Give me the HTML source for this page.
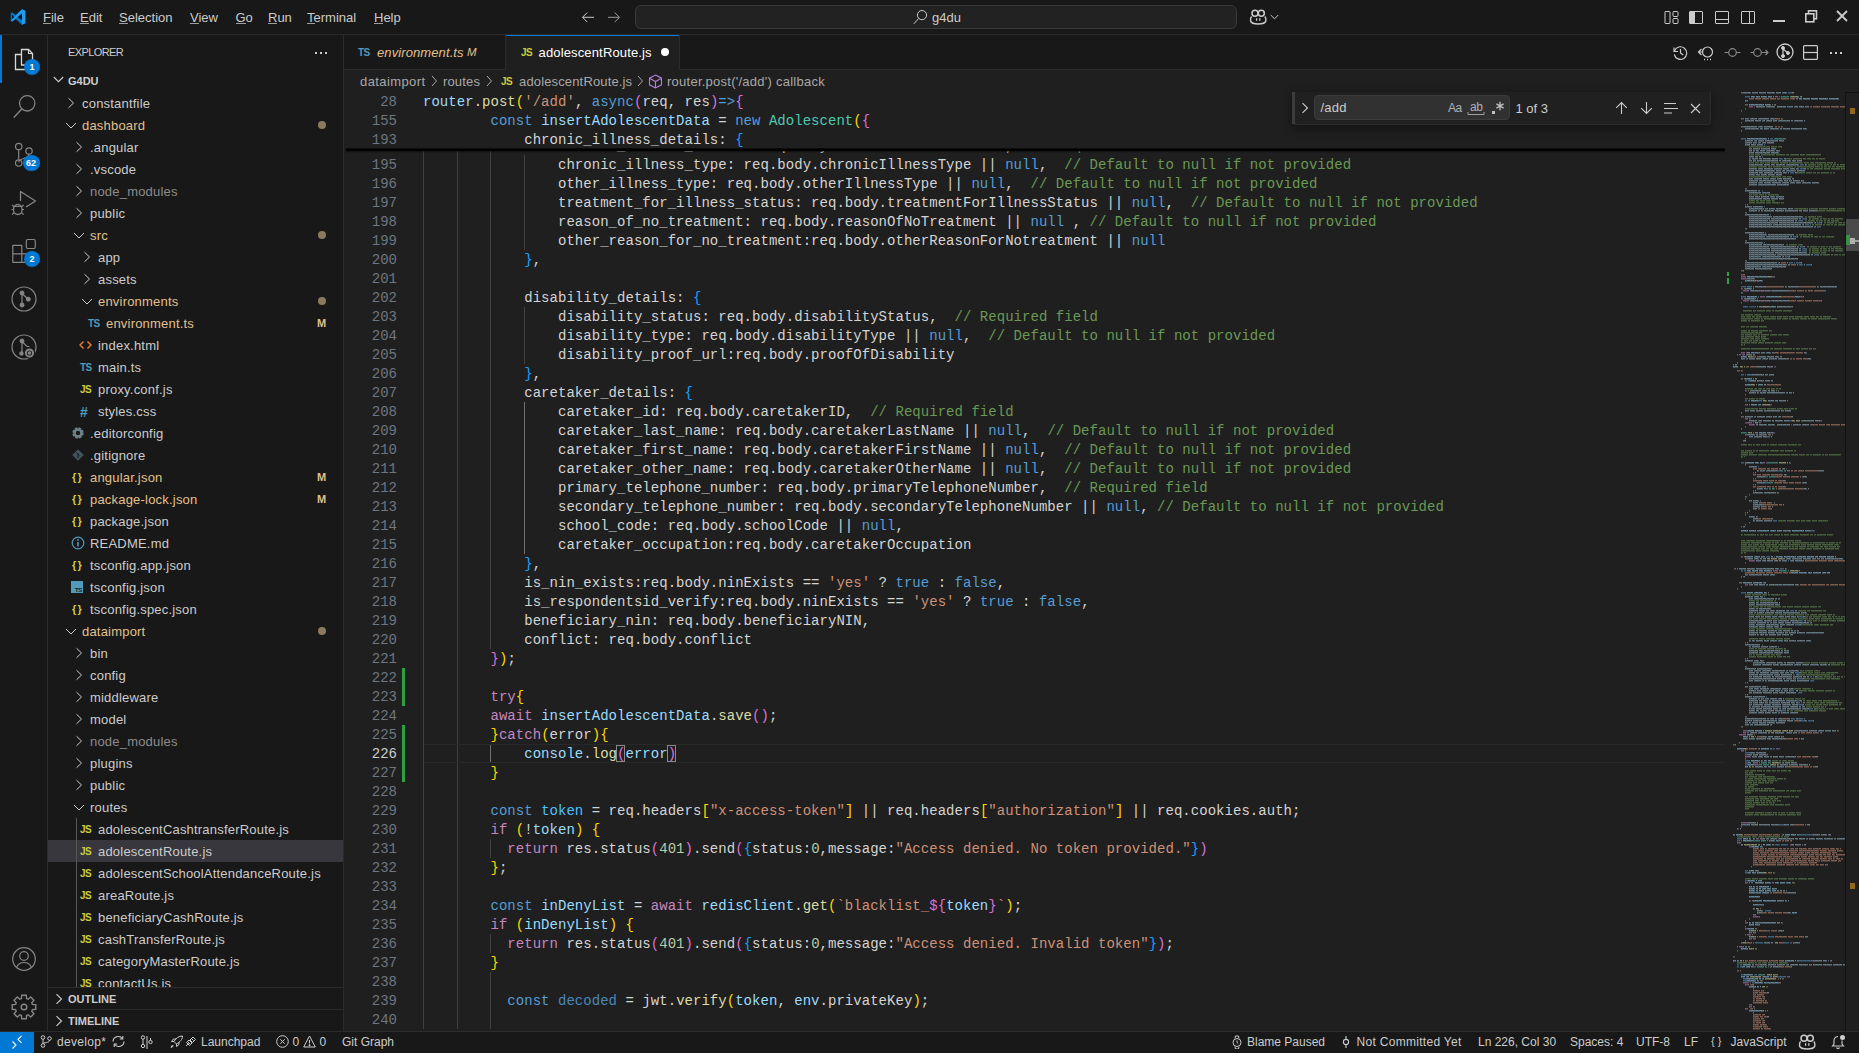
<!DOCTYPE html><html><head><meta charset="utf-8"><style>
*{margin:0;padding:0;box-sizing:border-box}
html,body{width:1859px;height:1053px;overflow:hidden;background:#181818}
body{position:relative;font-family:'Liberation Sans', sans-serif;color:#cccccc;font-size:13px}
.a{position:absolute}
.t{position:absolute;white-space:pre;line-height:1}
.code{position:absolute;margin-top:1px;left:423px;white-space:pre;font-family:'Liberation Mono', monospace;font-size:14px;line-height:19px;height:19px;color:#d4d4d4;letter-spacing:0.036px}
.ln{position:absolute;margin-top:1px;left:344px;width:53px;text-align:right;font-family:'Liberation Mono', monospace;font-size:14px;line-height:19px;height:19px;color:#6e7681}
.ig{position:absolute;width:1px;background:#404040}
.mm{position:absolute;height:1px}
</style></head><body>
<div class="a" style="left:0px;top:0px;width:1859px;height:34px;background:#181818;"></div>
<div class="a" style="left:0px;top:34px;width:1859px;height:1px;background:#2b2b2b;"></div>
<div class="a" style="left:47px;top:35px;width:1px;height:996px;background:#2b2b2b;"></div>
<div class="a" style="left:343px;top:35px;width:1px;height:996px;background:#2b2b2b;"></div>
<div class="a" style="left:344px;top:70px;width:1515px;height:961px;background:#1f1f1f;"></div>
<div class="a" style="left:0px;top:1031px;width:1859px;height:1px;background:#2b2b2b;"></div>
<svg class="a" style="left:10px;top:9px" width="16" height="16" viewBox="0 0 100 100">
<path d="M96 11 L75 1 L35 38 L14 22 L4 27 L4 73 L14 78 L35 62 L75 99 L96 89 Z" fill="#0065a9"/>
<path d="M75 1 L96 11 L96 89 L75 99 Z" fill="#1f9cf0"/>
<path d="M75 27 L75 73 L45 50 Z" fill="#181818"/>
<path d="M14 34 L28 50 L14 66 Z" fill="#181818"/>
<path d="M4 27 L14 22 L75 73 L75 99 L4 27Z" fill="#007acc" opacity="0.9"/>
<path d="M4 73 L14 78 L75 27 L75 1 Z" fill="#1f9cf0"/>
</svg>
<div class="t" style="left:43px;top:11.00px;font-size:13px;height:13px;color:#cccccc;font-weight:normal;font-style:normal;font-family:'Liberation Sans', sans-serif;">File</div>
<div class="a" style="left:43px;top:23px;width:8px;height:1px;background:#9d9d9d;"></div>
<div class="t" style="left:80px;top:11.00px;font-size:13px;height:13px;color:#cccccc;font-weight:normal;font-style:normal;font-family:'Liberation Sans', sans-serif;">Edit</div>
<div class="a" style="left:80px;top:23px;width:9px;height:1px;background:#9d9d9d;"></div>
<div class="t" style="left:119px;top:11.00px;font-size:13px;height:13px;color:#cccccc;font-weight:normal;font-style:normal;font-family:'Liberation Sans', sans-serif;">Selection</div>
<div class="a" style="left:119px;top:23px;width:9px;height:1px;background:#9d9d9d;"></div>
<div class="t" style="left:190px;top:11.00px;font-size:13px;height:13px;color:#cccccc;font-weight:normal;font-style:normal;font-family:'Liberation Sans', sans-serif;">View</div>
<div class="a" style="left:190px;top:23px;width:9px;height:1px;background:#9d9d9d;"></div>
<div class="t" style="left:235.5px;top:11.00px;font-size:13px;height:13px;color:#cccccc;font-weight:normal;font-style:normal;font-family:'Liberation Sans', sans-serif;">Go</div>
<div class="a" style="left:235.5px;top:23px;width:10px;height:1px;background:#9d9d9d;"></div>
<div class="t" style="left:268px;top:11.00px;font-size:13px;height:13px;color:#cccccc;font-weight:normal;font-style:normal;font-family:'Liberation Sans', sans-serif;">Run</div>
<div class="a" style="left:268px;top:23px;width:9px;height:1px;background:#9d9d9d;"></div>
<div class="t" style="left:307px;top:11.00px;font-size:13px;height:13px;color:#cccccc;font-weight:normal;font-style:normal;font-family:'Liberation Sans', sans-serif;">Terminal</div>
<div class="a" style="left:307px;top:23px;width:8px;height:1px;background:#9d9d9d;"></div>
<div class="t" style="left:374px;top:11.00px;font-size:13px;height:13px;color:#cccccc;font-weight:normal;font-style:normal;font-family:'Liberation Sans', sans-serif;">Help</div>
<div class="a" style="left:374px;top:23px;width:9px;height:1px;background:#9d9d9d;"></div>
<svg class="a" style="left:581px;top:10px;color:#cccccc;" width="14" height="14" viewBox="0 0 14 14" fill="none" stroke="currentColor"><path d="M13 7.3H1.8M6.3 2.5L1.5 7.3l4.8 4.8" stroke-width="1"/></svg>
<svg class="a" style="left:607px;top:10px;color:#9d9d9d;" width="14" height="14" viewBox="0 0 14 14" fill="none" stroke="currentColor"><path d="M1 7.3h11.2M7.7 2.5l4.8 4.8-4.8 4.8" stroke-width="1"/></svg>
<div class="a" style="left:635px;top:5px;width:602px;height:24px;border:1px solid #3a3a3a;border-radius:6px;background:#222222"></div>
<svg class="a" style="left:910px;top:8px;color:#cccccc;" width="20" height="20" viewBox="0 0 20 20" fill="none" stroke="currentColor"><circle cx="12" cy="7.1" r="4.6" stroke-width="1"/><path d="M8.7 10.5L3.8 15.8" stroke-width="1"/></svg>
<div class="t" style="left:932px;top:11.00px;font-size:13px;height:13px;color:#cccccc;font-weight:normal;font-style:normal;font-family:'Liberation Sans', sans-serif;">g4du</div>
<svg class="a" style="left:1240px;top:0px;color:#cccccc;" width="50" height="35" viewBox="0 0 50 35" fill="none" stroke="currentColor"><circle cx="15" cy="13.3" r="3" stroke-width="1.5"/><circle cx="21.3" cy="13.3" r="3" stroke-width="1.5"/><path d="M11.6 16.5C10.6 17.5 10.3 19.5 10.6 21C11.2 23.3 14.5 24 18.2 24S25.2 23.3 25.8 21C26.1 19.5 25.8 17.5 24.8 16.5" stroke-width="1.5"/><path d="M16.6 18.2v2.6M19.8 18.2v2.6" stroke-width="1.3"/></svg>
<svg class="a" style="left:1270px;top:14px;color:#cccccc;" width="9" height="6" viewBox="0 0 9 6" fill="none" stroke="currentColor"><path d="M0.7 1l3.8 3.8L8.3 1" stroke-width="1"/></svg>
<svg class="a" style="left:1664px;top:10px;color:#cccccc;" width="15" height="15" viewBox="0 0 15 15" fill="none" stroke="currentColor"><rect x="1" y="1.5" width="5" height="12" rx="0.5" stroke-width="1"/><rect x="9" y="1.5" width="5" height="5" rx="1" stroke-width="1"/><rect x="9" y="8.5" width="5" height="5" rx="1" stroke-width="1"/></svg>
<svg class="a" style="left:1689px;top:10px;color:#cccccc;" width="14" height="15" viewBox="0 0 14 15" fill="none" stroke="currentColor"><rect x="0.5" y="1.5" width="13" height="12" rx="0.5" stroke-width="1"/><rect x="1" y="2" width="5" height="11" fill="currentColor" stroke="none"/></svg>
<svg class="a" style="left:1715px;top:10px;color:#cccccc;" width="14" height="15" viewBox="0 0 14 15" fill="none" stroke="currentColor"><rect x="0.5" y="1.5" width="13" height="12" rx="0.5" stroke-width="1"/><path d="M1 9.5h12" stroke-width="1"/></svg>
<svg class="a" style="left:1741px;top:10px;color:#cccccc;" width="14" height="15" viewBox="0 0 14 15" fill="none" stroke="currentColor"><rect x="0.5" y="1.5" width="13" height="12" rx="0.5" stroke-width="1"/><path d="M8.5 2v11" stroke-width="1"/></svg>
<div class="a" style="left:1773px;top:20px;width:12px;height:2px;background:#cccccc;"></div>
<svg class="a" style="left:1804px;top:9px;color:#cccccc;" width="14" height="14" viewBox="0 0 14 14" fill="none" stroke="currentColor"><rect x="4.5" y="1.8" width="8" height="8" stroke-width="1.6"/><rect x="6.5" y="3.8" width="4" height="4" fill="#181818" stroke="none"/><rect x="1.8" y="4.8" width="8" height="8" fill="#181818" stroke-width="1.6"/></svg>
<svg class="a" style="left:1836px;top:10px;color:#cccccc;" width="12" height="12" viewBox="0 0 12 12" fill="none" stroke="currentColor"><path d="M1 1l10 10M11 1L1 11" stroke-width="1.8"/></svg>
<div class="a" style="left:0px;top:35px;width:2px;height:48px;background:#0078d4;"></div>
<svg class="a" style="left:12px;top:46px;color:#d7d7d7;" width="24" height="26" viewBox="0 0 24 26" fill="none" stroke="currentColor"><path d="M9.5 3.5h7l4 4v11.5h-11z" stroke-width="1.3"/><path d="M16.5 3.5v4h4" stroke-width="1.1"/><path d="M9.5 8.5h-6v15h11.5v-4.5" stroke-width="1.3"/></svg>
<div class="a" style="left:24px;top:59px;width:16px;height:16px;border-radius:8px;background:#0078d4;color:#fff;font-size:9px;font-weight:bold;line-height:16px;text-align:center">1</div>
<svg class="a" style="left:0px;top:83px;color:#868686;" width="48" height="48" viewBox="0 0 48 48" fill="none" stroke="currentColor"><circle cx="27.2" cy="20.3" r="7.7" stroke-width="1.3"/><path d="M21.8 26L13.8 34.5" stroke-width="1.4"/></svg>
<svg class="a" style="left:0px;top:131px;color:#868686;" width="48" height="48" viewBox="0 0 48 48" fill="none" stroke="currentColor"><circle cx="18.7" cy="15.5" r="3.2" stroke-width="1.2"/><circle cx="18.7" cy="32" r="3.2" stroke-width="1.2"/><circle cx="29" cy="20" r="3.2" stroke-width="1.2"/><path d="M18.7 18.7v10.1M29 23.2c0 5-10.3 3.5-10.3 8" stroke-width="1.2"/></svg>
<div class="a" style="left:22.5px;top:154.5px;width:17px;height:16px;border-radius:8px;background:#0078d4;color:#fff;font-size:9px;font-weight:bold;line-height:16px;text-align:center">62</div>
<svg class="a" style="left:0px;top:180px;color:#868686;" width="48" height="48" viewBox="0 0 48 48" fill="none" stroke="currentColor"><path d="M20.5 21V11.5L35.5 21L26 27" stroke-width="1.3" stroke-linejoin="round"/><ellipse cx="17.8" cy="29.5" rx="4.3" ry="5" stroke-width="1.3"/><path d="M14 26.5h7.6M12 25l2.2 1.8M23.6 25l-2.2 1.8M11.5 29.5h2.3M21.8 29.5h2.3M12 34.5l2.2-1.8M23.6 34.5l-2.2-1.8" stroke-width="1.1"/></svg>
<svg class="a" style="left:0px;top:228px;color:#868686;" width="48" height="48" viewBox="0 0 48 48" fill="none" stroke="currentColor"><path d="M12.8 17.3h9v17h-9zM12.8 25.8h17.5v8.5h-8.5" stroke-width="1.2" stroke-linejoin="round"/><rect x="26.3" y="11.5" width="9" height="9" rx="1.5" stroke-width="1.2"/></svg>
<div class="a" style="left:24px;top:251px;width:16px;height:16px;border-radius:8px;background:#0078d4;color:#fff;font-size:9px;font-weight:bold;line-height:16px;text-align:center">2</div>
<svg class="a" style="left:0px;top:275px;color:#868686;" width="48" height="48" viewBox="0 0 48 48" fill="none" stroke="currentColor"><circle cx="24" cy="24" r="12" stroke-width="1.2"/><circle cx="22" cy="18" r="2" fill="currentColor"/><circle cx="22" cy="30" r="2" fill="currentColor"/><circle cx="28.3" cy="24.2" r="2" fill="currentColor"/><path d="M22 18v12M22 18.5l6 5.5" stroke-width="1.2"/></svg>
<svg class="a" style="left:0px;top:323px;color:#868686;" width="48" height="48" viewBox="0 0 48 48" fill="none" stroke="currentColor"><circle cx="24" cy="24" r="12" stroke-width="1.2"/><circle cx="22" cy="18" r="2" fill="currentColor"/><circle cx="21.5" cy="30.5" r="1.8" fill="currentColor"/><path d="M22 18v12M22 18.5l5 5h2.5" stroke-width="1.2"/><circle cx="29.5" cy="30" r="5.8" fill="#181818" stroke="none"/><circle cx="29.5" cy="30" r="3.6" stroke-width="2"/><circle cx="29.5" cy="30" r="1.8" fill="currentColor" stroke="none"/></svg>
<svg class="a" style="left:11px;top:946px;color:#868686;" width="26" height="26" viewBox="0 0 26 26" fill="none" stroke="currentColor"><circle cx="13" cy="13" r="11.3" stroke-width="1.2"/><circle cx="13" cy="10" r="4.3" stroke-width="1.2"/><path d="M5.5 21.5c1.5-3.5 4.5-5 7.5-5s6 1.5 7.5 5" stroke-width="1.2"/></svg>
<svg class="a" style="left:11px;top:994px;color:#868686;" width="26" height="26" viewBox="0 0 26 26" fill="none" stroke="currentColor"><path d="M24.78 10.73 L24.78 15.27 L21.41 15.60 L20.78 17.11 L22.94 19.73 L19.73 22.94 L17.11 20.78 L15.60 21.41 L15.27 24.78 L10.73 24.78 L10.40 21.41 L8.89 20.78 L6.27 22.94 L3.06 19.73 L5.22 17.11 L4.59 15.60 L1.22 15.27 L1.22 10.73 L4.59 10.40 L5.22 8.89 L3.06 6.27 L6.27 3.06 L8.89 5.22 L10.40 4.59 L10.73 1.22 L15.27 1.22 L15.60 4.59 L17.11 5.22 L19.73 3.06 L22.94 6.27 L20.78 8.89 L21.41 10.40Z" stroke-width="1.4" stroke-linejoin="miter"/><circle cx="13" cy="13" r="2.8" stroke-width="1.4"/></svg>
<div class="t" style="left:68px;top:47.00px;font-size:11px;height:11px;color:#cccccc;font-weight:normal;font-style:normal;font-family:'Liberation Sans', sans-serif;letter-spacing:-0.6px">EXPLORER</div>
<div class="a" style="left:315px;top:52px;width:2px;height:2px;background:#cccccc;"></div>
<div class="a" style="left:320px;top:52px;width:2px;height:2px;background:#cccccc;"></div>
<div class="a" style="left:325px;top:52px;width:2px;height:2px;background:#cccccc;"></div>
<svg class="a" style="left:53px;top:76px;color:#cccccc;" width="11" height="7" viewBox="0 0 11 7" fill="none" stroke="currentColor"><path d="M0.8 1l4.7 4.7L10.2 1" stroke-width="1.1"/></svg>
<div class="t" style="left:68px;top:75.50px;font-size:11px;height:11px;color:#cccccc;font-weight:bold;font-style:normal;font-family:'Liberation Sans', sans-serif;">G4DU</div>
<div class="a" style="left:48px;top:92px;width:295px;height:895px;overflow:hidden">
<svg class="a" style="left:19.4px;top:5px;color:#cccccc;" width="8" height="12" viewBox="0 0 8 12" fill="none" stroke="currentColor"><path d="M1.5 1.2l5 4.8-5 4.8" stroke-width="1"/></svg>
<div class="t" style="left:34px;top:4.50px;font-size:13px;height:13px;color:#cccccc;letter-spacing:0.2px">constantfile</div>
<svg class="a" style="left:17px;top:29px;color:#cccccc;" width="12" height="8" viewBox="0 0 12 8" fill="none" stroke="currentColor"><path d="M1 2l5 5 5-5" stroke-width="1"/></svg>
<div class="t" style="left:34px;top:26.50px;font-size:13px;height:13px;color:#e2c08d;letter-spacing:0.2px">dashboard</div>
<div class="a" style="left:270px;top:29px;width:8px;height:8px;background:#8c7a5e;border-radius:4px"></div>
<svg class="a" style="left:27.4px;top:49px;color:#cccccc;" width="8" height="12" viewBox="0 0 8 12" fill="none" stroke="currentColor"><path d="M1.5 1.2l5 4.8-5 4.8" stroke-width="1"/></svg>
<div class="t" style="left:42px;top:48.50px;font-size:13px;height:13px;color:#cccccc;letter-spacing:0.2px">.angular</div>
<svg class="a" style="left:27.4px;top:71px;color:#cccccc;" width="8" height="12" viewBox="0 0 8 12" fill="none" stroke="currentColor"><path d="M1.5 1.2l5 4.8-5 4.8" stroke-width="1"/></svg>
<div class="t" style="left:42px;top:70.50px;font-size:13px;height:13px;color:#cccccc;letter-spacing:0.2px">.vscode</div>
<svg class="a" style="left:27.4px;top:93px;color:#cccccc;" width="8" height="12" viewBox="0 0 8 12" fill="none" stroke="currentColor"><path d="M1.5 1.2l5 4.8-5 4.8" stroke-width="1"/></svg>
<div class="t" style="left:42px;top:92.50px;font-size:13px;height:13px;color:#8c8c8c;letter-spacing:0.2px">node_modules</div>
<svg class="a" style="left:27.4px;top:115px;color:#cccccc;" width="8" height="12" viewBox="0 0 8 12" fill="none" stroke="currentColor"><path d="M1.5 1.2l5 4.8-5 4.8" stroke-width="1"/></svg>
<div class="t" style="left:42px;top:114.50px;font-size:13px;height:13px;color:#cccccc;letter-spacing:0.2px">public</div>
<svg class="a" style="left:25px;top:139px;color:#cccccc;" width="12" height="8" viewBox="0 0 12 8" fill="none" stroke="currentColor"><path d="M1 2l5 5 5-5" stroke-width="1"/></svg>
<div class="t" style="left:42px;top:136.50px;font-size:13px;height:13px;color:#e2c08d;letter-spacing:0.2px">src</div>
<div class="a" style="left:270px;top:139px;width:8px;height:8px;background:#8c7a5e;border-radius:4px"></div>
<svg class="a" style="left:35.4px;top:159px;color:#cccccc;" width="8" height="12" viewBox="0 0 8 12" fill="none" stroke="currentColor"><path d="M1.5 1.2l5 4.8-5 4.8" stroke-width="1"/></svg>
<div class="t" style="left:50px;top:158.50px;font-size:13px;height:13px;color:#cccccc;letter-spacing:0.2px">app</div>
<svg class="a" style="left:35.4px;top:181px;color:#cccccc;" width="8" height="12" viewBox="0 0 8 12" fill="none" stroke="currentColor"><path d="M1.5 1.2l5 4.8-5 4.8" stroke-width="1"/></svg>
<div class="t" style="left:50px;top:180.50px;font-size:13px;height:13px;color:#cccccc;letter-spacing:0.2px">assets</div>
<svg class="a" style="left:33px;top:205px;color:#cccccc;" width="12" height="8" viewBox="0 0 12 8" fill="none" stroke="currentColor"><path d="M1 2l5 5 5-5" stroke-width="1"/></svg>
<div class="t" style="left:50px;top:202.50px;font-size:13px;height:13px;color:#e2c08d;letter-spacing:0.2px">environments</div>
<div class="a" style="left:270px;top:205px;width:8px;height:8px;background:#8c7a5e;border-radius:4px"></div>
<div class="t" style="left:40px;top:226.50px;font-size:10px;height:10px;color:#519aba;font-weight:bold;letter-spacing:-0.6px">TS</div>
<div class="t" style="left:58px;top:224.50px;font-size:13px;height:13px;color:#e2c08d;letter-spacing:0.2px">environment.ts</div>
<div class="t" style="left:269px;top:225.50px;font-size:11px;height:11px;color:#e2c08d;font-weight:bold">M</div>
<svg class="a" style="left:31px;top:248px;color:#e37933;" width="13" height="10" viewBox="0 0 13 10" fill="none" stroke="currentColor"><path d="M4.5 1.5L1 5l3.5 3.5M8.5 1.5L12 5 8.5 8.5" stroke-width="1.5"/></svg>
<div class="t" style="left:50px;top:246.50px;font-size:13px;height:13px;color:#cccccc;letter-spacing:0.2px">index.html</div>
<div class="t" style="left:32px;top:270.50px;font-size:10px;height:10px;color:#519aba;font-weight:bold;letter-spacing:-0.6px">TS</div>
<div class="t" style="left:50px;top:268.50px;font-size:13px;height:13px;color:#cccccc;letter-spacing:0.2px">main.ts</div>
<div class="t" style="left:32px;top:292.50px;font-size:10px;height:10px;color:#cbcb41;font-weight:bold;letter-spacing:-0.6px">JS</div>
<div class="t" style="left:50px;top:290.50px;font-size:13px;height:13px;color:#cccccc;letter-spacing:0.2px">proxy.conf.js</div>
<div class="t" style="left:32px;top:312.50px;font-size:14px;height:14px;color:#519aba;font-weight:bold">#</div>
<div class="t" style="left:50px;top:312.50px;font-size:13px;height:13px;color:#cccccc;letter-spacing:0.2px">styles.css</div>
<svg class="a" style="left:23px;top:334px;color:#6d8086;" width="14" height="14" viewBox="0 0 14 14" fill="none" stroke="currentColor"><circle cx="7" cy="7" r="4.2" stroke-width="3" stroke-dasharray="2.2 1.1"/><circle cx="7" cy="7" r="3.5" stroke-width="2.6"/></svg>
<div class="t" style="left:42px;top:334.50px;font-size:13px;height:13px;color:#cccccc;letter-spacing:0.2px">.editorconfig</div>
<svg class="a" style="left:23px;top:356px;color:#41535b;" width="14" height="14" viewBox="0 0 14 14" fill="none" stroke="currentColor"><path d="M7 1.2L12.8 7 7 12.8 1.2 7z" fill="currentColor" stroke="none"/><path d="M5.5 4.5l3 3M7 6v4" stroke="#181818" stroke-width="1"/></svg>
<div class="t" style="left:42px;top:356.50px;font-size:13px;height:13px;color:#cccccc;letter-spacing:0.2px">.gitignore</div>
<div class="t" style="left:24px;top:380.00px;font-size:11px;height:11px;color:#cbcb41;font-weight:bold;letter-spacing:-0.9px">{ }</div>
<div class="t" style="left:42px;top:378.50px;font-size:13px;height:13px;color:#e2c08d;letter-spacing:0.2px">angular.json</div>
<div class="t" style="left:269px;top:379.50px;font-size:11px;height:11px;color:#e2c08d;font-weight:bold">M</div>
<div class="t" style="left:24px;top:402.00px;font-size:11px;height:11px;color:#cbcb41;font-weight:bold;letter-spacing:-0.9px">{ }</div>
<div class="t" style="left:42px;top:400.50px;font-size:13px;height:13px;color:#e2c08d;letter-spacing:0.2px">package-lock.json</div>
<div class="t" style="left:269px;top:401.50px;font-size:11px;height:11px;color:#e2c08d;font-weight:bold">M</div>
<div class="t" style="left:24px;top:424.00px;font-size:11px;height:11px;color:#cbcb41;font-weight:bold;letter-spacing:-0.9px">{ }</div>
<div class="t" style="left:42px;top:422.50px;font-size:13px;height:13px;color:#cccccc;letter-spacing:0.2px">package.json</div>
<svg class="a" style="left:23px;top:444px;color:#519aba;" width="14" height="14" viewBox="0 0 14 14" fill="none" stroke="currentColor"><circle cx="7" cy="7" r="5.8" stroke-width="1.2"/><path d="M7 6v4.5" stroke-width="1.6"/><circle cx="7" cy="4" r="0.9" fill="currentColor" stroke="none"/></svg>
<div class="t" style="left:42px;top:444.50px;font-size:13px;height:13px;color:#cccccc;letter-spacing:0.2px">README.md</div>
<div class="t" style="left:24px;top:468.00px;font-size:11px;height:11px;color:#cbcb41;font-weight:bold;letter-spacing:-0.9px">{ }</div>
<div class="t" style="left:42px;top:466.50px;font-size:13px;height:13px;color:#cccccc;letter-spacing:0.2px">tsconfig.app.json</div>
<div class="a" style="left:23px;top:489px;width:12px;height:12px;background:#519aba;"></div>
<div class="t" style="left:27px;top:495.00px;font-size:6px;height:6px;color:#1a1a1a;font-weight:bold;letter-spacing:-0.3px">TS</div>
<div class="t" style="left:42px;top:488.50px;font-size:13px;height:13px;color:#cccccc;letter-spacing:0.2px">tsconfig.json</div>
<div class="t" style="left:24px;top:512.00px;font-size:11px;height:11px;color:#cbcb41;font-weight:bold;letter-spacing:-0.9px">{ }</div>
<div class="t" style="left:42px;top:510.50px;font-size:13px;height:13px;color:#cccccc;letter-spacing:0.2px">tsconfig.spec.json</div>
<svg class="a" style="left:17px;top:535px;color:#cccccc;" width="12" height="8" viewBox="0 0 12 8" fill="none" stroke="currentColor"><path d="M1 2l5 5 5-5" stroke-width="1"/></svg>
<div class="t" style="left:34px;top:532.50px;font-size:13px;height:13px;color:#e2c08d;letter-spacing:0.2px">dataimport</div>
<div class="a" style="left:270px;top:535px;width:8px;height:8px;background:#8c7a5e;border-radius:4px"></div>
<svg class="a" style="left:27.4px;top:555px;color:#cccccc;" width="8" height="12" viewBox="0 0 8 12" fill="none" stroke="currentColor"><path d="M1.5 1.2l5 4.8-5 4.8" stroke-width="1"/></svg>
<div class="t" style="left:42px;top:554.50px;font-size:13px;height:13px;color:#cccccc;letter-spacing:0.2px">bin</div>
<svg class="a" style="left:27.4px;top:577px;color:#cccccc;" width="8" height="12" viewBox="0 0 8 12" fill="none" stroke="currentColor"><path d="M1.5 1.2l5 4.8-5 4.8" stroke-width="1"/></svg>
<div class="t" style="left:42px;top:576.50px;font-size:13px;height:13px;color:#cccccc;letter-spacing:0.2px">config</div>
<svg class="a" style="left:27.4px;top:599px;color:#cccccc;" width="8" height="12" viewBox="0 0 8 12" fill="none" stroke="currentColor"><path d="M1.5 1.2l5 4.8-5 4.8" stroke-width="1"/></svg>
<div class="t" style="left:42px;top:598.50px;font-size:13px;height:13px;color:#cccccc;letter-spacing:0.2px">middleware</div>
<svg class="a" style="left:27.4px;top:621px;color:#cccccc;" width="8" height="12" viewBox="0 0 8 12" fill="none" stroke="currentColor"><path d="M1.5 1.2l5 4.8-5 4.8" stroke-width="1"/></svg>
<div class="t" style="left:42px;top:620.50px;font-size:13px;height:13px;color:#cccccc;letter-spacing:0.2px">model</div>
<svg class="a" style="left:27.4px;top:643px;color:#cccccc;" width="8" height="12" viewBox="0 0 8 12" fill="none" stroke="currentColor"><path d="M1.5 1.2l5 4.8-5 4.8" stroke-width="1"/></svg>
<div class="t" style="left:42px;top:642.50px;font-size:13px;height:13px;color:#8c8c8c;letter-spacing:0.2px">node_modules</div>
<svg class="a" style="left:27.4px;top:665px;color:#cccccc;" width="8" height="12" viewBox="0 0 8 12" fill="none" stroke="currentColor"><path d="M1.5 1.2l5 4.8-5 4.8" stroke-width="1"/></svg>
<div class="t" style="left:42px;top:664.50px;font-size:13px;height:13px;color:#cccccc;letter-spacing:0.2px">plugins</div>
<svg class="a" style="left:27.4px;top:687px;color:#cccccc;" width="8" height="12" viewBox="0 0 8 12" fill="none" stroke="currentColor"><path d="M1.5 1.2l5 4.8-5 4.8" stroke-width="1"/></svg>
<div class="t" style="left:42px;top:686.50px;font-size:13px;height:13px;color:#cccccc;letter-spacing:0.2px">public</div>
<svg class="a" style="left:25px;top:711px;color:#cccccc;" width="12" height="8" viewBox="0 0 12 8" fill="none" stroke="currentColor"><path d="M1 2l5 5 5-5" stroke-width="1"/></svg>
<div class="t" style="left:42px;top:708.50px;font-size:13px;height:13px;color:#cccccc;letter-spacing:0.2px">routes</div>
<div class="t" style="left:32px;top:732.50px;font-size:10px;height:10px;color:#cbcb41;font-weight:bold;letter-spacing:-0.6px">JS</div>
<div class="t" style="left:50px;top:730.50px;font-size:13px;height:13px;color:#cccccc;letter-spacing:0.2px">adolescentCashtransferRoute.js</div>
<div class="a" style="left:0px;top:748px;width:295px;height:22px;background:#37373d;"></div>
<div class="t" style="left:32px;top:754.50px;font-size:10px;height:10px;color:#cbcb41;font-weight:bold;letter-spacing:-0.6px">JS</div>
<div class="t" style="left:50px;top:752.50px;font-size:13px;height:13px;color:#cccccc;letter-spacing:0.2px">adolescentRoute.js</div>
<div class="t" style="left:32px;top:776.50px;font-size:10px;height:10px;color:#cbcb41;font-weight:bold;letter-spacing:-0.6px">JS</div>
<div class="t" style="left:50px;top:774.50px;font-size:13px;height:13px;color:#cccccc;letter-spacing:0.2px">adolescentSchoolAttendanceRoute.js</div>
<div class="t" style="left:32px;top:798.50px;font-size:10px;height:10px;color:#cbcb41;font-weight:bold;letter-spacing:-0.6px">JS</div>
<div class="t" style="left:50px;top:796.50px;font-size:13px;height:13px;color:#cccccc;letter-spacing:0.2px">areaRoute.js</div>
<div class="t" style="left:32px;top:820.50px;font-size:10px;height:10px;color:#cbcb41;font-weight:bold;letter-spacing:-0.6px">JS</div>
<div class="t" style="left:50px;top:818.50px;font-size:13px;height:13px;color:#cccccc;letter-spacing:0.2px">beneficiaryCashRoute.js</div>
<div class="t" style="left:32px;top:842.50px;font-size:10px;height:10px;color:#cbcb41;font-weight:bold;letter-spacing:-0.6px">JS</div>
<div class="t" style="left:50px;top:840.50px;font-size:13px;height:13px;color:#cccccc;letter-spacing:0.2px">cashTransferRoute.js</div>
<div class="t" style="left:32px;top:864.50px;font-size:10px;height:10px;color:#cbcb41;font-weight:bold;letter-spacing:-0.6px">JS</div>
<div class="t" style="left:50px;top:862.50px;font-size:13px;height:13px;color:#cccccc;letter-spacing:0.2px">categoryMasterRoute.js</div>
<div class="t" style="left:32px;top:886.50px;font-size:10px;height:10px;color:#cbcb41;font-weight:bold;letter-spacing:-0.6px">JS</div>
<div class="t" style="left:50px;top:884.50px;font-size:13px;height:13px;color:#cccccc;letter-spacing:0.2px">contactUs.js</div>
<div class="a" style="left:28px;top:726px;width:1px;height:169px;background:#585858;"></div>
</div>
<div class="a" style="left:48px;top:987px;width:295px;height:1px;background:#2b2b2b;"></div>
<svg class="a" style="left:55px;top:993px;color:#cccccc;" width="8" height="12" viewBox="0 0 8 12" fill="none" stroke="currentColor"><path d="M1.5 1.2l5 4.8-5 4.8" stroke-width="1.1"/></svg>
<div class="t" style="left:68px;top:993.50px;font-size:11px;height:11px;color:#cccccc;font-weight:bold;font-style:normal;font-family:'Liberation Sans', sans-serif;">OUTLINE</div>
<div class="a" style="left:48px;top:1009px;width:295px;height:1px;background:#2b2b2b;"></div>
<svg class="a" style="left:55px;top:1015px;color:#cccccc;" width="8" height="12" viewBox="0 0 8 12" fill="none" stroke="currentColor"><path d="M1.5 1.2l5 4.8-5 4.8" stroke-width="1.1"/></svg>
<div class="t" style="left:68px;top:1015.50px;font-size:11px;height:11px;color:#cccccc;font-weight:bold;font-style:normal;font-family:'Liberation Sans', sans-serif;">TIMELINE</div>
<div class="a" style="left:344px;top:35px;width:1515px;height:34px;background:#181818;"></div>
<div class="a" style="left:344px;top:69px;width:1515px;height:1px;background:#2b2b2b;"></div>
<div class="a" style="left:505px;top:35px;width:1px;height:35px;background:#2b2b2b;"></div>
<div class="t" style="left:358px;top:47.50px;font-size:10px;height:10px;color:#519aba;font-weight:bold;font-style:normal;font-family:'Liberation Sans', sans-serif;letter-spacing:-0.6px">TS</div>
<div class="t" style="left:377px;top:45.50px;font-size:13px;height:13px;color:#e2c08d;font-weight:normal;font-style:italic;font-family:'Liberation Sans', sans-serif;letter-spacing:0.1px">environment.ts</div>
<div class="t" style="left:467px;top:46.75px;font-size:11.5px;height:11.5px;color:#e2c08d;font-weight:normal;font-style:italic;font-family:'Liberation Sans', sans-serif;">M</div>
<div class="a" style="left:506px;top:35px;width:173px;height:35px;background:#1f1f1f;"></div>
<div class="a" style="left:506px;top:35px;width:173px;height:1px;background:#0078d4;"></div>
<div class="a" style="left:679px;top:35px;width:1px;height:35px;background:#2b2b2b;"></div>
<div class="t" style="left:521px;top:47.50px;font-size:10px;height:10px;color:#cbcb41;font-weight:bold;font-style:normal;font-family:'Liberation Sans', sans-serif;letter-spacing:-0.6px">JS</div>
<div class="t" style="left:538.5px;top:45.50px;font-size:13px;height:13px;color:#ffffff;font-weight:normal;font-style:normal;font-family:'Liberation Sans', sans-serif;letter-spacing:0.15px">adolescentRoute.js</div>
<div class="a" style="left:660.5px;top:48px;width:8px;height:8px;background:#ffffff;border-radius:4px"></div>
<svg class="a" style="left:1671px;top:44px;color:#cccccc;" width="18" height="17" viewBox="0 0 18 17" fill="none" stroke="currentColor"><path d="M3 3.5v4h4" stroke-width="1.2"/><path d="M3.5 7A6.3 6.3 0 1 1 3.3 10.5" stroke-width="1.2"/><path d="M9.5 5v4l2.8 2" stroke-width="1.2"/></svg>
<svg class="a" style="left:1697px;top:44px;color:#cccccc;" width="19" height="18" viewBox="0 0 19 18" fill="none" stroke="currentColor"><circle cx="10.5" cy="8" r="5" stroke-width="1.2"/><path d="M1.5 8h4M4.5 5l-3 3 3 3" stroke-width="1.2"/><path d="M7 15.5h1M10 15.5h1M13 15.5h1" stroke-width="1.5"/></svg>
<svg class="a" style="left:1724px;top:46px;color:#8a8a8a;" width="17" height="13" viewBox="0 0 17 13" fill="none" stroke="currentColor"><circle cx="8.5" cy="6.5" r="3.8" stroke-width="1.2"/><path d="M0.5 6.5h4M12.5 6.5h4" stroke-width="1.2"/></svg>
<svg class="a" style="left:1750px;top:46px;color:#8a8a8a;" width="19" height="13" viewBox="0 0 19 13" fill="none" stroke="currentColor"><circle cx="7.5" cy="6.5" r="3.8" stroke-width="1.2"/><path d="M0.5 6.5h3M11.5 6.5h6M15.5 4l2.5 2.5L15.5 9" stroke-width="1.2"/></svg>
<svg class="a" style="left:1776px;top:43px;color:#cccccc;" width="18" height="18" viewBox="0 0 18 18" fill="none" stroke="currentColor"><circle cx="9" cy="9" r="8" stroke-width="1.3"/><circle cx="7" cy="5" r="1.5" fill="currentColor"/><circle cx="7" cy="13" r="1.5" fill="currentColor"/><circle cx="12" cy="10" r="1.5" fill="currentColor"/><path d="M7 5v8M7 6l5 4" stroke-width="1.2"/></svg>
<svg class="a" style="left:1803px;top:45px;color:#cccccc;" width="15" height="15" viewBox="0 0 15 15" fill="none" stroke="currentColor"><rect x="0.6" y="0.6" width="13.8" height="13.8" rx="1" stroke-width="1.2"/><path d="M1 7.5h13" stroke-width="1.2"/></svg>
<div class="a" style="left:1830px;top:52px;width:2px;height:2px;background:#cccccc;"></div>
<div class="a" style="left:1835px;top:52px;width:2px;height:2px;background:#cccccc;"></div>
<div class="a" style="left:1840px;top:52px;width:2px;height:2px;background:#cccccc;"></div>
<div class="t" style="left:360px;top:75.00px;font-size:13px;height:13px;color:#a9a9a9;font-weight:normal;font-style:normal;font-family:'Liberation Sans', sans-serif;letter-spacing:0.4px">dataimport</div>
<svg class="a" style="left:431px;top:75px;color:#a9a9a9;" width="7" height="12" viewBox="0 0 7 12" fill="none" stroke="currentColor"><path d="M1 1l4.5 5L1 11" stroke-width="1"/></svg>
<div class="t" style="left:443px;top:75.00px;font-size:13px;height:13px;color:#a9a9a9;font-weight:normal;font-style:normal;font-family:'Liberation Sans', sans-serif;letter-spacing:0.15px">routes</div>
<svg class="a" style="left:486px;top:75px;color:#a9a9a9;" width="7" height="12" viewBox="0 0 7 12" fill="none" stroke="currentColor"><path d="M1 1l4.5 5L1 11" stroke-width="1"/></svg>
<div class="t" style="left:501px;top:77.00px;font-size:10px;height:10px;color:#cbcb41;font-weight:bold;font-style:normal;font-family:'Liberation Sans', sans-serif;letter-spacing:-0.6px">JS</div>
<div class="t" style="left:519px;top:75.00px;font-size:13px;height:13px;color:#a9a9a9;font-weight:normal;font-style:normal;font-family:'Liberation Sans', sans-serif;letter-spacing:0.15px">adolescentRoute.js</div>
<svg class="a" style="left:637px;top:75px;color:#a9a9a9;" width="7" height="12" viewBox="0 0 7 12" fill="none" stroke="currentColor"><path d="M1 1l4.5 5L1 11" stroke-width="1"/></svg>
<svg class="a" style="left:648px;top:74px;color:#b180d7;" width="15" height="15" viewBox="0 0 15 15" fill="none" stroke="currentColor"><path d="M7.5 1L13.5 4.2v6.6L7.5 14 1.5 10.8V4.2z" stroke-width="1.1"/><path d="M1.5 4.2L7.5 7.5 13.5 4.2M7.5 7.5V14" stroke-width="1.1"/></svg>
<div class="t" style="left:667px;top:75.00px;font-size:13px;height:13px;color:#a9a9a9;font-weight:normal;font-style:normal;font-family:'Liberation Sans', sans-serif;letter-spacing:0.25px">router.post('/add') callback</div>
<div class="a" style="left:344px;top:92px;width:1397px;height:939px;overflow:hidden">
<div class="a" style="left:79px;top:44px;width:1px;height:19px;background:#404040"></div>
<div class="a" style="left:113px;top:44px;width:1px;height:19px;background:#404040"></div>
<div class="a" style="left:146px;top:44px;width:1px;height:19px;background:#404040"></div>
<div class="a" style="left:79px;top:63px;width:1px;height:19px;background:#404040"></div>
<div class="a" style="left:113px;top:63px;width:1px;height:19px;background:#404040"></div>
<div class="a" style="left:146px;top:63px;width:1px;height:19px;background:#404040"></div>
<div class="a" style="left:180px;top:63px;width:1px;height:19px;background:#404040"></div>
<div class="a" style="left:79px;top:82px;width:1px;height:19px;background:#404040"></div>
<div class="a" style="left:113px;top:82px;width:1px;height:19px;background:#404040"></div>
<div class="a" style="left:146px;top:82px;width:1px;height:19px;background:#404040"></div>
<div class="a" style="left:180px;top:82px;width:1px;height:19px;background:#404040"></div>
<div class="a" style="left:79px;top:101px;width:1px;height:19px;background:#404040"></div>
<div class="a" style="left:113px;top:101px;width:1px;height:19px;background:#404040"></div>
<div class="a" style="left:146px;top:101px;width:1px;height:19px;background:#404040"></div>
<div class="a" style="left:180px;top:101px;width:1px;height:19px;background:#404040"></div>
<div class="a" style="left:79px;top:120px;width:1px;height:19px;background:#404040"></div>
<div class="a" style="left:113px;top:120px;width:1px;height:19px;background:#404040"></div>
<div class="a" style="left:146px;top:120px;width:1px;height:19px;background:#404040"></div>
<div class="a" style="left:180px;top:120px;width:1px;height:19px;background:#404040"></div>
<div class="a" style="left:79px;top:139px;width:1px;height:19px;background:#404040"></div>
<div class="a" style="left:113px;top:139px;width:1px;height:19px;background:#404040"></div>
<div class="a" style="left:146px;top:139px;width:1px;height:19px;background:#404040"></div>
<div class="a" style="left:180px;top:139px;width:1px;height:19px;background:#404040"></div>
<div class="a" style="left:79px;top:158px;width:1px;height:19px;background:#404040"></div>
<div class="a" style="left:113px;top:158px;width:1px;height:19px;background:#404040"></div>
<div class="a" style="left:146px;top:158px;width:1px;height:19px;background:#404040"></div>
<div class="a" style="left:79px;top:177px;width:1px;height:19px;background:#404040"></div>
<div class="a" style="left:113px;top:177px;width:1px;height:19px;background:#404040"></div>
<div class="a" style="left:146px;top:177px;width:1px;height:19px;background:#404040"></div>
<div class="a" style="left:79px;top:196px;width:1px;height:19px;background:#404040"></div>
<div class="a" style="left:113px;top:196px;width:1px;height:19px;background:#404040"></div>
<div class="a" style="left:146px;top:196px;width:1px;height:19px;background:#404040"></div>
<div class="a" style="left:79px;top:215px;width:1px;height:19px;background:#404040"></div>
<div class="a" style="left:113px;top:215px;width:1px;height:19px;background:#404040"></div>
<div class="a" style="left:146px;top:215px;width:1px;height:19px;background:#404040"></div>
<div class="a" style="left:180px;top:215px;width:1px;height:19px;background:#404040"></div>
<div class="a" style="left:79px;top:234px;width:1px;height:19px;background:#404040"></div>
<div class="a" style="left:113px;top:234px;width:1px;height:19px;background:#404040"></div>
<div class="a" style="left:146px;top:234px;width:1px;height:19px;background:#404040"></div>
<div class="a" style="left:180px;top:234px;width:1px;height:19px;background:#404040"></div>
<div class="a" style="left:79px;top:253px;width:1px;height:19px;background:#404040"></div>
<div class="a" style="left:113px;top:253px;width:1px;height:19px;background:#404040"></div>
<div class="a" style="left:146px;top:253px;width:1px;height:19px;background:#404040"></div>
<div class="a" style="left:180px;top:253px;width:1px;height:19px;background:#404040"></div>
<div class="a" style="left:79px;top:272px;width:1px;height:19px;background:#404040"></div>
<div class="a" style="left:113px;top:272px;width:1px;height:19px;background:#404040"></div>
<div class="a" style="left:146px;top:272px;width:1px;height:19px;background:#404040"></div>
<div class="a" style="left:79px;top:291px;width:1px;height:19px;background:#404040"></div>
<div class="a" style="left:113px;top:291px;width:1px;height:19px;background:#404040"></div>
<div class="a" style="left:146px;top:291px;width:1px;height:19px;background:#404040"></div>
<div class="a" style="left:79px;top:310px;width:1px;height:19px;background:#404040"></div>
<div class="a" style="left:113px;top:310px;width:1px;height:19px;background:#404040"></div>
<div class="a" style="left:146px;top:310px;width:1px;height:19px;background:#404040"></div>
<div class="a" style="left:180px;top:310px;width:1px;height:19px;background:#707070"></div>
<div class="a" style="left:79px;top:329px;width:1px;height:19px;background:#404040"></div>
<div class="a" style="left:113px;top:329px;width:1px;height:19px;background:#404040"></div>
<div class="a" style="left:146px;top:329px;width:1px;height:19px;background:#404040"></div>
<div class="a" style="left:180px;top:329px;width:1px;height:19px;background:#707070"></div>
<div class="a" style="left:79px;top:348px;width:1px;height:19px;background:#404040"></div>
<div class="a" style="left:113px;top:348px;width:1px;height:19px;background:#404040"></div>
<div class="a" style="left:146px;top:348px;width:1px;height:19px;background:#404040"></div>
<div class="a" style="left:180px;top:348px;width:1px;height:19px;background:#707070"></div>
<div class="a" style="left:79px;top:367px;width:1px;height:19px;background:#404040"></div>
<div class="a" style="left:113px;top:367px;width:1px;height:19px;background:#404040"></div>
<div class="a" style="left:146px;top:367px;width:1px;height:19px;background:#404040"></div>
<div class="a" style="left:180px;top:367px;width:1px;height:19px;background:#707070"></div>
<div class="a" style="left:79px;top:386px;width:1px;height:19px;background:#404040"></div>
<div class="a" style="left:113px;top:386px;width:1px;height:19px;background:#404040"></div>
<div class="a" style="left:146px;top:386px;width:1px;height:19px;background:#404040"></div>
<div class="a" style="left:180px;top:386px;width:1px;height:19px;background:#707070"></div>
<div class="a" style="left:79px;top:405px;width:1px;height:19px;background:#404040"></div>
<div class="a" style="left:113px;top:405px;width:1px;height:19px;background:#404040"></div>
<div class="a" style="left:146px;top:405px;width:1px;height:19px;background:#404040"></div>
<div class="a" style="left:180px;top:405px;width:1px;height:19px;background:#707070"></div>
<div class="a" style="left:79px;top:424px;width:1px;height:19px;background:#404040"></div>
<div class="a" style="left:113px;top:424px;width:1px;height:19px;background:#404040"></div>
<div class="a" style="left:146px;top:424px;width:1px;height:19px;background:#404040"></div>
<div class="a" style="left:180px;top:424px;width:1px;height:19px;background:#707070"></div>
<div class="a" style="left:79px;top:443px;width:1px;height:19px;background:#404040"></div>
<div class="a" style="left:113px;top:443px;width:1px;height:19px;background:#404040"></div>
<div class="a" style="left:146px;top:443px;width:1px;height:19px;background:#404040"></div>
<div class="a" style="left:180px;top:443px;width:1px;height:19px;background:#707070"></div>
<div class="a" style="left:79px;top:462px;width:1px;height:19px;background:#404040"></div>
<div class="a" style="left:113px;top:462px;width:1px;height:19px;background:#404040"></div>
<div class="a" style="left:146px;top:462px;width:1px;height:19px;background:#404040"></div>
<div class="a" style="left:79px;top:481px;width:1px;height:19px;background:#404040"></div>
<div class="a" style="left:113px;top:481px;width:1px;height:19px;background:#404040"></div>
<div class="a" style="left:146px;top:481px;width:1px;height:19px;background:#404040"></div>
<div class="a" style="left:79px;top:500px;width:1px;height:19px;background:#404040"></div>
<div class="a" style="left:113px;top:500px;width:1px;height:19px;background:#404040"></div>
<div class="a" style="left:146px;top:500px;width:1px;height:19px;background:#404040"></div>
<div class="a" style="left:79px;top:519px;width:1px;height:19px;background:#404040"></div>
<div class="a" style="left:113px;top:519px;width:1px;height:19px;background:#404040"></div>
<div class="a" style="left:146px;top:519px;width:1px;height:19px;background:#404040"></div>
<div class="a" style="left:79px;top:538px;width:1px;height:19px;background:#404040"></div>
<div class="a" style="left:113px;top:538px;width:1px;height:19px;background:#404040"></div>
<div class="a" style="left:146px;top:538px;width:1px;height:19px;background:#404040"></div>
<div class="a" style="left:79px;top:557px;width:1px;height:19px;background:#404040"></div>
<div class="a" style="left:113px;top:557px;width:1px;height:19px;background:#404040"></div>
<div class="a" style="left:79px;top:576px;width:1px;height:19px;background:#404040"></div>
<div class="a" style="left:113px;top:576px;width:1px;height:19px;background:#404040"></div>
<div class="a" style="left:79px;top:595px;width:1px;height:19px;background:#404040"></div>
<div class="a" style="left:113px;top:595px;width:1px;height:19px;background:#404040"></div>
<div class="a" style="left:79px;top:614px;width:1px;height:19px;background:#404040"></div>
<div class="a" style="left:113px;top:614px;width:1px;height:19px;background:#404040"></div>
<div class="a" style="left:79px;top:633px;width:1px;height:19px;background:#404040"></div>
<div class="a" style="left:113px;top:633px;width:1px;height:19px;background:#404040"></div>
<div class="a" style="left:79px;top:652px;width:1px;height:19px;background:#404040"></div>
<div class="a" style="left:113px;top:652px;width:1px;height:19px;background:#404040"></div>
<div class="a" style="left:146px;top:652px;width:1px;height:19px;background:#707070"></div>
<div class="a" style="left:79px;top:671px;width:1px;height:19px;background:#404040"></div>
<div class="a" style="left:113px;top:671px;width:1px;height:19px;background:#404040"></div>
<div class="a" style="left:79px;top:690px;width:1px;height:19px;background:#404040"></div>
<div class="a" style="left:113px;top:690px;width:1px;height:19px;background:#404040"></div>
<div class="a" style="left:79px;top:709px;width:1px;height:19px;background:#404040"></div>
<div class="a" style="left:113px;top:709px;width:1px;height:19px;background:#404040"></div>
<div class="a" style="left:79px;top:728px;width:1px;height:19px;background:#404040"></div>
<div class="a" style="left:113px;top:728px;width:1px;height:19px;background:#404040"></div>
<div class="a" style="left:79px;top:747px;width:1px;height:19px;background:#404040"></div>
<div class="a" style="left:113px;top:747px;width:1px;height:19px;background:#404040"></div>
<div class="a" style="left:146px;top:747px;width:1px;height:19px;background:#404040"></div>
<div class="a" style="left:79px;top:766px;width:1px;height:19px;background:#404040"></div>
<div class="a" style="left:113px;top:766px;width:1px;height:19px;background:#404040"></div>
<div class="a" style="left:79px;top:785px;width:1px;height:19px;background:#404040"></div>
<div class="a" style="left:113px;top:785px;width:1px;height:19px;background:#404040"></div>
<div class="a" style="left:79px;top:804px;width:1px;height:19px;background:#404040"></div>
<div class="a" style="left:113px;top:804px;width:1px;height:19px;background:#404040"></div>
<div class="a" style="left:79px;top:823px;width:1px;height:19px;background:#404040"></div>
<div class="a" style="left:113px;top:823px;width:1px;height:19px;background:#404040"></div>
<div class="a" style="left:79px;top:842px;width:1px;height:19px;background:#404040"></div>
<div class="a" style="left:113px;top:842px;width:1px;height:19px;background:#404040"></div>
<div class="a" style="left:146px;top:842px;width:1px;height:19px;background:#404040"></div>
<div class="a" style="left:79px;top:861px;width:1px;height:19px;background:#404040"></div>
<div class="a" style="left:113px;top:861px;width:1px;height:19px;background:#404040"></div>
<div class="a" style="left:79px;top:880px;width:1px;height:19px;background:#404040"></div>
<div class="a" style="left:113px;top:880px;width:1px;height:19px;background:#404040"></div>
<div class="a" style="left:146px;top:880px;width:1px;height:19px;background:#404040"></div>
<div class="a" style="left:79px;top:899px;width:1px;height:19px;background:#404040"></div>
<div class="a" style="left:113px;top:899px;width:1px;height:19px;background:#404040"></div>
<div class="a" style="left:146px;top:899px;width:1px;height:19px;background:#404040"></div>
<div class="a" style="left:79px;top:918px;width:1px;height:19px;background:#404040"></div>
<div class="a" style="left:113px;top:918px;width:1px;height:19px;background:#404040"></div>
<div class="a" style="left:146px;top:918px;width:1px;height:19px;background:#404040"></div>
<div class="a" style="left:80px;top:652px;width:1301px;height:19px;border-top:1px solid #282828;border-bottom:1px solid #282828"></div>
<div class="a" style="left:272px;top:653px;width:9px;height:17px;border:1px solid #888888"></div>
<div class="a" style="left:323px;top:653px;width:9px;height:17px;border:1px solid #888888"></div>
<div class="code" style="left:79px;top:44px"><span style="color:#d4d4d4">                chronic_illness_status: req.body.chronicIllnessStatus,  </span><span style="color:#6a9955">// Required field</span></div>
<div class="ln" style="left:0;top:44px;color:#6e7681">194</div>
<div class="code" style="left:79px;top:63px"><span style="color:#d4d4d4">                chronic_illness_type: req.body.chronicIllnessType || </span><span style="color:#569cd6">null</span><span style="color:#d4d4d4">,  </span><span style="color:#6a9955">// Default to null if not provided</span></div>
<div class="ln" style="left:0;top:63px;color:#6e7681">195</div>
<div class="code" style="left:79px;top:82px"><span style="color:#d4d4d4">                other_illness_type: req.body.otherIllnessType || </span><span style="color:#569cd6">null</span><span style="color:#d4d4d4">,  </span><span style="color:#6a9955">// Default to null if not provided</span></div>
<div class="ln" style="left:0;top:82px;color:#6e7681">196</div>
<div class="code" style="left:79px;top:101px"><span style="color:#d4d4d4">                treatment_for_illness_status: req.body.treatmentForIllnessStatus || </span><span style="color:#569cd6">null</span><span style="color:#d4d4d4">,  </span><span style="color:#6a9955">// Default to null if not provided</span></div>
<div class="ln" style="left:0;top:101px;color:#6e7681">197</div>
<div class="code" style="left:79px;top:120px"><span style="color:#d4d4d4">                reason_of_no_treatment: req.body.reasonOfNoTreatment || </span><span style="color:#569cd6">null</span><span style="color:#d4d4d4"> , </span><span style="color:#6a9955">// Default to null if not provided</span></div>
<div class="ln" style="left:0;top:120px;color:#6e7681">198</div>
<div class="code" style="left:79px;top:139px"><span style="color:#d4d4d4">                other_reason_for_no_treatment:req.body.otherReasonForNotreatment || </span><span style="color:#569cd6">null</span></div>
<div class="ln" style="left:0;top:139px;color:#6e7681">199</div>
<div class="code" style="left:79px;top:158px"><span style="color:#179fff">            }</span><span style="color:#d4d4d4">,</span></div>
<div class="ln" style="left:0;top:158px;color:#6e7681">200</div>
<div class="code" style="left:79px;top:177px"></div>
<div class="ln" style="left:0;top:177px;color:#6e7681">201</div>
<div class="code" style="left:79px;top:196px"><span style="color:#d4d4d4">            disability_details: </span><span style="color:#179fff">{</span></div>
<div class="ln" style="left:0;top:196px;color:#6e7681">202</div>
<div class="code" style="left:79px;top:215px"><span style="color:#d4d4d4">                disability_status: req.body.disabilityStatus,  </span><span style="color:#6a9955">// Required field</span></div>
<div class="ln" style="left:0;top:215px;color:#6e7681">203</div>
<div class="code" style="left:79px;top:234px"><span style="color:#d4d4d4">                disability_type: req.body.disabilityType || </span><span style="color:#569cd6">null</span><span style="color:#d4d4d4">,  </span><span style="color:#6a9955">// Default to null if not provided</span></div>
<div class="ln" style="left:0;top:234px;color:#6e7681">204</div>
<div class="code" style="left:79px;top:253px"><span style="color:#d4d4d4">                disability_proof_url:req.body.proofOfDisability</span></div>
<div class="ln" style="left:0;top:253px;color:#6e7681">205</div>
<div class="code" style="left:79px;top:272px"><span style="color:#179fff">            }</span><span style="color:#d4d4d4">,</span></div>
<div class="ln" style="left:0;top:272px;color:#6e7681">206</div>
<div class="code" style="left:79px;top:291px"><span style="color:#d4d4d4">            caretaker_details: </span><span style="color:#179fff">{</span></div>
<div class="ln" style="left:0;top:291px;color:#6e7681">207</div>
<div class="code" style="left:79px;top:310px"><span style="color:#d4d4d4">                caretaker_id: req.body.caretakerID,  </span><span style="color:#6a9955">// Required field</span></div>
<div class="ln" style="left:0;top:310px;color:#6e7681">208</div>
<div class="code" style="left:79px;top:329px"><span style="color:#d4d4d4">                caretaker_last_name: req.body.caretakerLastName || </span><span style="color:#569cd6">null</span><span style="color:#d4d4d4">,  </span><span style="color:#6a9955">// Default to null if not provided</span></div>
<div class="ln" style="left:0;top:329px;color:#6e7681">209</div>
<div class="code" style="left:79px;top:348px"><span style="color:#d4d4d4">                caretaker_first_name: req.body.caretakerFirstName || </span><span style="color:#569cd6">null</span><span style="color:#d4d4d4">,  </span><span style="color:#6a9955">// Default to null if not provided</span></div>
<div class="ln" style="left:0;top:348px;color:#6e7681">210</div>
<div class="code" style="left:79px;top:367px"><span style="color:#d4d4d4">                caretaker_other_name: req.body.caretakerOtherName || </span><span style="color:#569cd6">null</span><span style="color:#d4d4d4">,  </span><span style="color:#6a9955">// Default to null if not provided</span></div>
<div class="ln" style="left:0;top:367px;color:#6e7681">211</div>
<div class="code" style="left:79px;top:386px"><span style="color:#d4d4d4">                primary_telephone_number: req.body.primaryTelephoneNumber,  </span><span style="color:#6a9955">// Required field</span></div>
<div class="ln" style="left:0;top:386px;color:#6e7681">212</div>
<div class="code" style="left:79px;top:405px"><span style="color:#d4d4d4">                secondary_telephone_number: req.body.secondaryTelephoneNumber || </span><span style="color:#569cd6">null</span><span style="color:#d4d4d4">, </span><span style="color:#6a9955">// Default to null if not provided</span></div>
<div class="ln" style="left:0;top:405px;color:#6e7681">213</div>
<div class="code" style="left:79px;top:424px"><span style="color:#d4d4d4">                school_code: req.body.schoolCode || </span><span style="color:#569cd6">null</span><span style="color:#d4d4d4">,</span></div>
<div class="ln" style="left:0;top:424px;color:#6e7681">214</div>
<div class="code" style="left:79px;top:443px"><span style="color:#d4d4d4">                caretaker_occupation:req.body.caretakerOccupation</span></div>
<div class="ln" style="left:0;top:443px;color:#6e7681">215</div>
<div class="code" style="left:79px;top:462px"><span style="color:#179fff">            }</span><span style="color:#d4d4d4">,</span></div>
<div class="ln" style="left:0;top:462px;color:#6e7681">216</div>
<div class="code" style="left:79px;top:481px"><span style="color:#d4d4d4">            is_nin_exists:req.body.ninExists == </span><span style="color:#ce9178">'yes'</span><span style="color:#d4d4d4"> ? </span><span style="color:#569cd6">true</span><span style="color:#d4d4d4"> : </span><span style="color:#569cd6">false</span><span style="color:#d4d4d4">,</span></div>
<div class="ln" style="left:0;top:481px;color:#6e7681">217</div>
<div class="code" style="left:79px;top:500px"><span style="color:#d4d4d4">            is_respondentsid_verify:req.body.ninExists == </span><span style="color:#ce9178">'yes'</span><span style="color:#d4d4d4"> ? </span><span style="color:#569cd6">true</span><span style="color:#d4d4d4"> : </span><span style="color:#569cd6">false</span><span style="color:#d4d4d4">,</span></div>
<div class="ln" style="left:0;top:500px;color:#6e7681">218</div>
<div class="code" style="left:79px;top:519px"><span style="color:#d4d4d4">            beneficiary_nin: req.body.beneficiaryNIN,</span></div>
<div class="ln" style="left:0;top:519px;color:#6e7681">219</div>
<div class="code" style="left:79px;top:538px"><span style="color:#d4d4d4">            conflict: req.body.conflict</span></div>
<div class="ln" style="left:0;top:538px;color:#6e7681">220</div>
<div class="code" style="left:79px;top:557px"><span style="color:#da70d6">        }</span><span style="color:#ffd700">)</span><span style="color:#d4d4d4">;</span></div>
<div class="ln" style="left:0;top:557px;color:#6e7681">221</div>
<div class="code" style="left:79px;top:576px"></div>
<div class="ln" style="left:0;top:576px;color:#6e7681">222</div>
<div class="code" style="left:79px;top:595px"><span style="color:#c586c0">        try</span><span style="color:#ffd700">{</span></div>
<div class="ln" style="left:0;top:595px;color:#6e7681">223</div>
<div class="code" style="left:79px;top:614px"><span style="color:#c586c0">        await </span><span style="color:#9cdcfe">insertAdolescentData</span><span style="color:#d4d4d4">.</span><span style="color:#dcdcaa">save</span><span style="color:#da70d6">()</span><span style="color:#d4d4d4">;</span></div>
<div class="ln" style="left:0;top:614px;color:#6e7681">224</div>
<div class="code" style="left:79px;top:633px"><span style="color:#ffd700">        }</span><span style="color:#c586c0">catch</span><span style="color:#ffd700">(</span><span style="color:#d4d4d4">error</span><span style="color:#ffd700">){</span></div>
<div class="ln" style="left:0;top:633px;color:#6e7681">225</div>
<div class="code" style="left:79px;top:652px"><span style="color:#d4d4d4">            </span><span style="color:#9cdcfe">console</span><span style="color:#d4d4d4">.</span><span style="color:#dcdcaa">log</span><span style="color:#da70d6">(</span><span style="color:#9cdcfe">error</span><span style="color:#da70d6">)</span></div>
<div class="ln" style="left:0;top:652px;color:#cccccc">226</div>
<div class="code" style="left:79px;top:671px"><span style="color:#ffd700">        }</span></div>
<div class="ln" style="left:0;top:671px;color:#6e7681">227</div>
<div class="code" style="left:79px;top:690px"></div>
<div class="ln" style="left:0;top:690px;color:#6e7681">228</div>
<div class="code" style="left:79px;top:709px"><span style="color:#569cd6">        const </span><span style="color:#4fc1ff">token </span><span style="color:#d4d4d4">= req.headers</span><span style="color:#ffd700">[</span><span style="color:#ce9178">"x-access-token"</span><span style="color:#ffd700">]</span><span style="color:#d4d4d4"> || req.headers</span><span style="color:#ffd700">[</span><span style="color:#ce9178">"authorization"</span><span style="color:#ffd700">]</span><span style="color:#d4d4d4"> || req.cookies.auth;</span></div>
<div class="ln" style="left:0;top:709px;color:#6e7681">229</div>
<div class="code" style="left:79px;top:728px"><span style="color:#c586c0">        if </span><span style="color:#ffd700">(</span><span style="color:#d4d4d4">!</span><span style="color:#9cdcfe">token</span><span style="color:#ffd700">)</span><span style="color:#d4d4d4"> </span><span style="color:#ffd700">{</span></div>
<div class="ln" style="left:0;top:728px;color:#6e7681">230</div>
<div class="code" style="left:79px;top:747px"><span style="color:#c586c0">          return </span><span style="color:#d4d4d4">res.status</span><span style="color:#da70d6">(</span><span style="color:#b5cea8">401</span><span style="color:#da70d6">)</span><span style="color:#d4d4d4">.send</span><span style="color:#da70d6">(</span><span style="color:#179fff">{</span><span style="color:#d4d4d4">status:</span><span style="color:#b5cea8">0</span><span style="color:#d4d4d4">,message:</span><span style="color:#ce9178">"Access denied. No token provided."</span><span style="color:#179fff">}</span><span style="color:#da70d6">)</span></div>
<div class="ln" style="left:0;top:747px;color:#6e7681">231</div>
<div class="code" style="left:79px;top:766px"><span style="color:#ffd700">        }</span><span style="color:#d4d4d4">;</span></div>
<div class="ln" style="left:0;top:766px;color:#6e7681">232</div>
<div class="code" style="left:79px;top:785px"></div>
<div class="ln" style="left:0;top:785px;color:#6e7681">233</div>
<div class="code" style="left:79px;top:804px"><span style="color:#569cd6">        const </span><span style="color:#9cdcfe">inDenyList </span><span style="color:#d4d4d4">= </span><span style="color:#c586c0">await </span><span style="color:#9cdcfe">redisClient</span><span style="color:#d4d4d4">.</span><span style="color:#dcdcaa">get</span><span style="color:#ffd700">(</span><span style="color:#ce9178">`blacklist_</span><span style="color:#da70d6">${</span><span style="color:#9cdcfe">token</span><span style="color:#da70d6">}</span><span style="color:#ce9178">`</span><span style="color:#ffd700">)</span><span style="color:#d4d4d4">;</span></div>
<div class="ln" style="left:0;top:804px;color:#6e7681">234</div>
<div class="code" style="left:79px;top:823px"><span style="color:#c586c0">        if </span><span style="color:#ffd700">(</span><span style="color:#9cdcfe">inDenyList</span><span style="color:#ffd700">)</span><span style="color:#d4d4d4"> </span><span style="color:#ffd700">{</span></div>
<div class="ln" style="left:0;top:823px;color:#6e7681">235</div>
<div class="code" style="left:79px;top:842px"><span style="color:#c586c0">          return </span><span style="color:#d4d4d4">res.status</span><span style="color:#da70d6">(</span><span style="color:#b5cea8">401</span><span style="color:#da70d6">)</span><span style="color:#d4d4d4">.send</span><span style="color:#da70d6">(</span><span style="color:#179fff">{</span><span style="color:#d4d4d4">status:</span><span style="color:#b5cea8">0</span><span style="color:#d4d4d4">,message:</span><span style="color:#ce9178">"Access denied. Invalid token"</span><span style="color:#179fff">}</span><span style="color:#da70d6">)</span><span style="color:#d4d4d4">;</span></div>
<div class="ln" style="left:0;top:842px;color:#6e7681">236</div>
<div class="code" style="left:79px;top:861px"><span style="color:#ffd700">        }</span></div>
<div class="ln" style="left:0;top:861px;color:#6e7681">237</div>
<div class="code" style="left:79px;top:880px"></div>
<div class="ln" style="left:0;top:880px;color:#6e7681">238</div>
<div class="code" style="left:79px;top:899px"><span style="color:#569cd6">          const </span><span style="color:#4b87b8">decoded </span><span style="color:#d4d4d4">= jwt.</span><span style="color:#dcdcaa">verify</span><span style="color:#ffd700">(</span><span style="color:#9cdcfe">token</span><span style="color:#d4d4d4">, </span><span style="color:#9cdcfe">env</span><span style="color:#d4d4d4">.privateKey</span><span style="color:#ffd700">)</span><span style="color:#d4d4d4">;</span></div>
<div class="ln" style="left:0;top:899px;color:#6e7681">239</div>
<div class="code" style="left:79px;top:918px"></div>
<div class="ln" style="left:0;top:918px;color:#6e7681">240</div>
<div class="a" style="left:58px;top:576px;width:3px;height:38px;background:#2ea043"></div>
<div class="a" style="left:58px;top:633px;width:3px;height:57px;background:#2ea043"></div>
</div>
<div class="a" style="left:344px;top:92px;width:1381px;height:57px;background:#1f1f1f;"></div>
<div class="a" style="left:346px;top:148px;width:1379px;height:5px;background:linear-gradient(to bottom, rgba(0,0,0,0.25) 0px, #000 1px, #000 2.5px, rgba(0,0,0,0.35) 3.5px, rgba(0,0,0,0) 5px)"></div>
<div class="code" style="top:92px"><span style="color:#9cdcfe">router</span><span style="color:#d4d4d4">.</span><span style="color:#dcdcaa">post</span><span style="color:#ffd700">(</span><span style="color:#ce9178">'/add'</span><span style="color:#d4d4d4">, </span><span style="color:#569cd6">async</span><span style="color:#da70d6">(</span><span style="color:#d4d4d4">req, res</span><span style="color:#da70d6">)</span><span style="color:#569cd6">=&gt;</span><span style="color:#da70d6">{</span></div>
<div class="ln" style="top:92px">28</div>
<div class="code" style="top:111px"><span style="color:#569cd6">        const </span><span style="color:#9cdcfe">insertAdolescentData </span><span style="color:#d4d4d4">= </span><span style="color:#569cd6">new </span><span style="color:#4ec9b0">Adolescent</span><span style="color:#ffd700">(</span><span style="color:#da70d6">{</span></div>
<div class="ln" style="top:111px">155</div>
<div class="code" style="top:130px"><span style="color:#d4d4d4">            chronic_illness_details: </span><span style="color:#179fff">{</span></div>
<div class="ln" style="top:130px">193</div>
<div class="a" style="left:1292px;top:92px;width:419px;height:33px;background:#202020;border:1px solid #2b2b2b;border-top:none;border-radius:0 0 4px 4px;box-shadow:0 3px 8px 1px rgba(0,0,0,0.36)"></div>
<div class="a" style="left:1292px;top:92px;width:3px;height:32px;background:#3c3c3c;"></div>
<svg class="a" style="left:1301px;top:102px;color:#cccccc;" width="8" height="12" viewBox="0 0 8 12" fill="none" stroke="currentColor"><path d="M1.5 1.2l5 4.8-5 4.8" stroke-width="1.1"/></svg>
<div class="a" style="left:1314px;top:95px;width:196px;height:25px;background:#313131;border:1px solid #3c3c3c;border-radius:4px"></div>
<div class="t" style="left:1320.5px;top:101.00px;font-size:13px;height:13px;color:#cccccc;font-weight:normal;font-style:normal;font-family:'Liberation Sans', sans-serif;letter-spacing:0.2px">/add</div>
<div class="t" style="left:1448px;top:102.00px;font-size:12px;height:12px;color:#b0b0b0;font-weight:normal;font-style:normal;font-family:'Liberation Sans', sans-serif;letter-spacing:-0.5px">Aa</div>
<div class="t" style="left:1470px;top:101.00px;font-size:12px;height:12px;color:#b0b0b0;font-weight:normal;font-style:normal;font-family:'Liberation Sans', sans-serif;letter-spacing:-0.3px">ab</div>
<svg class="a" style="left:1467px;top:104px;color:#a0a0a0;" width="18" height="12" viewBox="0 0 18 12" fill="none" stroke="currentColor"><path d="M1 8v2.5h16V8" stroke-width="1"/></svg>
<div class="a" style="left:1491.5px;top:110.5px;width:3.5px;height:3.5px;background:#c0c0c0;"></div>
<svg class="a" style="left:1495px;top:101px;color:#c0c0c0;" width="10" height="10" viewBox="0 0 10 10" fill="none" stroke="currentColor"><path d="M5 0.8v8.4M1.4 2.9l7.2 4.2M8.6 2.9L1.4 7.1" stroke-width="1.3"/></svg>
<div class="t" style="left:1515.5px;top:101.70px;font-size:13px;height:13px;color:#cccccc;font-weight:normal;font-style:normal;font-family:'Liberation Sans', sans-serif;">1 of 3</div>
<svg class="a" style="left:1615px;top:101px;color:#cccccc;" width="13" height="14" viewBox="0 0 13 14" fill="none" stroke="currentColor"><path d="M6.5 13V1.5M1.2 6.8L6.5 1.5l5.3 5.3" stroke-width="1.1"/></svg>
<svg class="a" style="left:1640px;top:101px;color:#cccccc;" width="13" height="14" viewBox="0 0 13 14" fill="none" stroke="currentColor"><path d="M6.5 1v11.5M1.2 7.2L6.5 12.5l5.3-5.3" stroke-width="1.1"/></svg>
<svg class="a" style="left:1663px;top:102px;color:#cccccc;" width="16" height="12" viewBox="0 0 16 12" fill="none" stroke="currentColor"><path d="M1 1.5h12M1 6.5h14M1 11h8" stroke-width="1.1"/></svg>
<svg class="a" style="left:1690px;top:103px;color:#cccccc;" width="11" height="11" viewBox="0 0 11 11" fill="none" stroke="currentColor"><path d="M1 1l9 9M10 1L1 10" stroke-width="1.1"/></svg>
<svg class="a" style="left:0;top:0" width="1859" height="1031" viewBox="0 0 1859 1031" shape-rendering="crispEdges"><defs><pattern id="mmp" x="0" y="0" width="4" height="2" patternUnits="userSpaceOnUse"><rect x="0" y="0" width="4" height="2" fill="#fff"/><rect x="2" y="0" width="1" height="1" fill="#aaa"/><rect x="0" y="1" width="1" height="1" fill="#bbb"/><rect x="3" y="1" width="1" height="1" fill="#c4c4c4"/></pattern><mask id="mmm"><rect x="1733" y="92" width="112" height="939" fill="url(#mmp)"/></mask></defs><g mask="url(#mmm)"><path d="M1741 92h2v1h-2zM1775 96h3v1h-3zM1779 96h1v1h-1zM1745 104h2v1h-2zM1749 106h4v1h-4zM1754 106h1v1h-1zM1741 118h2v1h-2zM1741 126h2v1h-2zM1741 352h4v1h-4zM1746 352h1v1h-1zM1739 354h2v1h-2zM1742 354h3v1h-3zM1737 370h3v1h-3zM1741 378h2v1h-2zM1745 390h2v1h-2zM1745 404h3v1h-3zM1749 404h1v1h-1zM1741 416h2v1h-2zM1745 418h3v1h-3zM1746 422h6v1h-6zM1749 424h6v1h-6zM1745 434h2v1h-2zM1763 462h2v1h-2zM1766 462h2v1h-2zM1741 556h2v1h-2zM1745 558h2v1h-2zM1749 560h6v1h-6zM1734 568h2v1h-2zM1773 570h5v1h-5zM1739 582h2v1h-2zM1745 584h3v1h-3zM1749 584h2v1h-2zM1743 730h5v1h-5zM1743 732h3v1h-3zM1747 732h2v1h-2zM1740 734h5v1h-5zM1741 750h3v1h-3zM1745 754h2v1h-2zM1745 756h3v1h-3zM1748 756h3v1h-3zM1755 762h3v1h-3zM1759 762h1v1h-1zM1755 764h4v1h-4zM1759 764h1v1h-1zM1742 822h6v1h-6zM1756 838h3v1h-3zM1760 838h1v1h-1zM1737 842h3v1h-3zM1749 846h2v1h-2zM1745 882h3v1h-3zM1772 882h2v1h-2zM1749 900h2v1h-2zM1753 916h4v1h-4zM1757 916h3v1h-3zM1745 922h2v1h-2zM1745 928h2v1h-2zM1749 932h3v1h-3zM1753 932h3v1h-3zM1747 934h3v1h-3zM1750 934h1v1h-1zM1749 938h3v1h-3zM1753 938h3v1h-3zM1739 946h5v1h-5zM1755 964h5v1h-5zM1737 970h2v1h-2zM1743 982h6v1h-6zM1745 984h4v1h-4zM1749 1006h3v1h-3zM1753 1006h2v1h-2zM1745 1008h3v1h-3zM1741 274h3v1h-3zM1741 276h5v1h-5zM1742 278h5v1h-5zM1741 288h2v1h-2zM1743 290h6v1h-6zM1760 296h5v1h-5zM1741 298h2v1h-2zM1743 300h6v1h-6z" fill="#c586c0" fill-opacity="0.56"/><path d="M1741 93h2v1h-2zM1775 97h3v1h-3zM1779 97h1v1h-1zM1745 105h2v1h-2zM1749 107h4v1h-4zM1754 107h1v1h-1zM1741 119h2v1h-2zM1741 127h2v1h-2zM1741 353h4v1h-4zM1746 353h1v1h-1zM1739 355h2v1h-2zM1742 355h3v1h-3zM1737 371h3v1h-3zM1741 379h2v1h-2zM1745 391h2v1h-2zM1745 405h3v1h-3zM1749 405h1v1h-1zM1741 417h2v1h-2zM1745 419h3v1h-3zM1746 423h6v1h-6zM1749 425h6v1h-6zM1745 435h2v1h-2zM1763 463h2v1h-2zM1766 463h2v1h-2zM1741 557h2v1h-2zM1745 559h2v1h-2zM1749 561h6v1h-6zM1734 569h2v1h-2zM1773 571h5v1h-5zM1739 583h2v1h-2zM1745 585h3v1h-3zM1749 585h2v1h-2zM1743 731h5v1h-5zM1743 733h3v1h-3zM1747 733h2v1h-2zM1740 735h5v1h-5zM1741 751h3v1h-3zM1745 755h2v1h-2zM1745 757h3v1h-3zM1748 757h3v1h-3zM1755 763h3v1h-3zM1759 763h1v1h-1zM1755 765h4v1h-4zM1759 765h1v1h-1zM1742 823h6v1h-6zM1756 839h3v1h-3zM1760 839h1v1h-1zM1737 843h3v1h-3zM1749 847h2v1h-2zM1745 883h3v1h-3zM1772 883h2v1h-2zM1749 901h2v1h-2zM1753 917h4v1h-4zM1757 917h3v1h-3zM1745 923h2v1h-2zM1745 929h2v1h-2zM1749 933h3v1h-3zM1753 933h3v1h-3zM1747 935h3v1h-3zM1750 935h1v1h-1zM1749 939h3v1h-3zM1753 939h3v1h-3zM1739 947h5v1h-5zM1755 965h5v1h-5zM1737 971h2v1h-2zM1743 983h6v1h-6zM1745 985h4v1h-4zM1749 1007h3v1h-3zM1753 1007h2v1h-2zM1745 1009h3v1h-3zM1741 275h3v1h-3zM1741 277h5v1h-5zM1742 279h5v1h-5zM1741 289h2v1h-2zM1743 291h6v1h-6zM1760 297h5v1h-5zM1741 299h2v1h-2zM1743 301h6v1h-6z" fill="#c586c0" fill-opacity="0.3"/><path d="M1743 92h8v1h-8zM1752 92h3v1h-3zM1755 92h3v1h-3zM1759 92h2v1h-2zM1761 92h5v1h-5zM1767 92h8v1h-8zM1776 92h5v1h-5zM1782 92h5v1h-5zM1792 92h2v1h-2zM1773 96h1v1h-1zM1800 96h2v1h-2zM1796 98h2v1h-2zM1745 100h3v1h-3zM1774 104h2v1h-2zM1756 106h9v1h-9zM1766 106h9v1h-9zM1780 106h6v1h-6zM1787 106h1v1h-1zM1789 106h4v1h-4zM1794 106h4v1h-4zM1799 106h5v1h-5zM1805 106h4v1h-4zM1745 118h4v1h-4zM1750 118h7v1h-7zM1758 118h3v1h-3zM1761 118h8v1h-8zM1770 118h5v1h-5zM1745 120h9v1h-9zM1755 120h6v1h-6zM1762 120h3v1h-3zM1766 120h6v1h-6zM1773 120h4v1h-4zM1778 120h5v1h-5zM1783 120h7v1h-7zM1791 120h2v1h-2zM1794 120h6v1h-6zM1800 120h3v1h-3zM1804 120h1v1h-1zM1744 126h5v1h-5zM1749 126h8v1h-8zM1758 126h5v1h-5zM1764 126h9v1h-9zM1745 128h7v1h-7zM1752 128h7v1h-7zM1760 128h3v1h-3zM1764 128h5v1h-5zM1770 128h9v1h-9zM1780 128h2v1h-2zM1783 128h7v1h-7zM1791 128h3v1h-3zM1794 128h3v1h-3zM1797 128h5v1h-5zM1803 128h4v1h-4zM1745 140h8v1h-8zM1754 140h3v1h-3zM1758 140h4v1h-4zM1762 140h2v1h-2zM1765 140h9v1h-9zM1774 140h4v1h-4zM1779 140h5v1h-5zM1745 142h7v1h-7zM1753 142h4v1h-4zM1758 142h3v1h-3zM1762 142h4v1h-4zM1767 142h5v1h-5zM1772 142h2v1h-2zM1745 144h5v1h-5zM1751 144h5v1h-5zM1757 144h6v1h-6zM1749 148h3v1h-3zM1753 148h7v1h-7zM1761 148h9v1h-9zM1771 148h3v1h-3zM1774 148h2v1h-2zM1749 150h3v1h-3zM1753 150h2v1h-2zM1756 150h3v1h-3zM1760 150h5v1h-5zM1766 150h9v1h-9zM1776 150h4v1h-4zM1749 152h5v1h-5zM1755 152h6v1h-6zM1761 152h5v1h-5zM1766 152h4v1h-4zM1771 152h8v1h-8zM1749 156h5v1h-5zM1755 156h3v1h-3zM1759 156h2v1h-2zM1762 156h1v1h-1zM1749 158h2v1h-2zM1752 158h6v1h-6zM1759 158h3v1h-3zM1763 158h5v1h-5zM1768 158h3v1h-3zM1772 158h6v1h-6zM1784 158h2v1h-2zM1749 160h3v1h-3zM1753 160h3v1h-3zM1757 160h7v1h-7zM1764 160h8v1h-8zM1772 160h6v1h-6zM1779 160h2v1h-2zM1782 160h5v1h-5zM1787 160h4v1h-4zM1792 160h4v1h-4zM1797 160h5v1h-5zM1749 164h8v1h-8zM1757 164h6v1h-6zM1764 164h6v1h-6zM1771 164h4v1h-4zM1776 164h9v1h-9zM1786 164h7v1h-7zM1793 164h6v1h-6zM1805 164h2v1h-2zM1749 168h3v1h-3zM1752 168h5v1h-5zM1758 168h5v1h-5zM1764 168h9v1h-9zM1774 168h8v1h-8zM1783 168h6v1h-6zM1790 168h5v1h-5zM1796 168h3v1h-3zM1804 168h2v1h-2zM1749 170h3v1h-3zM1752 170h2v1h-2zM1755 170h3v1h-3zM1758 170h9v1h-9zM1767 170h8v1h-8zM1776 170h5v1h-5zM1782 170h3v1h-3zM1786 170h6v1h-6zM1792 170h4v1h-4zM1797 170h6v1h-6zM1803 170h2v1h-2zM1749 172h9v1h-9zM1759 172h4v1h-4zM1764 172h9v1h-9zM1774 172h8v1h-8zM1783 172h4v1h-4zM1788 172h1v1h-1zM1795 172h2v1h-2zM1749 174h6v1h-6zM1756 174h4v1h-4zM1761 174h6v1h-6zM1768 174h7v1h-7zM1776 174h6v1h-6zM1749 178h4v1h-4zM1754 178h8v1h-8zM1763 178h6v1h-6zM1770 178h6v1h-6zM1777 178h5v1h-5zM1783 178h8v1h-8zM1792 178h2v1h-2zM1749 180h9v1h-9zM1759 180h9v1h-9zM1768 180h9v1h-9zM1778 180h5v1h-5zM1784 180h4v1h-4zM1789 180h3v1h-3zM1793 180h7v1h-7zM1801 180h3v1h-3zM1749 182h8v1h-8zM1758 182h5v1h-5zM1764 182h7v1h-7zM1772 182h9v1h-9zM1782 182h7v1h-7zM1790 182h5v1h-5zM1796 182h5v1h-5zM1802 182h9v1h-9zM1812 182h6v1h-6zM1818 182h1v1h-1zM1749 184h8v1h-8zM1758 184h9v1h-9zM1767 184h9v1h-9zM1777 184h8v1h-8zM1785 184h4v1h-4zM1746 188h1v1h-1zM1745 190h3v1h-3zM1748 190h9v1h-9zM1758 190h2v1h-2zM1749 192h6v1h-6zM1755 192h6v1h-6zM1762 192h8v1h-8zM1749 196h5v1h-5zM1755 196h5v1h-5zM1761 196h2v1h-2zM1763 196h6v1h-6zM1770 196h5v1h-5zM1776 196h8v1h-8zM1749 198h8v1h-8zM1757 198h5v1h-5zM1763 198h7v1h-7zM1771 198h7v1h-7zM1779 198h5v1h-5zM1747 204h1v1h-1zM1745 206h7v1h-7zM1753 206h3v1h-3zM1756 206h7v1h-7zM1749 208h8v1h-8zM1757 208h7v1h-7zM1765 208h3v1h-3zM1769 208h6v1h-6zM1776 208h8v1h-8zM1784 208h3v1h-3zM1788 208h5v1h-5zM1749 210h8v1h-8zM1758 210h2v1h-2zM1761 210h2v1h-2zM1764 210h3v1h-3zM1767 210h7v1h-7zM1775 210h7v1h-7zM1782 210h2v1h-2zM1785 210h7v1h-7zM1792 210h6v1h-6zM1799 210h3v1h-3zM1803 210h5v1h-5zM1809 210h8v1h-8zM1746 212h1v1h-1zM1747 352h3v1h-3zM1751 352h9v1h-9zM1761 352h4v1h-4zM1766 352h5v1h-5zM1772 352h1v1h-1zM1804 352h3v1h-3zM1746 354h6v1h-6zM1753 354h2v1h-2zM1759 356h7v1h-7zM1767 356h7v1h-7zM1775 356h4v1h-4zM1741 358h4v1h-4zM1746 358h2v1h-2zM1749 358h6v1h-6zM1759 358h2v1h-2zM1762 358h6v1h-6zM1769 358h8v1h-8zM1778 358h7v1h-7zM1785 358h4v1h-4zM1808 358h3v1h-3zM1735 364h2v1h-2zM1757 366h9v1h-9zM1767 366h6v1h-6zM1752 374h8v1h-8zM1760 374h4v1h-4zM1765 374h3v1h-3zM1769 374h2v1h-2zM1771 374h3v1h-3zM1755 378h2v1h-2zM1758 380h6v1h-6zM1765 380h5v1h-5zM1771 380h2v1h-2zM1750 390h3v1h-3zM1753 390h8v1h-8zM1762 390h5v1h-5zM1768 390h2v1h-2zM1771 390h3v1h-3zM1774 390h1v1h-1zM1778 390h1v1h-1zM1749 392h7v1h-7zM1757 392h2v1h-2zM1760 392h6v1h-6zM1767 392h7v1h-7zM1774 392h9v1h-9zM1783 392h2v1h-2zM1786 392h2v1h-2zM1789 392h3v1h-3zM1793 392h1v1h-1zM1757 400h2v1h-2zM1768 400h3v1h-3zM1771 400h3v1h-3zM1775 400h3v1h-3zM1779 400h7v1h-7zM1787 400h1v1h-1zM1745 410h4v1h-4zM1750 410h5v1h-5zM1756 410h7v1h-7zM1764 410h7v1h-7zM1771 410h6v1h-6zM1777 410h3v1h-3zM1781 410h3v1h-3zM1785 410h4v1h-4zM1789 410h2v1h-2zM1745 416h8v1h-8zM1754 416h2v1h-2zM1757 416h8v1h-8zM1766 416h6v1h-6zM1773 416h4v1h-4zM1778 416h3v1h-3zM1791 416h2v1h-2zM1749 420h3v1h-3zM1752 420h5v1h-5zM1758 420h4v1h-4zM1763 420h8v1h-8zM1772 420h2v1h-2zM1775 420h8v1h-8zM1784 420h4v1h-4zM1788 420h1v1h-1zM1802 420h3v1h-3zM1805 420h9v1h-9zM1815 420h5v1h-5zM1756 424h2v1h-2zM1759 424h8v1h-8zM1768 424h7v1h-7zM1780 424h5v1h-5zM1785 424h5v1h-5zM1793 424h3v1h-3zM1796 424h5v1h-5zM1802 424h5v1h-5zM1807 424h2v1h-2zM1755 432h3v1h-3zM1759 432h7v1h-7zM1767 432h6v1h-6zM1748 434h7v1h-7zM1756 434h2v1h-2zM1759 434h5v1h-5zM1764 434h3v1h-3zM1772 434h1v1h-1zM1749 436h4v1h-4zM1754 436h8v1h-8zM1763 436h4v1h-4zM1771 436h1v1h-1zM1744 440h2v1h-2zM1761 462h2v1h-2zM1749 466h8v1h-8zM1783 468h2v1h-2zM1757 470h2v1h-2zM1760 470h5v1h-5zM1766 470h4v1h-4zM1770 470h7v1h-7zM1818 470h6v1h-6zM1755 472h1v1h-1zM1784 474h2v1h-2zM1757 476h2v1h-2zM1759 476h6v1h-6zM1802 476h4v1h-4zM1806 476h1v1h-1zM1755 478h1v1h-1zM1783 480h2v1h-2zM1757 482h8v1h-8zM1802 482h5v1h-5zM1755 484h1v1h-1zM1783 486h2v1h-2zM1757 488h6v1h-6zM1764 488h1v1h-1zM1804 488h3v1h-3zM1808 488h1v1h-1zM1755 490h1v1h-1zM1753 492h5v1h-5zM1758 492h5v1h-5zM1764 492h6v1h-6zM1770 492h2v1h-2zM1772 492h2v1h-2zM1774 492h2v1h-2zM1777 492h2v1h-2zM1746 496h1v1h-1zM1749 500h3v1h-3zM1753 500h6v1h-6zM1753 502h5v1h-5zM1774 502h1v1h-1zM1753 504h7v1h-7zM1760 504h4v1h-4zM1783 504h1v1h-1zM1753 506h7v1h-7zM1761 506h2v1h-2zM1772 506h1v1h-1zM1753 508h4v1h-4zM1747 512h1v1h-1zM1749 516h6v1h-6zM1756 516h1v1h-1zM1753 518h5v1h-5zM1772 518h1v1h-1zM1753 520h2v1h-2zM1756 520h7v1h-7zM1764 520h8v1h-8zM1744 526h1v1h-1zM1757 530h3v1h-3zM1783 530h6v1h-6zM1809 530h2v1h-2zM1761 556h4v1h-4zM1771 556h2v1h-2zM1774 556h1v1h-1zM1748 558h5v1h-5zM1754 558h5v1h-5zM1760 558h2v1h-2zM1763 558h3v1h-3zM1767 558h1v1h-1zM1783 558h2v1h-2zM1786 558h5v1h-5zM1792 558h6v1h-6zM1798 558h4v1h-4zM1803 558h8v1h-8zM1812 558h4v1h-4zM1817 558h3v1h-3zM1821 558h3v1h-3zM1825 558h9v1h-9zM1834 558h8v1h-8zM1842 558h1v1h-1zM1756 560h5v1h-5zM1762 560h4v1h-4zM1767 560h3v1h-3zM1770 560h3v1h-3zM1774 560h2v1h-2zM1779 560h2v1h-2zM1782 560h5v1h-5zM1790 560h4v1h-4zM1795 560h9v1h-9zM1805 560h1v1h-1zM1739 568h7v1h-7zM1747 568h8v1h-8zM1756 568h3v1h-3zM1759 568h8v1h-8zM1767 568h7v1h-7zM1775 568h4v1h-4zM1770 570h2v1h-2zM1791 572h1v1h-1zM1745 574h3v1h-3zM1749 574h7v1h-7zM1756 574h6v1h-6zM1763 574h6v1h-6zM1770 574h5v1h-5zM1744 576h1v1h-1zM1764 582h2v1h-2zM1751 584h2v1h-2zM1754 584h4v1h-4zM1759 584h6v1h-6zM1766 584h2v1h-2zM1769 584h2v1h-2zM1774 584h6v1h-6zM1780 584h2v1h-2zM1783 584h6v1h-6zM1789 584h2v1h-2zM1791 584h3v1h-3zM1795 584h4v1h-4zM1765 592h2v1h-2zM1745 596h4v1h-4zM1749 596h4v1h-4zM1754 596h5v1h-5zM1760 596h3v1h-3zM1749 598h4v1h-4zM1754 598h9v1h-9zM1763 598h8v1h-8zM1771 598h3v1h-3zM1775 598h2v1h-2zM1778 598h2v1h-2zM1749 602h6v1h-6zM1756 602h3v1h-3zM1760 602h9v1h-9zM1769 602h9v1h-9zM1779 602h1v1h-1zM1749 604h6v1h-6zM1756 604h9v1h-9zM1765 604h9v1h-9zM1775 604h5v1h-5zM1749 608h6v1h-6zM1756 608h2v1h-2zM1759 608h8v1h-8zM1767 608h4v1h-4zM1749 610h9v1h-9zM1759 610h6v1h-6zM1766 610h3v1h-3zM1770 610h5v1h-5zM1776 610h9v1h-9zM1786 610h3v1h-3zM1795 610h2v1h-2zM1749 612h4v1h-4zM1754 612h2v1h-2zM1757 612h7v1h-7zM1765 612h9v1h-9zM1775 612h7v1h-7zM1783 612h8v1h-8zM1791 612h4v1h-4zM1795 612h3v1h-3zM1798 612h2v1h-2zM1801 612h6v1h-6zM1749 616h5v1h-5zM1755 616h5v1h-5zM1761 616h3v1h-3zM1765 616h6v1h-6zM1772 616h5v1h-5zM1778 616h6v1h-6zM1785 616h5v1h-5zM1791 616h5v1h-5zM1797 616h2v1h-2zM1803 616h2v1h-2zM1749 620h8v1h-8zM1757 620h6v1h-6zM1764 620h6v1h-6zM1770 620h2v1h-2zM1773 620h4v1h-4zM1778 620h9v1h-9zM1787 620h2v1h-2zM1790 620h8v1h-8zM1798 620h1v1h-1zM1804 620h2v1h-2zM1749 622h7v1h-7zM1757 622h9v1h-9zM1767 622h2v1h-2zM1770 622h2v1h-2zM1773 622h4v1h-4zM1778 622h6v1h-6zM1785 622h6v1h-6zM1792 622h4v1h-4zM1796 622h2v1h-2zM1798 622h3v1h-3zM1801 622h8v1h-8zM1810 622h2v1h-2zM1749 624h6v1h-6zM1756 624h5v1h-5zM1761 624h4v1h-4zM1766 624h6v1h-6zM1772 624h7v1h-7zM1780 624h5v1h-5zM1786 624h8v1h-8zM1799 624h2v1h-2zM1749 626h6v1h-6zM1755 626h3v1h-3zM1759 626h6v1h-6zM1766 626h7v1h-7zM1774 626h5v1h-5zM1780 626h2v1h-2zM1749 630h6v1h-6zM1756 630h2v1h-2zM1759 630h8v1h-8zM1768 630h6v1h-6zM1774 630h3v1h-3zM1778 630h2v1h-2zM1780 630h2v1h-2zM1783 630h7v1h-7zM1791 630h2v1h-2zM1794 630h2v1h-2zM1797 630h2v1h-2zM1749 632h7v1h-7zM1756 632h2v1h-2zM1759 632h8v1h-8zM1768 632h7v1h-7zM1776 632h8v1h-8zM1785 632h3v1h-3zM1789 632h7v1h-7zM1797 632h8v1h-8zM1806 632h9v1h-9zM1815 632h2v1h-2zM1817 632h7v1h-7zM1749 634h7v1h-7zM1757 634h2v1h-2zM1760 634h4v1h-4zM1765 634h3v1h-3zM1769 634h7v1h-7zM1777 634h4v1h-4zM1782 634h7v1h-7zM1790 634h3v1h-3zM1749 640h2v1h-2zM1752 640h3v1h-3zM1756 640h7v1h-7zM1764 640h5v1h-5zM1770 640h3v1h-3zM1773 640h4v1h-4zM1778 640h5v1h-5zM1784 640h4v1h-4zM1789 640h7v1h-7zM1797 640h4v1h-4zM1801 640h4v1h-4zM1806 640h5v1h-5zM1747 642h1v1h-1zM1745 644h7v1h-7zM1752 644h8v1h-8zM1749 646h2v1h-2zM1752 646h8v1h-8zM1761 646h7v1h-7zM1769 646h8v1h-8zM1778 646h1v1h-1zM1749 650h9v1h-9zM1759 650h4v1h-4zM1764 650h6v1h-6zM1770 650h4v1h-4zM1774 650h6v1h-6zM1781 650h2v1h-2zM1784 650h5v1h-5zM1749 652h9v1h-9zM1759 652h2v1h-2zM1761 652h5v1h-5zM1766 652h7v1h-7zM1774 652h9v1h-9zM1784 652h4v1h-4zM1788 652h1v1h-1zM1747 658h1v1h-1zM1745 660h8v1h-8zM1754 660h5v1h-5zM1760 660h3v1h-3zM1753 662h9v1h-9zM1762 662h3v1h-3zM1766 662h5v1h-5zM1771 662h5v1h-5zM1777 662h6v1h-6zM1784 662h2v1h-2zM1787 662h3v1h-3zM1790 662h5v1h-5zM1796 662h7v1h-7zM1753 664h8v1h-8zM1762 664h8v1h-8zM1770 664h2v1h-2zM1773 664h6v1h-6zM1780 664h8v1h-8zM1788 664h5v1h-5zM1794 664h3v1h-3zM1797 664h2v1h-2zM1799 664h2v1h-2zM1802 664h7v1h-7zM1810 664h9v1h-9zM1820 664h7v1h-7zM1828 664h2v1h-2zM1746 666h1v1h-1zM1745 668h5v1h-5zM1750 668h6v1h-6zM1757 668h9v1h-9zM1766 668h5v1h-5zM1749 670h4v1h-4zM1754 670h7v1h-7zM1762 670h4v1h-4zM1766 670h5v1h-5zM1772 670h4v1h-4zM1776 670h9v1h-9zM1786 670h2v1h-2zM1789 670h7v1h-7zM1796 670h3v1h-3zM1749 672h6v1h-6zM1756 672h3v1h-3zM1760 672h6v1h-6zM1766 672h3v1h-3zM1770 672h9v1h-9zM1780 672h4v1h-4zM1785 672h4v1h-4zM1790 672h4v1h-4zM1799 672h2v1h-2zM1749 674h9v1h-9zM1759 674h9v1h-9zM1768 674h5v1h-5zM1774 674h6v1h-6zM1781 674h7v1h-7zM1788 674h4v1h-4zM1797 674h2v1h-2zM1749 676h3v1h-3zM1753 676h9v1h-9zM1763 676h8v1h-8zM1772 676h2v1h-2zM1775 676h9v1h-9zM1784 676h8v1h-8zM1793 676h9v1h-9zM1803 676h3v1h-3zM1807 676h2v1h-2zM1815 676h2v1h-2zM1749 678h9v1h-9zM1758 678h8v1h-8zM1766 678h4v1h-4zM1770 678h2v1h-2zM1772 678h4v1h-4zM1777 678h5v1h-5zM1783 678h2v1h-2zM1786 678h6v1h-6zM1793 678h3v1h-3zM1797 678h1v1h-1zM1802 678h2v1h-2zM1749 680h4v1h-4zM1754 680h7v1h-7zM1762 680h2v1h-2zM1765 680h2v1h-2zM1768 680h8v1h-8zM1776 680h7v1h-7zM1784 680h5v1h-5zM1790 680h6v1h-6zM1797 680h5v1h-5zM1802 680h7v1h-7zM1747 682h1v1h-1zM1745 686h3v1h-3zM1749 686h3v1h-3zM1752 686h9v1h-9zM1762 686h4v1h-4zM1749 688h4v1h-4zM1754 688h5v1h-5zM1760 688h9v1h-9zM1770 688h3v1h-3zM1773 688h8v1h-8zM1782 688h6v1h-6zM1789 688h4v1h-4zM1749 690h7v1h-7zM1757 690h4v1h-4zM1762 690h6v1h-6zM1769 690h5v1h-5zM1775 690h5v1h-5zM1781 690h2v1h-2zM1784 690h4v1h-4zM1789 690h2v1h-2zM1796 690h2v1h-2zM1749 692h3v1h-3zM1753 692h6v1h-6zM1759 692h3v1h-3zM1763 692h9v1h-9zM1773 692h5v1h-5zM1779 692h6v1h-6zM1786 692h3v1h-3zM1789 692h7v1h-7zM1747 694h1v1h-1zM1745 696h7v1h-7zM1753 696h6v1h-6zM1759 696h6v1h-6zM1749 698h8v1h-8zM1758 698h2v1h-2zM1761 698h3v1h-3zM1765 698h4v1h-4zM1770 698h7v1h-7zM1778 698h4v1h-4zM1783 698h1v1h-1zM1749 700h9v1h-9zM1759 700h3v1h-3zM1763 700h5v1h-5zM1769 700h2v1h-2zM1772 700h7v1h-7zM1779 700h6v1h-6zM1786 700h5v1h-5zM1791 700h5v1h-5zM1800 700h2v1h-2zM1749 702h3v1h-3zM1753 702h5v1h-5zM1759 702h2v1h-2zM1761 702h3v1h-3zM1765 702h3v1h-3zM1769 702h4v1h-4zM1773 702h7v1h-7zM1781 702h9v1h-9zM1791 702h4v1h-4zM1796 702h2v1h-2zM1803 702h2v1h-2zM1749 704h3v1h-3zM1753 704h2v1h-2zM1755 704h8v1h-8zM1764 704h7v1h-7zM1772 704h9v1h-9zM1782 704h9v1h-9zM1792 704h6v1h-6zM1802 704h2v1h-2zM1749 706h2v1h-2zM1752 706h8v1h-8zM1761 706h7v1h-7zM1768 706h8v1h-8zM1776 706h5v1h-5zM1782 706h7v1h-7zM1790 706h8v1h-8zM1799 706h2v1h-2zM1802 706h2v1h-2zM1804 706h1v1h-1zM1749 708h6v1h-6zM1756 708h6v1h-6zM1763 708h9v1h-9zM1773 708h5v1h-5zM1779 708h2v1h-2zM1782 708h4v1h-4zM1787 708h7v1h-7zM1794 708h7v1h-7zM1802 708h7v1h-7zM1814 708h2v1h-2zM1749 710h6v1h-6zM1756 710h3v1h-3zM1760 710h7v1h-7zM1768 710h6v1h-6zM1775 710h7v1h-7zM1787 710h2v1h-2zM1749 712h2v1h-2zM1751 712h6v1h-6zM1758 712h2v1h-2zM1760 712h4v1h-4zM1765 712h6v1h-6zM1772 712h5v1h-5zM1778 712h2v1h-2zM1781 712h8v1h-8zM1790 712h8v1h-8zM1746 716h1v1h-1zM1745 718h9v1h-9zM1754 718h7v1h-7zM1761 718h5v1h-5zM1767 718h2v1h-2zM1770 718h4v1h-4zM1775 718h2v1h-2zM1778 718h5v1h-5zM1788 718h2v1h-2zM1796 718h2v1h-2zM1804 718h1v1h-1zM1745 720h7v1h-7zM1753 720h9v1h-9zM1763 720h5v1h-5zM1768 720h9v1h-9zM1778 720h8v1h-8zM1787 720h6v1h-6zM1799 720h2v1h-2zM1805 720h2v1h-2zM1813 720h1v1h-1zM1745 722h3v1h-3zM1749 722h2v1h-2zM1752 722h6v1h-6zM1759 722h7v1h-7zM1767 722h5v1h-5zM1772 722h3v1h-3zM1776 722h8v1h-8zM1784 722h1v1h-1zM1745 724h4v1h-4zM1750 724h3v1h-3zM1754 724h8v1h-8zM1762 724h7v1h-7zM1770 724h2v1h-2zM1742 726h1v1h-1zM1796 730h8v1h-8zM1804 730h4v1h-4zM1809 730h8v1h-8zM1818 730h6v1h-6zM1825 730h6v1h-6zM1832 730h4v1h-4zM1750 732h7v1h-7zM1758 732h9v1h-9zM1768 732h2v1h-2zM1775 732h9v1h-9zM1787 732h5v1h-5zM1793 732h4v1h-4zM1762 736h5v1h-5zM1768 736h5v1h-5zM1774 736h6v1h-6zM1781 736h1v1h-1zM1743 738h5v1h-5zM1749 738h6v1h-6zM1756 738h1v1h-1zM1760 738h6v1h-6zM1767 738h4v1h-4zM1772 738h8v1h-8zM1780 738h6v1h-6zM1801 738h3v1h-3zM1735 744h1v1h-1zM1758 748h2v1h-2zM1770 748h2v1h-2zM1752 752h3v1h-3zM1756 752h4v1h-4zM1760 752h6v1h-6zM1748 754h4v1h-4zM1753 754h5v1h-5zM1759 754h7v1h-7zM1752 756h5v1h-5zM1758 756h5v1h-5zM1764 756h5v1h-5zM1770 756h2v1h-2zM1776 756h2v1h-2zM1779 756h5v1h-5zM1786 756h2v1h-2zM1788 756h8v1h-8zM1815 756h3v1h-3zM1758 760h2v1h-2zM1761 760h2v1h-2zM1764 760h3v1h-3zM1768 760h3v1h-3zM1753 762h2v1h-2zM1779 762h2v1h-2zM1782 762h2v1h-2zM1785 762h5v1h-5zM1791 762h6v1h-6zM1753 764h2v1h-2zM1780 764h8v1h-8zM1789 764h9v1h-9zM1799 764h9v1h-9zM1809 764h1v1h-1zM1755 766h5v1h-5zM1760 766h3v1h-3zM1764 766h3v1h-3zM1768 766h3v1h-3zM1777 766h3v1h-3zM1780 766h4v1h-4zM1785 766h2v1h-2zM1815 766h3v1h-3zM1748 822h8v1h-8zM1757 822h1v1h-1zM1741 824h3v1h-3zM1744 824h6v1h-6zM1751 824h4v1h-4zM1759 824h8v1h-8zM1767 824h3v1h-3zM1771 824h8v1h-8zM1784 824h5v1h-5zM1790 824h4v1h-4zM1807 824h3v1h-3zM1740 828h1v1h-1zM1782 834h2v1h-2zM1797 834h2v1h-2zM1813 834h7v1h-7zM1821 834h6v1h-6zM1829 834h2v1h-2zM1753 838h2v1h-2zM1761 838h4v1h-4zM1766 838h3v1h-3zM1770 838h7v1h-7zM1778 838h9v1h-9zM1787 838h7v1h-7zM1795 838h3v1h-3zM1799 838h6v1h-6zM1806 838h2v1h-2zM1809 838h6v1h-6zM1816 838h7v1h-7zM1824 838h9v1h-9zM1834 838h2v1h-2zM1837 838h8v1h-8zM1751 840h2v1h-2zM1769 840h6v1h-6zM1776 840h3v1h-3zM1791 840h1v1h-1zM1772 844h2v1h-2zM1791 844h3v1h-3zM1795 844h6v1h-6zM1804 844h2v1h-2zM1762 846h1v1h-1zM1755 870h4v1h-4zM1754 872h2v1h-2zM1758 880h4v1h-4zM1756 886h2v1h-2zM1770 886h1v1h-1zM1756 888h2v1h-2zM1775 888h2v1h-2zM1756 890h2v1h-2zM1783 890h2v1h-2zM1786 890h1v1h-1zM1755 892h2v1h-2zM1788 892h8v1h-8zM1781 900h3v1h-3zM1785 900h2v1h-2zM1788 900h1v1h-1zM1759 904h5v1h-5zM1757 910h6v1h-6zM1757 912h4v1h-4zM1787 912h4v1h-4zM1754 914h2v1h-2zM1759 922h3v1h-3zM1755 924h5v1h-5zM1778 930h6v1h-6zM1805 936h3v1h-3zM1764 942h6v1h-6zM1771 942h2v1h-2zM1793 942h7v1h-7zM1782 960h2v1h-2zM1797 960h2v1h-2zM1813 960h9v1h-9zM1823 960h4v1h-4zM1830 960h2v1h-2zM1752 964h2v1h-2zM1760 964h7v1h-7zM1768 964h8v1h-8zM1777 964h8v1h-8zM1786 964h3v1h-3zM1790 964h5v1h-5zM1795 964h3v1h-3zM1799 964h9v1h-9zM1809 964h3v1h-3zM1813 964h9v1h-9zM1823 964h9v1h-9zM1833 964h9v1h-9zM1843 964h2v1h-2zM1751 966h2v1h-2zM1770 966h2v1h-2zM1773 966h7v1h-7zM1791 966h1v1h-1zM1751 974h2v1h-2zM1754 978h2v1h-2zM1757 980h2v1h-2zM1766 982h2v1h-2zM1753 984h1v1h-1zM1767 992h2v1h-2zM1751 1004h1v1h-1zM1754 1008h1v1h-1zM1767 1016h2v1h-2zM1749 216h23v1h-23zM1773 216h30v1h-30zM1749 218h21v1h-21zM1771 218h27v1h-27zM1799 218h2v1h-2zM1806 218h1v1h-1zM1749 220h19v1h-19zM1769 220h25v1h-25zM1795 220h2v1h-2zM1802 220h1v1h-1zM1749 222h29v1h-29zM1779 222h34v1h-34zM1814 222h2v1h-2zM1821 222h1v1h-1zM1749 224h23v1h-23zM1773 224h28v1h-28zM1802 224h2v1h-2zM1810 224h1v1h-1zM1749 226h64v1h-64zM1814 226h2v1h-2zM1746 228h1v1h-1zM1745 232h19v1h-19zM1749 234h18v1h-18zM1768 234h26v1h-26zM1749 236h16v1h-16zM1766 236h23v1h-23zM1790 236h2v1h-2zM1797 236h1v1h-1zM1749 238h47v1h-47zM1746 240h1v1h-1zM1745 242h18v1h-18zM1749 244h13v1h-13zM1763 244h21v1h-21zM1749 246h20v1h-20zM1770 246h26v1h-26zM1797 246h2v1h-2zM1804 246h1v1h-1zM1749 248h21v1h-21zM1771 248h27v1h-27zM1799 248h2v1h-2zM1806 248h1v1h-1zM1749 250h21v1h-21zM1771 250h27v1h-27zM1799 250h2v1h-2zM1806 250h1v1h-1zM1749 252h25v1h-25zM1775 252h32v1h-32zM1749 254h27v1h-27zM1777 254h33v1h-33zM1811 254h2v1h-2zM1818 254h1v1h-1zM1749 256h12v1h-12zM1762 256h19v1h-19zM1782 256h2v1h-2zM1789 256h1v1h-1zM1749 258h49v1h-49zM1746 260h1v1h-1zM1745 262h32v1h-32zM1778 262h2v1h-2zM1787 262h1v1h-1zM1794 262h1v1h-1zM1801 262h1v1h-1zM1745 264h42v1h-42zM1788 264h2v1h-2zM1797 264h1v1h-1zM1804 264h1v1h-1zM1811 264h1v1h-1zM1745 266h16v1h-16zM1762 266h24v1h-24zM1745 268h9v1h-9zM1755 268h17v1h-17zM1743 270h1v1h-1zM1767 276h1v1h-1zM1774 276h1v1h-1zM1748 278h5v1h-5zM1752 280h1v1h-1zM1753 286h1v1h-1zM1755 286h11v1h-11zM1785 286h2v1h-2zM1788 286h11v1h-11zM1817 286h2v1h-2zM1820 286h17v1h-17zM1745 288h1v1h-1zM1750 290h10v1h-10zM1765 290h5v1h-5zM1772 290h7v1h-7zM1780 290h9v1h-9zM1742 292h1v1h-1zM1758 296h1v1h-1zM1777 296h1v1h-1zM1803 296h1v1h-1zM1750 300h10v1h-10zM1765 300h5v1h-5zM1772 300h7v1h-7zM1780 300h9v1h-9zM1821 300h1v1h-1zM1757 306h1v1h-1zM1759 306h4v1h-4zM1775 306h1v1h-1zM1780 306h11v1h-11zM1792 306h1v1h-1zM1768 138h1v1h-1zM1745 214h24v1h-24z" fill="#9fc2d8" fill-opacity="0.56"/><path d="M1743 93h8v1h-8zM1752 93h3v1h-3zM1755 93h3v1h-3zM1759 93h2v1h-2zM1761 93h5v1h-5zM1767 93h8v1h-8zM1776 93h5v1h-5zM1782 93h5v1h-5zM1792 93h2v1h-2zM1773 97h1v1h-1zM1800 97h2v1h-2zM1796 99h2v1h-2zM1745 101h3v1h-3zM1774 105h2v1h-2zM1756 107h9v1h-9zM1766 107h9v1h-9zM1780 107h6v1h-6zM1787 107h1v1h-1zM1789 107h4v1h-4zM1794 107h4v1h-4zM1799 107h5v1h-5zM1805 107h4v1h-4zM1745 119h4v1h-4zM1750 119h7v1h-7zM1758 119h3v1h-3zM1761 119h8v1h-8zM1770 119h5v1h-5zM1745 121h9v1h-9zM1755 121h6v1h-6zM1762 121h3v1h-3zM1766 121h6v1h-6zM1773 121h4v1h-4zM1778 121h5v1h-5zM1783 121h7v1h-7zM1791 121h2v1h-2zM1794 121h6v1h-6zM1800 121h3v1h-3zM1804 121h1v1h-1zM1744 127h5v1h-5zM1749 127h8v1h-8zM1758 127h5v1h-5zM1764 127h9v1h-9zM1745 129h7v1h-7zM1752 129h7v1h-7zM1760 129h3v1h-3zM1764 129h5v1h-5zM1770 129h9v1h-9zM1780 129h2v1h-2zM1783 129h7v1h-7zM1791 129h3v1h-3zM1794 129h3v1h-3zM1797 129h5v1h-5zM1803 129h4v1h-4zM1745 141h8v1h-8zM1754 141h3v1h-3zM1758 141h4v1h-4zM1762 141h2v1h-2zM1765 141h9v1h-9zM1774 141h4v1h-4zM1779 141h5v1h-5zM1745 143h7v1h-7zM1753 143h4v1h-4zM1758 143h3v1h-3zM1762 143h4v1h-4zM1767 143h5v1h-5zM1772 143h2v1h-2zM1745 145h5v1h-5zM1751 145h5v1h-5zM1757 145h6v1h-6zM1749 149h3v1h-3zM1753 149h7v1h-7zM1761 149h9v1h-9zM1771 149h3v1h-3zM1774 149h2v1h-2zM1749 151h3v1h-3zM1753 151h2v1h-2zM1756 151h3v1h-3zM1760 151h5v1h-5zM1766 151h9v1h-9zM1776 151h4v1h-4zM1749 153h5v1h-5zM1755 153h6v1h-6zM1761 153h5v1h-5zM1766 153h4v1h-4zM1771 153h8v1h-8zM1749 157h5v1h-5zM1755 157h3v1h-3zM1759 157h2v1h-2zM1762 157h1v1h-1zM1749 159h2v1h-2zM1752 159h6v1h-6zM1759 159h3v1h-3zM1763 159h5v1h-5zM1768 159h3v1h-3zM1772 159h6v1h-6zM1784 159h2v1h-2zM1749 161h3v1h-3zM1753 161h3v1h-3zM1757 161h7v1h-7zM1764 161h8v1h-8zM1772 161h6v1h-6zM1779 161h2v1h-2zM1782 161h5v1h-5zM1787 161h4v1h-4zM1792 161h4v1h-4zM1797 161h5v1h-5zM1749 165h8v1h-8zM1757 165h6v1h-6zM1764 165h6v1h-6zM1771 165h4v1h-4zM1776 165h9v1h-9zM1786 165h7v1h-7zM1793 165h6v1h-6zM1805 165h2v1h-2zM1749 169h3v1h-3zM1752 169h5v1h-5zM1758 169h5v1h-5zM1764 169h9v1h-9zM1774 169h8v1h-8zM1783 169h6v1h-6zM1790 169h5v1h-5zM1796 169h3v1h-3zM1804 169h2v1h-2zM1749 171h3v1h-3zM1752 171h2v1h-2zM1755 171h3v1h-3zM1758 171h9v1h-9zM1767 171h8v1h-8zM1776 171h5v1h-5zM1782 171h3v1h-3zM1786 171h6v1h-6zM1792 171h4v1h-4zM1797 171h6v1h-6zM1803 171h2v1h-2zM1749 173h9v1h-9zM1759 173h4v1h-4zM1764 173h9v1h-9zM1774 173h8v1h-8zM1783 173h4v1h-4zM1788 173h1v1h-1zM1795 173h2v1h-2zM1749 175h6v1h-6zM1756 175h4v1h-4zM1761 175h6v1h-6zM1768 175h7v1h-7zM1776 175h6v1h-6zM1749 179h4v1h-4zM1754 179h8v1h-8zM1763 179h6v1h-6zM1770 179h6v1h-6zM1777 179h5v1h-5zM1783 179h8v1h-8zM1792 179h2v1h-2zM1749 181h9v1h-9zM1759 181h9v1h-9zM1768 181h9v1h-9zM1778 181h5v1h-5zM1784 181h4v1h-4zM1789 181h3v1h-3zM1793 181h7v1h-7zM1801 181h3v1h-3zM1749 183h8v1h-8zM1758 183h5v1h-5zM1764 183h7v1h-7zM1772 183h9v1h-9zM1782 183h7v1h-7zM1790 183h5v1h-5zM1796 183h5v1h-5zM1802 183h9v1h-9zM1812 183h6v1h-6zM1818 183h1v1h-1zM1749 185h8v1h-8zM1758 185h9v1h-9zM1767 185h9v1h-9zM1777 185h8v1h-8zM1785 185h4v1h-4zM1746 189h1v1h-1zM1745 191h3v1h-3zM1748 191h9v1h-9zM1758 191h2v1h-2zM1749 193h6v1h-6zM1755 193h6v1h-6zM1762 193h8v1h-8zM1749 197h5v1h-5zM1755 197h5v1h-5zM1761 197h2v1h-2zM1763 197h6v1h-6zM1770 197h5v1h-5zM1776 197h8v1h-8zM1749 199h8v1h-8zM1757 199h5v1h-5zM1763 199h7v1h-7zM1771 199h7v1h-7zM1779 199h5v1h-5zM1747 205h1v1h-1zM1745 207h7v1h-7zM1753 207h3v1h-3zM1756 207h7v1h-7zM1749 209h8v1h-8zM1757 209h7v1h-7zM1765 209h3v1h-3zM1769 209h6v1h-6zM1776 209h8v1h-8zM1784 209h3v1h-3zM1788 209h5v1h-5zM1749 211h8v1h-8zM1758 211h2v1h-2zM1761 211h2v1h-2zM1764 211h3v1h-3zM1767 211h7v1h-7zM1775 211h7v1h-7zM1782 211h2v1h-2zM1785 211h7v1h-7zM1792 211h6v1h-6zM1799 211h3v1h-3zM1803 211h5v1h-5zM1809 211h8v1h-8zM1746 213h1v1h-1zM1747 353h3v1h-3zM1751 353h9v1h-9zM1761 353h4v1h-4zM1766 353h5v1h-5zM1772 353h1v1h-1zM1804 353h3v1h-3zM1746 355h6v1h-6zM1753 355h2v1h-2zM1759 357h7v1h-7zM1767 357h7v1h-7zM1775 357h4v1h-4zM1741 359h4v1h-4zM1746 359h2v1h-2zM1749 359h6v1h-6zM1759 359h2v1h-2zM1762 359h6v1h-6zM1769 359h8v1h-8zM1778 359h7v1h-7zM1785 359h4v1h-4zM1808 359h3v1h-3zM1735 365h2v1h-2zM1757 367h9v1h-9zM1767 367h6v1h-6zM1752 375h8v1h-8zM1760 375h4v1h-4zM1765 375h3v1h-3zM1769 375h2v1h-2zM1771 375h3v1h-3zM1755 379h2v1h-2zM1758 381h6v1h-6zM1765 381h5v1h-5zM1771 381h2v1h-2zM1750 391h3v1h-3zM1753 391h8v1h-8zM1762 391h5v1h-5zM1768 391h2v1h-2zM1771 391h3v1h-3zM1774 391h1v1h-1zM1778 391h1v1h-1zM1749 393h7v1h-7zM1757 393h2v1h-2zM1760 393h6v1h-6zM1767 393h7v1h-7zM1774 393h9v1h-9zM1783 393h2v1h-2zM1786 393h2v1h-2zM1789 393h3v1h-3zM1793 393h1v1h-1zM1757 401h2v1h-2zM1768 401h3v1h-3zM1771 401h3v1h-3zM1775 401h3v1h-3zM1779 401h7v1h-7zM1787 401h1v1h-1zM1745 411h4v1h-4zM1750 411h5v1h-5zM1756 411h7v1h-7zM1764 411h7v1h-7zM1771 411h6v1h-6zM1777 411h3v1h-3zM1781 411h3v1h-3zM1785 411h4v1h-4zM1789 411h2v1h-2zM1745 417h8v1h-8zM1754 417h2v1h-2zM1757 417h8v1h-8zM1766 417h6v1h-6zM1773 417h4v1h-4zM1778 417h3v1h-3zM1791 417h2v1h-2zM1749 421h3v1h-3zM1752 421h5v1h-5zM1758 421h4v1h-4zM1763 421h8v1h-8zM1772 421h2v1h-2zM1775 421h8v1h-8zM1784 421h4v1h-4zM1788 421h1v1h-1zM1802 421h3v1h-3zM1805 421h9v1h-9zM1815 421h5v1h-5zM1756 425h2v1h-2zM1759 425h8v1h-8zM1768 425h7v1h-7zM1780 425h5v1h-5zM1785 425h5v1h-5zM1793 425h3v1h-3zM1796 425h5v1h-5zM1802 425h5v1h-5zM1807 425h2v1h-2zM1755 433h3v1h-3zM1759 433h7v1h-7zM1767 433h6v1h-6zM1748 435h7v1h-7zM1756 435h2v1h-2zM1759 435h5v1h-5zM1764 435h3v1h-3zM1772 435h1v1h-1zM1749 437h4v1h-4zM1754 437h8v1h-8zM1763 437h4v1h-4zM1771 437h1v1h-1zM1744 441h2v1h-2zM1761 463h2v1h-2zM1749 467h8v1h-8zM1783 469h2v1h-2zM1757 471h2v1h-2zM1760 471h5v1h-5zM1766 471h4v1h-4zM1770 471h7v1h-7zM1818 471h6v1h-6zM1755 473h1v1h-1zM1784 475h2v1h-2zM1757 477h2v1h-2zM1759 477h6v1h-6zM1802 477h4v1h-4zM1806 477h1v1h-1zM1755 479h1v1h-1zM1783 481h2v1h-2zM1757 483h8v1h-8zM1802 483h5v1h-5zM1755 485h1v1h-1zM1783 487h2v1h-2zM1757 489h6v1h-6zM1764 489h1v1h-1zM1804 489h3v1h-3zM1808 489h1v1h-1zM1755 491h1v1h-1zM1753 493h5v1h-5zM1758 493h5v1h-5zM1764 493h6v1h-6zM1770 493h2v1h-2zM1772 493h2v1h-2zM1774 493h2v1h-2zM1777 493h2v1h-2zM1746 497h1v1h-1zM1749 501h3v1h-3zM1753 501h6v1h-6zM1753 503h5v1h-5zM1774 503h1v1h-1zM1753 505h7v1h-7zM1760 505h4v1h-4zM1783 505h1v1h-1zM1753 507h7v1h-7zM1761 507h2v1h-2zM1772 507h1v1h-1zM1753 509h4v1h-4zM1747 513h1v1h-1zM1749 517h6v1h-6zM1756 517h1v1h-1zM1753 519h5v1h-5zM1772 519h1v1h-1zM1753 521h2v1h-2zM1756 521h7v1h-7zM1764 521h8v1h-8zM1744 527h1v1h-1zM1757 531h3v1h-3zM1783 531h6v1h-6zM1809 531h2v1h-2zM1761 557h4v1h-4zM1771 557h2v1h-2zM1774 557h1v1h-1zM1748 559h5v1h-5zM1754 559h5v1h-5zM1760 559h2v1h-2zM1763 559h3v1h-3zM1767 559h1v1h-1zM1783 559h2v1h-2zM1786 559h5v1h-5zM1792 559h6v1h-6zM1798 559h4v1h-4zM1803 559h8v1h-8zM1812 559h4v1h-4zM1817 559h3v1h-3zM1821 559h3v1h-3zM1825 559h9v1h-9zM1834 559h8v1h-8zM1842 559h1v1h-1zM1756 561h5v1h-5zM1762 561h4v1h-4zM1767 561h3v1h-3zM1770 561h3v1h-3zM1774 561h2v1h-2zM1779 561h2v1h-2zM1782 561h5v1h-5zM1790 561h4v1h-4zM1795 561h9v1h-9zM1805 561h1v1h-1zM1739 569h7v1h-7zM1747 569h8v1h-8zM1756 569h3v1h-3zM1759 569h8v1h-8zM1767 569h7v1h-7zM1775 569h4v1h-4zM1770 571h2v1h-2zM1791 573h1v1h-1zM1745 575h3v1h-3zM1749 575h7v1h-7zM1756 575h6v1h-6zM1763 575h6v1h-6zM1770 575h5v1h-5zM1744 577h1v1h-1zM1764 583h2v1h-2zM1751 585h2v1h-2zM1754 585h4v1h-4zM1759 585h6v1h-6zM1766 585h2v1h-2zM1769 585h2v1h-2zM1774 585h6v1h-6zM1780 585h2v1h-2zM1783 585h6v1h-6zM1789 585h2v1h-2zM1791 585h3v1h-3zM1795 585h4v1h-4zM1765 593h2v1h-2zM1745 597h4v1h-4zM1749 597h4v1h-4zM1754 597h5v1h-5zM1760 597h3v1h-3zM1749 599h4v1h-4zM1754 599h9v1h-9zM1763 599h8v1h-8zM1771 599h3v1h-3zM1775 599h2v1h-2zM1778 599h2v1h-2zM1749 603h6v1h-6zM1756 603h3v1h-3zM1760 603h9v1h-9zM1769 603h9v1h-9zM1779 603h1v1h-1zM1749 605h6v1h-6zM1756 605h9v1h-9zM1765 605h9v1h-9zM1775 605h5v1h-5zM1749 609h6v1h-6zM1756 609h2v1h-2zM1759 609h8v1h-8zM1767 609h4v1h-4zM1749 611h9v1h-9zM1759 611h6v1h-6zM1766 611h3v1h-3zM1770 611h5v1h-5zM1776 611h9v1h-9zM1786 611h3v1h-3zM1795 611h2v1h-2zM1749 613h4v1h-4zM1754 613h2v1h-2zM1757 613h7v1h-7zM1765 613h9v1h-9zM1775 613h7v1h-7zM1783 613h8v1h-8zM1791 613h4v1h-4zM1795 613h3v1h-3zM1798 613h2v1h-2zM1801 613h6v1h-6zM1749 617h5v1h-5zM1755 617h5v1h-5zM1761 617h3v1h-3zM1765 617h6v1h-6zM1772 617h5v1h-5zM1778 617h6v1h-6zM1785 617h5v1h-5zM1791 617h5v1h-5zM1797 617h2v1h-2zM1803 617h2v1h-2zM1749 621h8v1h-8zM1757 621h6v1h-6zM1764 621h6v1h-6zM1770 621h2v1h-2zM1773 621h4v1h-4zM1778 621h9v1h-9zM1787 621h2v1h-2zM1790 621h8v1h-8zM1798 621h1v1h-1zM1804 621h2v1h-2zM1749 623h7v1h-7zM1757 623h9v1h-9zM1767 623h2v1h-2zM1770 623h2v1h-2zM1773 623h4v1h-4zM1778 623h6v1h-6zM1785 623h6v1h-6zM1792 623h4v1h-4zM1796 623h2v1h-2zM1798 623h3v1h-3zM1801 623h8v1h-8zM1810 623h2v1h-2zM1749 625h6v1h-6zM1756 625h5v1h-5zM1761 625h4v1h-4zM1766 625h6v1h-6zM1772 625h7v1h-7zM1780 625h5v1h-5zM1786 625h8v1h-8zM1799 625h2v1h-2zM1749 627h6v1h-6zM1755 627h3v1h-3zM1759 627h6v1h-6zM1766 627h7v1h-7zM1774 627h5v1h-5zM1780 627h2v1h-2zM1749 631h6v1h-6zM1756 631h2v1h-2zM1759 631h8v1h-8zM1768 631h6v1h-6zM1774 631h3v1h-3zM1778 631h2v1h-2zM1780 631h2v1h-2zM1783 631h7v1h-7zM1791 631h2v1h-2zM1794 631h2v1h-2zM1797 631h2v1h-2zM1749 633h7v1h-7zM1756 633h2v1h-2zM1759 633h8v1h-8zM1768 633h7v1h-7zM1776 633h8v1h-8zM1785 633h3v1h-3zM1789 633h7v1h-7zM1797 633h8v1h-8zM1806 633h9v1h-9zM1815 633h2v1h-2zM1817 633h7v1h-7zM1749 635h7v1h-7zM1757 635h2v1h-2zM1760 635h4v1h-4zM1765 635h3v1h-3zM1769 635h7v1h-7zM1777 635h4v1h-4zM1782 635h7v1h-7zM1790 635h3v1h-3zM1749 641h2v1h-2zM1752 641h3v1h-3zM1756 641h7v1h-7zM1764 641h5v1h-5zM1770 641h3v1h-3zM1773 641h4v1h-4zM1778 641h5v1h-5zM1784 641h4v1h-4zM1789 641h7v1h-7zM1797 641h4v1h-4zM1801 641h4v1h-4zM1806 641h5v1h-5zM1747 643h1v1h-1zM1745 645h7v1h-7zM1752 645h8v1h-8zM1749 647h2v1h-2zM1752 647h8v1h-8zM1761 647h7v1h-7zM1769 647h8v1h-8zM1778 647h1v1h-1zM1749 651h9v1h-9zM1759 651h4v1h-4zM1764 651h6v1h-6zM1770 651h4v1h-4zM1774 651h6v1h-6zM1781 651h2v1h-2zM1784 651h5v1h-5zM1749 653h9v1h-9zM1759 653h2v1h-2zM1761 653h5v1h-5zM1766 653h7v1h-7zM1774 653h9v1h-9zM1784 653h4v1h-4zM1788 653h1v1h-1zM1747 659h1v1h-1zM1745 661h8v1h-8zM1754 661h5v1h-5zM1760 661h3v1h-3zM1753 663h9v1h-9zM1762 663h3v1h-3zM1766 663h5v1h-5zM1771 663h5v1h-5zM1777 663h6v1h-6zM1784 663h2v1h-2zM1787 663h3v1h-3zM1790 663h5v1h-5zM1796 663h7v1h-7zM1753 665h8v1h-8zM1762 665h8v1h-8zM1770 665h2v1h-2zM1773 665h6v1h-6zM1780 665h8v1h-8zM1788 665h5v1h-5zM1794 665h3v1h-3zM1797 665h2v1h-2zM1799 665h2v1h-2zM1802 665h7v1h-7zM1810 665h9v1h-9zM1820 665h7v1h-7zM1828 665h2v1h-2zM1746 667h1v1h-1zM1745 669h5v1h-5zM1750 669h6v1h-6zM1757 669h9v1h-9zM1766 669h5v1h-5zM1749 671h4v1h-4zM1754 671h7v1h-7zM1762 671h4v1h-4zM1766 671h5v1h-5zM1772 671h4v1h-4zM1776 671h9v1h-9zM1786 671h2v1h-2zM1789 671h7v1h-7zM1796 671h3v1h-3zM1749 673h6v1h-6zM1756 673h3v1h-3zM1760 673h6v1h-6zM1766 673h3v1h-3zM1770 673h9v1h-9zM1780 673h4v1h-4zM1785 673h4v1h-4zM1790 673h4v1h-4zM1799 673h2v1h-2zM1749 675h9v1h-9zM1759 675h9v1h-9zM1768 675h5v1h-5zM1774 675h6v1h-6zM1781 675h7v1h-7zM1788 675h4v1h-4zM1797 675h2v1h-2zM1749 677h3v1h-3zM1753 677h9v1h-9zM1763 677h8v1h-8zM1772 677h2v1h-2zM1775 677h9v1h-9zM1784 677h8v1h-8zM1793 677h9v1h-9zM1803 677h3v1h-3zM1807 677h2v1h-2zM1815 677h2v1h-2zM1749 679h9v1h-9zM1758 679h8v1h-8zM1766 679h4v1h-4zM1770 679h2v1h-2zM1772 679h4v1h-4zM1777 679h5v1h-5zM1783 679h2v1h-2zM1786 679h6v1h-6zM1793 679h3v1h-3zM1797 679h1v1h-1zM1802 679h2v1h-2zM1749 681h4v1h-4zM1754 681h7v1h-7zM1762 681h2v1h-2zM1765 681h2v1h-2zM1768 681h8v1h-8zM1776 681h7v1h-7zM1784 681h5v1h-5zM1790 681h6v1h-6zM1797 681h5v1h-5zM1802 681h7v1h-7zM1747 683h1v1h-1zM1745 687h3v1h-3zM1749 687h3v1h-3zM1752 687h9v1h-9zM1762 687h4v1h-4zM1749 689h4v1h-4zM1754 689h5v1h-5zM1760 689h9v1h-9zM1770 689h3v1h-3zM1773 689h8v1h-8zM1782 689h6v1h-6zM1789 689h4v1h-4zM1749 691h7v1h-7zM1757 691h4v1h-4zM1762 691h6v1h-6zM1769 691h5v1h-5zM1775 691h5v1h-5zM1781 691h2v1h-2zM1784 691h4v1h-4zM1789 691h2v1h-2zM1796 691h2v1h-2zM1749 693h3v1h-3zM1753 693h6v1h-6zM1759 693h3v1h-3zM1763 693h9v1h-9zM1773 693h5v1h-5zM1779 693h6v1h-6zM1786 693h3v1h-3zM1789 693h7v1h-7zM1747 695h1v1h-1zM1745 697h7v1h-7zM1753 697h6v1h-6zM1759 697h6v1h-6zM1749 699h8v1h-8zM1758 699h2v1h-2zM1761 699h3v1h-3zM1765 699h4v1h-4zM1770 699h7v1h-7zM1778 699h4v1h-4zM1783 699h1v1h-1zM1749 701h9v1h-9zM1759 701h3v1h-3zM1763 701h5v1h-5zM1769 701h2v1h-2zM1772 701h7v1h-7zM1779 701h6v1h-6zM1786 701h5v1h-5zM1791 701h5v1h-5zM1800 701h2v1h-2zM1749 703h3v1h-3zM1753 703h5v1h-5zM1759 703h2v1h-2zM1761 703h3v1h-3zM1765 703h3v1h-3zM1769 703h4v1h-4zM1773 703h7v1h-7zM1781 703h9v1h-9zM1791 703h4v1h-4zM1796 703h2v1h-2zM1803 703h2v1h-2zM1749 705h3v1h-3zM1753 705h2v1h-2zM1755 705h8v1h-8zM1764 705h7v1h-7zM1772 705h9v1h-9zM1782 705h9v1h-9zM1792 705h6v1h-6zM1802 705h2v1h-2zM1749 707h2v1h-2zM1752 707h8v1h-8zM1761 707h7v1h-7zM1768 707h8v1h-8zM1776 707h5v1h-5zM1782 707h7v1h-7zM1790 707h8v1h-8zM1799 707h2v1h-2zM1802 707h2v1h-2zM1804 707h1v1h-1zM1749 709h6v1h-6zM1756 709h6v1h-6zM1763 709h9v1h-9zM1773 709h5v1h-5zM1779 709h2v1h-2zM1782 709h4v1h-4zM1787 709h7v1h-7zM1794 709h7v1h-7zM1802 709h7v1h-7zM1814 709h2v1h-2zM1749 711h6v1h-6zM1756 711h3v1h-3zM1760 711h7v1h-7zM1768 711h6v1h-6zM1775 711h7v1h-7zM1787 711h2v1h-2zM1749 713h2v1h-2zM1751 713h6v1h-6zM1758 713h2v1h-2zM1760 713h4v1h-4zM1765 713h6v1h-6zM1772 713h5v1h-5zM1778 713h2v1h-2zM1781 713h8v1h-8zM1790 713h8v1h-8zM1746 717h1v1h-1zM1745 719h9v1h-9zM1754 719h7v1h-7zM1761 719h5v1h-5zM1767 719h2v1h-2zM1770 719h4v1h-4zM1775 719h2v1h-2zM1778 719h5v1h-5zM1788 719h2v1h-2zM1796 719h2v1h-2zM1804 719h1v1h-1zM1745 721h7v1h-7zM1753 721h9v1h-9zM1763 721h5v1h-5zM1768 721h9v1h-9zM1778 721h8v1h-8zM1787 721h6v1h-6zM1799 721h2v1h-2zM1805 721h2v1h-2zM1813 721h1v1h-1zM1745 723h3v1h-3zM1749 723h2v1h-2zM1752 723h6v1h-6zM1759 723h7v1h-7zM1767 723h5v1h-5zM1772 723h3v1h-3zM1776 723h8v1h-8zM1784 723h1v1h-1zM1745 725h4v1h-4zM1750 725h3v1h-3zM1754 725h8v1h-8zM1762 725h7v1h-7zM1770 725h2v1h-2zM1742 727h1v1h-1zM1796 731h8v1h-8zM1804 731h4v1h-4zM1809 731h8v1h-8zM1818 731h6v1h-6zM1825 731h6v1h-6zM1832 731h4v1h-4zM1750 733h7v1h-7zM1758 733h9v1h-9zM1768 733h2v1h-2zM1775 733h9v1h-9zM1787 733h5v1h-5zM1793 733h4v1h-4zM1762 737h5v1h-5zM1768 737h5v1h-5zM1774 737h6v1h-6zM1781 737h1v1h-1zM1743 739h5v1h-5zM1749 739h6v1h-6zM1756 739h1v1h-1zM1760 739h6v1h-6zM1767 739h4v1h-4zM1772 739h8v1h-8zM1780 739h6v1h-6zM1801 739h3v1h-3zM1735 745h1v1h-1zM1758 749h2v1h-2zM1770 749h2v1h-2zM1752 753h3v1h-3zM1756 753h4v1h-4zM1760 753h6v1h-6zM1748 755h4v1h-4zM1753 755h5v1h-5zM1759 755h7v1h-7zM1752 757h5v1h-5zM1758 757h5v1h-5zM1764 757h5v1h-5zM1770 757h2v1h-2zM1776 757h2v1h-2zM1779 757h5v1h-5zM1786 757h2v1h-2zM1788 757h8v1h-8zM1815 757h3v1h-3zM1758 761h2v1h-2zM1761 761h2v1h-2zM1764 761h3v1h-3zM1768 761h3v1h-3zM1753 763h2v1h-2zM1779 763h2v1h-2zM1782 763h2v1h-2zM1785 763h5v1h-5zM1791 763h6v1h-6zM1753 765h2v1h-2zM1780 765h8v1h-8zM1789 765h9v1h-9zM1799 765h9v1h-9zM1809 765h1v1h-1zM1755 767h5v1h-5zM1760 767h3v1h-3zM1764 767h3v1h-3zM1768 767h3v1h-3zM1777 767h3v1h-3zM1780 767h4v1h-4zM1785 767h2v1h-2zM1815 767h3v1h-3zM1748 823h8v1h-8zM1757 823h1v1h-1zM1741 825h3v1h-3zM1744 825h6v1h-6zM1751 825h4v1h-4zM1759 825h8v1h-8zM1767 825h3v1h-3zM1771 825h8v1h-8zM1784 825h5v1h-5zM1790 825h4v1h-4zM1807 825h3v1h-3zM1740 829h1v1h-1zM1782 835h2v1h-2zM1797 835h2v1h-2zM1813 835h7v1h-7zM1821 835h6v1h-6zM1829 835h2v1h-2zM1753 839h2v1h-2zM1761 839h4v1h-4zM1766 839h3v1h-3zM1770 839h7v1h-7zM1778 839h9v1h-9zM1787 839h7v1h-7zM1795 839h3v1h-3zM1799 839h6v1h-6zM1806 839h2v1h-2zM1809 839h6v1h-6zM1816 839h7v1h-7zM1824 839h9v1h-9zM1834 839h2v1h-2zM1837 839h8v1h-8zM1751 841h2v1h-2zM1769 841h6v1h-6zM1776 841h3v1h-3zM1791 841h1v1h-1zM1772 845h2v1h-2zM1791 845h3v1h-3zM1795 845h6v1h-6zM1804 845h2v1h-2zM1762 847h1v1h-1zM1755 871h4v1h-4zM1754 873h2v1h-2zM1758 881h4v1h-4zM1756 887h2v1h-2zM1770 887h1v1h-1zM1756 889h2v1h-2zM1775 889h2v1h-2zM1756 891h2v1h-2zM1783 891h2v1h-2zM1786 891h1v1h-1zM1755 893h2v1h-2zM1788 893h8v1h-8zM1781 901h3v1h-3zM1785 901h2v1h-2zM1788 901h1v1h-1zM1759 905h5v1h-5zM1757 911h6v1h-6zM1757 913h4v1h-4zM1787 913h4v1h-4zM1754 915h2v1h-2zM1759 923h3v1h-3zM1755 925h5v1h-5zM1778 931h6v1h-6zM1805 937h3v1h-3zM1764 943h6v1h-6zM1771 943h2v1h-2zM1793 943h7v1h-7zM1782 961h2v1h-2zM1797 961h2v1h-2zM1813 961h9v1h-9zM1823 961h4v1h-4zM1830 961h2v1h-2zM1752 965h2v1h-2zM1760 965h7v1h-7zM1768 965h8v1h-8zM1777 965h8v1h-8zM1786 965h3v1h-3zM1790 965h5v1h-5zM1795 965h3v1h-3zM1799 965h9v1h-9zM1809 965h3v1h-3zM1813 965h9v1h-9zM1823 965h9v1h-9zM1833 965h9v1h-9zM1843 965h2v1h-2zM1751 967h2v1h-2zM1770 967h2v1h-2zM1773 967h7v1h-7zM1791 967h1v1h-1zM1751 975h2v1h-2zM1754 979h2v1h-2zM1757 981h2v1h-2zM1766 983h2v1h-2zM1753 985h1v1h-1zM1767 993h2v1h-2zM1751 1005h1v1h-1zM1754 1009h1v1h-1zM1767 1017h2v1h-2zM1749 217h23v1h-23zM1773 217h30v1h-30zM1749 219h21v1h-21zM1771 219h27v1h-27zM1799 219h2v1h-2zM1806 219h1v1h-1zM1749 221h19v1h-19zM1769 221h25v1h-25zM1795 221h2v1h-2zM1802 221h1v1h-1zM1749 223h29v1h-29zM1779 223h34v1h-34zM1814 223h2v1h-2zM1821 223h1v1h-1zM1749 225h23v1h-23zM1773 225h28v1h-28zM1802 225h2v1h-2zM1810 225h1v1h-1zM1749 227h64v1h-64zM1814 227h2v1h-2zM1746 229h1v1h-1zM1745 233h19v1h-19zM1749 235h18v1h-18zM1768 235h26v1h-26zM1749 237h16v1h-16zM1766 237h23v1h-23zM1790 237h2v1h-2zM1797 237h1v1h-1zM1749 239h47v1h-47zM1746 241h1v1h-1zM1745 243h18v1h-18zM1749 245h13v1h-13zM1763 245h21v1h-21zM1749 247h20v1h-20zM1770 247h26v1h-26zM1797 247h2v1h-2zM1804 247h1v1h-1zM1749 249h21v1h-21zM1771 249h27v1h-27zM1799 249h2v1h-2zM1806 249h1v1h-1zM1749 251h21v1h-21zM1771 251h27v1h-27zM1799 251h2v1h-2zM1806 251h1v1h-1zM1749 253h25v1h-25zM1775 253h32v1h-32zM1749 255h27v1h-27zM1777 255h33v1h-33zM1811 255h2v1h-2zM1818 255h1v1h-1zM1749 257h12v1h-12zM1762 257h19v1h-19zM1782 257h2v1h-2zM1789 257h1v1h-1zM1749 259h49v1h-49zM1746 261h1v1h-1zM1745 263h32v1h-32zM1778 263h2v1h-2zM1787 263h1v1h-1zM1794 263h1v1h-1zM1801 263h1v1h-1zM1745 265h42v1h-42zM1788 265h2v1h-2zM1797 265h1v1h-1zM1804 265h1v1h-1zM1811 265h1v1h-1zM1745 267h16v1h-16zM1762 267h24v1h-24zM1745 269h9v1h-9zM1755 269h17v1h-17zM1743 271h1v1h-1zM1767 277h1v1h-1zM1774 277h1v1h-1zM1748 279h5v1h-5zM1752 281h1v1h-1zM1753 287h1v1h-1zM1755 287h11v1h-11zM1785 287h2v1h-2zM1788 287h11v1h-11zM1817 287h2v1h-2zM1820 287h17v1h-17zM1745 289h1v1h-1zM1750 291h10v1h-10zM1765 291h5v1h-5zM1772 291h7v1h-7zM1780 291h9v1h-9zM1742 293h1v1h-1zM1758 297h1v1h-1zM1777 297h1v1h-1zM1803 297h1v1h-1zM1750 301h10v1h-10zM1765 301h5v1h-5zM1772 301h7v1h-7zM1780 301h9v1h-9zM1821 301h1v1h-1zM1757 307h1v1h-1zM1759 307h4v1h-4zM1775 307h1v1h-1zM1780 307h11v1h-11zM1792 307h1v1h-1zM1768 139h1v1h-1zM1745 215h24v1h-24z" fill="#9fc2d8" fill-opacity="0.3"/><path d="M1788 92h3v1h-3zM1791 92h1v1h-1zM1745 96h5v1h-5zM1779 158h4v1h-4zM1800 164h4v1h-4zM1800 168h4v1h-4zM1790 172h4v1h-4zM1741 374h3v1h-3zM1745 374h1v1h-1zM1745 380h2v1h-2zM1748 380h2v1h-2zM1745 400h2v1h-2zM1748 400h2v1h-2zM1759 400h3v1h-3zM1789 420h3v1h-3zM1767 436h3v1h-3zM1741 462h3v1h-3zM1777 470h3v1h-3zM1765 476h3v1h-3zM1765 482h3v1h-3zM1765 488h3v1h-3zM1773 520h4v1h-4zM1811 530h4v1h-4zM1766 556h4v1h-4zM1780 568h4v1h-4zM1741 570h2v1h-2zM1744 570h2v1h-2zM1741 592h5v1h-5zM1790 610h2v1h-2zM1792 610h2v1h-2zM1799 616h3v1h-3zM1802 616h1v1h-1zM1799 620h4v1h-4zM1795 624h4v1h-4zM1795 672h4v1h-4zM1793 674h2v1h-2zM1796 674h1v1h-1zM1810 676h2v1h-2zM1813 676h1v1h-1zM1798 678h4v1h-4zM1810 680h4v1h-4zM1791 690h3v1h-3zM1798 692h4v1h-4zM1796 700h4v1h-4zM1798 702h2v1h-2zM1801 702h1v1h-1zM1798 704h4v1h-4zM1809 708h4v1h-4zM1782 710h2v1h-2zM1784 710h2v1h-2zM1791 718h4v1h-4zM1798 718h5v1h-5zM1801 720h4v1h-4zM1808 720h5v1h-5zM1773 748h2v1h-2zM1776 748h2v1h-2zM1745 752h5v1h-5zM1745 760h5v1h-5zM1745 762h3v1h-3zM1745 764h3v1h-3zM1772 766h4v1h-4zM1779 824h5v1h-5zM1799 834h5v1h-5zM1804 834h8v1h-8zM1737 838h5v1h-5zM1737 840h3v1h-3zM1741 840h1v1h-1zM1753 840h3v1h-3zM1775 844h5v1h-5zM1781 844h7v1h-7zM1745 870h3v1h-3zM1745 872h3v1h-3zM1745 880h3v1h-3zM1751 882h2v1h-2zM1765 910h6v1h-6zM1767 930h3v1h-3zM1771 930h1v1h-1zM1768 936h6v1h-6zM1755 942h8v1h-8zM1784 942h5v1h-5zM1790 942h2v1h-2zM1799 960h5v1h-5zM1804 960h8v1h-8zM1737 964h2v1h-2zM1740 964h2v1h-2zM1737 966h2v1h-2zM1740 966h2v1h-2zM1753 966h3v1h-3zM1741 974h3v1h-3zM1754 974h3v1h-3zM1778 976h8v1h-8zM1743 978h3v1h-3zM1743 980h3v1h-3zM1752 982h3v1h-3zM1802 218h4v1h-4zM1798 220h4v1h-4zM1817 222h4v1h-4zM1805 224h4v1h-4zM1817 226h4v1h-4zM1793 236h4v1h-4zM1800 246h4v1h-4zM1802 248h4v1h-4zM1802 250h4v1h-4zM1814 254h4v1h-4zM1785 256h4v1h-4zM1789 262h4v1h-4zM1796 262h5v1h-5zM1799 264h4v1h-4zM1806 264h5v1h-5zM1741 286h5v1h-5zM1741 296h5v1h-5zM1743 306h5v1h-5zM1741 138h5v1h-5zM1770 138h3v1h-3z" fill="#569cd6" fill-opacity="0.56"/><path d="M1788 93h3v1h-3zM1791 93h1v1h-1zM1745 97h5v1h-5zM1779 159h4v1h-4zM1800 165h4v1h-4zM1800 169h4v1h-4zM1790 173h4v1h-4zM1741 375h3v1h-3zM1745 375h1v1h-1zM1745 381h2v1h-2zM1748 381h2v1h-2zM1745 401h2v1h-2zM1748 401h2v1h-2zM1759 401h3v1h-3zM1789 421h3v1h-3zM1767 437h3v1h-3zM1741 463h3v1h-3zM1777 471h3v1h-3zM1765 477h3v1h-3zM1765 483h3v1h-3zM1765 489h3v1h-3zM1773 521h4v1h-4zM1811 531h4v1h-4zM1766 557h4v1h-4zM1780 569h4v1h-4zM1741 571h2v1h-2zM1744 571h2v1h-2zM1741 593h5v1h-5zM1790 611h2v1h-2zM1792 611h2v1h-2zM1799 617h3v1h-3zM1802 617h1v1h-1zM1799 621h4v1h-4zM1795 625h4v1h-4zM1795 673h4v1h-4zM1793 675h2v1h-2zM1796 675h1v1h-1zM1810 677h2v1h-2zM1813 677h1v1h-1zM1798 679h4v1h-4zM1810 681h4v1h-4zM1791 691h3v1h-3zM1798 693h4v1h-4zM1796 701h4v1h-4zM1798 703h2v1h-2zM1801 703h1v1h-1zM1798 705h4v1h-4zM1809 709h4v1h-4zM1782 711h2v1h-2zM1784 711h2v1h-2zM1791 719h4v1h-4zM1798 719h5v1h-5zM1801 721h4v1h-4zM1808 721h5v1h-5zM1773 749h2v1h-2zM1776 749h2v1h-2zM1745 753h5v1h-5zM1745 761h5v1h-5zM1745 763h3v1h-3zM1745 765h3v1h-3zM1772 767h4v1h-4zM1779 825h5v1h-5zM1799 835h5v1h-5zM1804 835h8v1h-8zM1737 839h5v1h-5zM1737 841h3v1h-3zM1741 841h1v1h-1zM1753 841h3v1h-3zM1775 845h5v1h-5zM1781 845h7v1h-7zM1745 871h3v1h-3zM1745 873h3v1h-3zM1745 881h3v1h-3zM1751 883h2v1h-2zM1765 911h6v1h-6zM1767 931h3v1h-3zM1771 931h1v1h-1zM1768 937h6v1h-6zM1755 943h8v1h-8zM1784 943h5v1h-5zM1790 943h2v1h-2zM1799 961h5v1h-5zM1804 961h8v1h-8zM1737 965h2v1h-2zM1740 965h2v1h-2zM1737 967h2v1h-2zM1740 967h2v1h-2zM1753 967h3v1h-3zM1741 975h3v1h-3zM1754 975h3v1h-3zM1778 977h8v1h-8zM1743 979h3v1h-3zM1743 981h3v1h-3zM1752 983h3v1h-3zM1802 219h4v1h-4zM1798 221h4v1h-4zM1817 223h4v1h-4zM1805 225h4v1h-4zM1817 227h4v1h-4zM1793 237h4v1h-4zM1800 247h4v1h-4zM1802 249h4v1h-4zM1802 251h4v1h-4zM1814 255h4v1h-4zM1785 257h4v1h-4zM1789 263h4v1h-4zM1796 263h5v1h-5zM1799 265h4v1h-4zM1806 265h5v1h-5zM1741 287h5v1h-5zM1741 297h5v1h-5zM1743 307h5v1h-5zM1741 139h5v1h-5zM1770 139h3v1h-3z" fill="#569cd6" fill-opacity="0.3"/><path d="M1751 96h4v1h-4zM1756 96h4v1h-4zM1761 96h6v1h-6zM1768 96h4v1h-4zM1799 98h3v1h-3zM1803 98h7v1h-7zM1811 98h7v1h-7zM1819 98h9v1h-9zM1829 98h3v1h-3zM1832 98h7v1h-7zM1749 104h8v1h-8zM1757 104h7v1h-7zM1765 104h6v1h-6zM1741 356h6v1h-6zM1733 366h5v1h-5zM1745 378h7v1h-7zM1750 380h6v1h-6zM1757 380h1v1h-1zM1745 384h5v1h-5zM1750 384h1v1h-1zM1758 384h5v1h-5zM1764 384h2v1h-2zM1751 400h4v1h-4zM1755 400h2v1h-2zM1751 404h6v1h-6zM1758 404h3v1h-3zM1755 422h3v1h-3zM1745 462h9v1h-9zM1755 462h4v1h-4zM1760 462h1v1h-1zM1741 530h7v1h-7zM1749 530h7v1h-7zM1760 530h9v1h-9zM1770 530h6v1h-6zM1777 530h5v1h-5zM1789 530h2v1h-2zM1792 530h9v1h-9zM1801 530h3v1h-3zM1805 530h4v1h-4zM1745 556h8v1h-8zM1754 556h6v1h-6zM1776 556h7v1h-7zM1784 556h4v1h-4zM1788 556h8v1h-8zM1797 556h9v1h-9zM1807 556h7v1h-7zM1815 556h3v1h-3zM1819 556h7v1h-7zM1827 556h3v1h-3zM1830 556h4v1h-4zM1835 556h1v1h-1zM1747 570h4v1h-4zM1752 570h6v1h-6zM1759 570h4v1h-4zM1764 570h6v1h-6zM1792 572h6v1h-6zM1799 572h8v1h-8zM1808 572h4v1h-4zM1813 572h8v1h-8zM1822 572h4v1h-4zM1827 572h3v1h-3zM1743 582h7v1h-7zM1750 582h2v1h-2zM1753 582h9v1h-9zM1747 592h6v1h-6zM1754 592h4v1h-4zM1758 592h5v1h-5zM1764 592h1v1h-1zM1748 730h6v1h-6zM1755 730h7v1h-7zM1763 730h1v1h-1zM1747 734h5v1h-5zM1743 736h5v1h-5zM1749 736h1v1h-1zM1737 748h2v1h-2zM1739 748h4v1h-4zM1761 748h8v1h-8zM1750 752h2v1h-2zM1751 760h7v1h-7zM1748 762h3v1h-3zM1748 764h3v1h-3zM1751 764h2v1h-2zM1745 766h3v1h-3zM1733 834h2v1h-2zM1736 834h3v1h-3zM1785 834h5v1h-5zM1791 834h5v1h-5zM1743 838h2v1h-2zM1745 838h3v1h-3zM1749 838h2v1h-2zM1743 840h8v1h-8zM1741 844h2v1h-2zM1763 844h2v1h-2zM1766 844h5v1h-5zM1752 846h7v1h-7zM1760 846h1v1h-1zM1749 870h5v1h-5zM1748 872h3v1h-3zM1752 872h2v1h-2zM1757 872h4v1h-4zM1748 880h7v1h-7zM1756 880h1v1h-1zM1755 882h9v1h-9zM1765 882h6v1h-6zM1775 882h4v1h-4zM1780 882h5v1h-5zM1786 882h5v1h-5zM1749 886h3v1h-3zM1753 886h2v1h-2zM1759 886h9v1h-9zM1768 886h1v1h-1zM1749 888h6v1h-6zM1759 888h2v1h-2zM1762 888h4v1h-4zM1767 888h4v1h-4zM1772 888h3v1h-3zM1749 890h6v1h-6zM1759 890h5v1h-5zM1765 890h2v1h-2zM1767 890h4v1h-4zM1772 890h4v1h-4zM1777 890h2v1h-2zM1749 892h6v1h-6zM1757 892h4v1h-4zM1762 892h7v1h-7zM1749 896h9v1h-9zM1758 896h2v1h-2zM1753 900h2v1h-2zM1755 900h7v1h-7zM1763 900h6v1h-6zM1769 900h7v1h-7zM1777 900h4v1h-4zM1753 904h6v1h-6zM1753 908h2v1h-2zM1792 912h5v1h-5zM1749 922h2v1h-2zM1752 922h2v1h-2zM1755 922h4v1h-4zM1762 922h7v1h-7zM1769 922h4v1h-4zM1773 922h3v1h-3zM1777 922h3v1h-3zM1749 924h5v1h-5zM1748 928h6v1h-6zM1749 930h3v1h-3zM1749 936h3v1h-3zM1746 946h1v1h-1zM1741 948h2v1h-2zM1743 948h5v1h-5zM1753 948h1v1h-1zM1733 960h3v1h-3zM1737 960h2v1h-2zM1785 960h5v1h-5zM1790 960h4v1h-4zM1795 960h1v1h-1zM1743 964h8v1h-8zM1742 966h3v1h-3zM1746 966h4v1h-4zM1744 974h7v1h-7zM1741 976h4v1h-4zM1746 976h3v1h-3zM1763 976h6v1h-6zM1770 976h1v1h-1zM1746 978h8v1h-8zM1756 978h2v1h-2zM1759 978h2v1h-2zM1762 978h2v1h-2zM1746 980h8v1h-8zM1754 980h2v1h-2zM1755 982h8v1h-8zM1764 982h2v1h-2zM1768 982h3v1h-3zM1771 982h8v1h-8zM1749 986h7v1h-7zM1757 986h2v1h-2zM1760 986h1v1h-1zM1749 1010h6v1h-6zM1755 1010h6v1h-6zM1747 276h20v1h-20zM1745 280h7v1h-7zM1757 280h5v1h-5zM1746 288h5v1h-5zM1747 296h10v1h-10zM1766 296h11v1h-11zM1795 296h5v1h-5zM1745 298h10v1h-10zM1770 306h5v1h-5zM1777 306h3v1h-3zM1747 138h20v1h-20z" fill="#9cdcfe" fill-opacity="0.56"/><path d="M1751 97h4v1h-4zM1756 97h4v1h-4zM1761 97h6v1h-6zM1768 97h4v1h-4zM1799 99h3v1h-3zM1803 99h7v1h-7zM1811 99h7v1h-7zM1819 99h9v1h-9zM1829 99h3v1h-3zM1832 99h7v1h-7zM1749 105h8v1h-8zM1757 105h7v1h-7zM1765 105h6v1h-6zM1741 357h6v1h-6zM1733 367h5v1h-5zM1745 379h7v1h-7zM1750 381h6v1h-6zM1757 381h1v1h-1zM1745 385h5v1h-5zM1750 385h1v1h-1zM1758 385h5v1h-5zM1764 385h2v1h-2zM1751 401h4v1h-4zM1755 401h2v1h-2zM1751 405h6v1h-6zM1758 405h3v1h-3zM1755 423h3v1h-3zM1745 463h9v1h-9zM1755 463h4v1h-4zM1760 463h1v1h-1zM1741 531h7v1h-7zM1749 531h7v1h-7zM1760 531h9v1h-9zM1770 531h6v1h-6zM1777 531h5v1h-5zM1789 531h2v1h-2zM1792 531h9v1h-9zM1801 531h3v1h-3zM1805 531h4v1h-4zM1745 557h8v1h-8zM1754 557h6v1h-6zM1776 557h7v1h-7zM1784 557h4v1h-4zM1788 557h8v1h-8zM1797 557h9v1h-9zM1807 557h7v1h-7zM1815 557h3v1h-3zM1819 557h7v1h-7zM1827 557h3v1h-3zM1830 557h4v1h-4zM1835 557h1v1h-1zM1747 571h4v1h-4zM1752 571h6v1h-6zM1759 571h4v1h-4zM1764 571h6v1h-6zM1792 573h6v1h-6zM1799 573h8v1h-8zM1808 573h4v1h-4zM1813 573h8v1h-8zM1822 573h4v1h-4zM1827 573h3v1h-3zM1743 583h7v1h-7zM1750 583h2v1h-2zM1753 583h9v1h-9zM1747 593h6v1h-6zM1754 593h4v1h-4zM1758 593h5v1h-5zM1764 593h1v1h-1zM1748 731h6v1h-6zM1755 731h7v1h-7zM1763 731h1v1h-1zM1747 735h5v1h-5zM1743 737h5v1h-5zM1749 737h1v1h-1zM1737 749h2v1h-2zM1739 749h4v1h-4zM1761 749h8v1h-8zM1750 753h2v1h-2zM1751 761h7v1h-7zM1748 763h3v1h-3zM1748 765h3v1h-3zM1751 765h2v1h-2zM1745 767h3v1h-3zM1733 835h2v1h-2zM1736 835h3v1h-3zM1785 835h5v1h-5zM1791 835h5v1h-5zM1743 839h2v1h-2zM1745 839h3v1h-3zM1749 839h2v1h-2zM1743 841h8v1h-8zM1741 845h2v1h-2zM1763 845h2v1h-2zM1766 845h5v1h-5zM1752 847h7v1h-7zM1760 847h1v1h-1zM1749 871h5v1h-5zM1748 873h3v1h-3zM1752 873h2v1h-2zM1757 873h4v1h-4zM1748 881h7v1h-7zM1756 881h1v1h-1zM1755 883h9v1h-9zM1765 883h6v1h-6zM1775 883h4v1h-4zM1780 883h5v1h-5zM1786 883h5v1h-5zM1749 887h3v1h-3zM1753 887h2v1h-2zM1759 887h9v1h-9zM1768 887h1v1h-1zM1749 889h6v1h-6zM1759 889h2v1h-2zM1762 889h4v1h-4zM1767 889h4v1h-4zM1772 889h3v1h-3zM1749 891h6v1h-6zM1759 891h5v1h-5zM1765 891h2v1h-2zM1767 891h4v1h-4zM1772 891h4v1h-4zM1777 891h2v1h-2zM1749 893h6v1h-6zM1757 893h4v1h-4zM1762 893h7v1h-7zM1749 897h9v1h-9zM1758 897h2v1h-2zM1753 901h2v1h-2zM1755 901h7v1h-7zM1763 901h6v1h-6zM1769 901h7v1h-7zM1777 901h4v1h-4zM1753 905h6v1h-6zM1753 909h2v1h-2zM1792 913h5v1h-5zM1749 923h2v1h-2zM1752 923h2v1h-2zM1755 923h4v1h-4zM1762 923h7v1h-7zM1769 923h4v1h-4zM1773 923h3v1h-3zM1777 923h3v1h-3zM1749 925h5v1h-5zM1748 929h6v1h-6zM1749 931h3v1h-3zM1749 937h3v1h-3zM1746 947h1v1h-1zM1741 949h2v1h-2zM1743 949h5v1h-5zM1753 949h1v1h-1zM1733 961h3v1h-3zM1737 961h2v1h-2zM1785 961h5v1h-5zM1790 961h4v1h-4zM1795 961h1v1h-1zM1743 965h8v1h-8zM1742 967h3v1h-3zM1746 967h4v1h-4zM1744 975h7v1h-7zM1741 977h4v1h-4zM1746 977h3v1h-3zM1763 977h6v1h-6zM1770 977h1v1h-1zM1746 979h8v1h-8zM1756 979h2v1h-2zM1759 979h2v1h-2zM1762 979h2v1h-2zM1746 981h8v1h-8zM1754 981h2v1h-2zM1755 983h8v1h-8zM1764 983h2v1h-2zM1768 983h3v1h-3zM1771 983h8v1h-8zM1749 987h7v1h-7zM1757 987h2v1h-2zM1760 987h1v1h-1zM1749 1011h6v1h-6zM1755 1011h6v1h-6zM1747 277h20v1h-20zM1745 281h7v1h-7zM1757 281h5v1h-5zM1746 289h5v1h-5zM1747 297h10v1h-10zM1766 297h11v1h-11zM1795 297h5v1h-5zM1745 299h10v1h-10zM1770 307h5v1h-5zM1777 307h3v1h-3zM1747 139h20v1h-20z" fill="#9cdcfe" fill-opacity="0.3"/><path d="M1781 96h8v1h-8zM1790 96h1v1h-1zM1741 432h6v1h-6zM1768 462h6v1h-6zM1774 462h4v1h-4zM1780 470h3v1h-3zM1784 470h2v1h-2zM1769 476h6v1h-6zM1768 482h5v1h-5zM1769 488h2v1h-2zM1772 488h3v1h-3zM1779 570h8v1h-8zM1788 570h1v1h-1zM1761 762h6v1h-6zM1768 762h3v1h-3zM1760 764h2v1h-2zM1763 764h6v1h-6zM1756 840h4v1h-4zM1761 840h5v1h-5zM1757 966h7v1h-7zM1765 966h2v1h-2zM1758 974h7v1h-7zM1774 138h10v1h-10z" fill="#4ec9b0" fill-opacity="0.56"/><path d="M1781 97h8v1h-8zM1790 97h1v1h-1zM1741 433h6v1h-6zM1768 463h6v1h-6zM1774 463h4v1h-4zM1780 471h3v1h-3zM1784 471h2v1h-2zM1769 477h6v1h-6zM1768 483h5v1h-5zM1769 489h2v1h-2zM1772 489h3v1h-3zM1779 571h8v1h-8zM1788 571h1v1h-1zM1761 763h6v1h-6zM1768 763h3v1h-3zM1760 765h2v1h-2zM1763 765h6v1h-6zM1756 841h4v1h-4zM1761 841h5v1h-5zM1757 967h7v1h-7zM1765 967h2v1h-2zM1758 975h7v1h-7zM1774 139h10v1h-10z" fill="#4ec9b0" fill-opacity="0.3"/><path d="M1791 96h8v1h-8zM1748 356h4v1h-4zM1740 366h3v1h-3zM1744 366h1v1h-1zM1751 384h4v1h-4zM1763 400h3v1h-3zM1762 404h5v1h-5zM1767 404h3v1h-3zM1792 420h3v1h-3zM1796 420h4v1h-4zM1748 432h4v1h-4zM1779 462h7v1h-7zM1787 462h1v1h-1zM1768 558h2v1h-2zM1771 558h6v1h-6zM1778 558h2v1h-2zM1780 558h3v1h-3zM1790 570h8v1h-8zM1765 730h2v1h-2zM1767 730h5v1h-5zM1773 730h8v1h-8zM1782 730h6v1h-6zM1789 730h4v1h-4zM1794 730h1v1h-1zM1751 736h3v1h-3zM1743 748h4v1h-4zM1772 762h7v1h-7zM1770 764h6v1h-6zM1777 764h2v1h-2zM1749 766h2v1h-2zM1752 766h1v1h-1zM1739 834h4v1h-4zM1744 844h7v1h-7zM1751 844h6v1h-6zM1758 844h2v1h-2zM1761 872h5v1h-5zM1756 908h3v1h-3zM1752 930h4v1h-4zM1752 936h4v1h-4zM1743 942h3v1h-3zM1775 942h3v1h-3zM1749 948h3v1h-3zM1740 960h2v1h-2zM1743 960h1v1h-1zM1767 974h5v1h-5zM1773 974h2v1h-2zM1750 976h4v1h-4zM1754 976h7v1h-7zM1773 976h4v1h-4zM1765 978h6v1h-6zM1771 978h5v1h-5zM1762 986h3v1h-3zM1761 1010h3v1h-3zM1768 276h4v1h-4zM1753 280h3v1h-3zM1778 296h3v1h-3zM1763 306h6v1h-6z" fill="#dcdcaa" fill-opacity="0.56"/><path d="M1791 97h8v1h-8zM1748 357h4v1h-4zM1740 367h3v1h-3zM1744 367h1v1h-1zM1751 385h4v1h-4zM1763 401h3v1h-3zM1762 405h5v1h-5zM1767 405h3v1h-3zM1792 421h3v1h-3zM1796 421h4v1h-4zM1748 433h4v1h-4zM1779 463h7v1h-7zM1787 463h1v1h-1zM1768 559h2v1h-2zM1771 559h6v1h-6zM1778 559h2v1h-2zM1780 559h3v1h-3zM1790 571h8v1h-8zM1765 731h2v1h-2zM1767 731h5v1h-5zM1773 731h8v1h-8zM1782 731h6v1h-6zM1789 731h4v1h-4zM1794 731h1v1h-1zM1751 737h3v1h-3zM1743 749h4v1h-4zM1772 763h7v1h-7zM1770 765h6v1h-6zM1777 765h2v1h-2zM1749 767h2v1h-2zM1752 767h1v1h-1zM1739 835h4v1h-4zM1744 845h7v1h-7zM1751 845h6v1h-6zM1758 845h2v1h-2zM1761 873h5v1h-5zM1756 909h3v1h-3zM1752 931h4v1h-4zM1752 937h4v1h-4zM1743 943h3v1h-3zM1775 943h3v1h-3zM1749 949h3v1h-3zM1740 961h2v1h-2zM1743 961h1v1h-1zM1767 975h5v1h-5zM1773 975h2v1h-2zM1750 977h4v1h-4zM1754 977h7v1h-7zM1773 977h4v1h-4zM1765 979h6v1h-6zM1771 979h5v1h-5zM1762 987h3v1h-3zM1761 1011h3v1h-3zM1768 277h4v1h-4zM1753 281h3v1h-3zM1778 297h3v1h-3zM1763 307h6v1h-6z" fill="#dcdcaa" fill-opacity="0.3"/><path d="M1749 98h5v1h-5zM1755 98h6v1h-6zM1762 98h7v1h-7zM1770 98h6v1h-6zM1777 98h3v1h-3zM1781 98h8v1h-8zM1790 98h5v1h-5zM1810 106h2v1h-2zM1813 106h7v1h-7zM1821 106h7v1h-7zM1828 106h2v1h-2zM1831 106h8v1h-8zM1840 106h5v1h-5zM1775 118h5v1h-5zM1775 126h2v1h-2zM1778 126h2v1h-2zM1773 352h6v1h-6zM1780 352h6v1h-6zM1786 352h9v1h-9zM1796 352h7v1h-7zM1753 356h3v1h-3zM1757 356h2v1h-2zM1790 358h2v1h-2zM1793 358h2v1h-2zM1796 358h6v1h-6zM1803 358h5v1h-5zM1747 366h2v1h-2zM1750 366h7v1h-7zM1767 384h2v1h-2zM1769 384h8v1h-8zM1777 384h2v1h-2zM1782 416h5v1h-5zM1787 416h3v1h-3zM1810 424h8v1h-8zM1819 424h6v1h-6zM1826 424h4v1h-4zM1831 424h9v1h-9zM1841 424h4v1h-4zM1768 434h2v1h-2zM1753 468h4v1h-4zM1758 468h8v1h-8zM1767 468h3v1h-3zM1771 468h5v1h-5zM1776 468h2v1h-2zM1779 468h2v1h-2zM1782 468h1v1h-1zM1788 470h2v1h-2zM1791 470h2v1h-2zM1794 470h3v1h-3zM1798 470h6v1h-6zM1805 470h4v1h-4zM1809 470h9v1h-9zM1753 474h3v1h-3zM1757 474h4v1h-4zM1762 474h8v1h-8zM1771 474h9v1h-9zM1780 474h3v1h-3zM1776 476h6v1h-6zM1783 476h7v1h-7zM1791 476h8v1h-8zM1800 476h1v1h-1zM1753 480h9v1h-9zM1763 480h5v1h-5zM1769 480h5v1h-5zM1775 480h2v1h-2zM1778 480h5v1h-5zM1775 482h7v1h-7zM1783 482h5v1h-5zM1789 482h5v1h-5zM1795 482h6v1h-6zM1753 486h3v1h-3zM1757 486h9v1h-9zM1767 486h4v1h-4zM1772 486h2v1h-2zM1775 486h2v1h-2zM1778 486h5v1h-5zM1778 488h7v1h-7zM1785 488h9v1h-9zM1795 488h3v1h-3zM1798 488h6v1h-6zM1759 502h5v1h-5zM1764 502h2v1h-2zM1767 502h5v1h-5zM1764 504h3v1h-3zM1767 504h8v1h-8zM1775 504h3v1h-3zM1779 504h3v1h-3zM1763 506h4v1h-4zM1768 506h3v1h-3zM1758 508h2v1h-2zM1761 508h6v1h-6zM1768 508h4v1h-4zM1758 518h3v1h-3zM1762 518h8v1h-8zM1770 518h2v1h-2zM1806 560h9v1h-9zM1815 560h3v1h-3zM1819 560h8v1h-8zM1828 560h5v1h-5zM1834 560h8v1h-8zM1842 560h3v1h-3zM1745 572h4v1h-4zM1749 572h6v1h-6zM1756 572h9v1h-9zM1766 572h7v1h-7zM1774 572h8v1h-8zM1783 572h5v1h-5zM1789 572h2v1h-2zM1800 584h7v1h-7zM1808 584h3v1h-3zM1812 584h8v1h-8zM1820 584h5v1h-5zM1826 584h3v1h-3zM1830 584h8v1h-8zM1839 584h6v1h-6zM1783 718h5v1h-5zM1794 720h5v1h-5zM1798 732h2v1h-2zM1801 732h4v1h-4zM1806 732h6v1h-6zM1813 732h3v1h-3zM1816 732h2v1h-2zM1757 736h5v1h-5zM1786 738h7v1h-7zM1794 738h4v1h-4zM1799 738h1v1h-1zM1749 748h8v1h-8zM1797 756h4v1h-4zM1802 756h9v1h-9zM1812 756h3v1h-3zM1787 766h5v1h-5zM1792 766h8v1h-8zM1800 766h3v1h-3zM1804 766h5v1h-5zM1810 766h2v1h-2zM1813 766h2v1h-2zM1794 824h4v1h-4zM1798 824h6v1h-6zM1805 824h1v1h-1zM1745 834h5v1h-5zM1750 834h3v1h-3zM1753 834h5v1h-5zM1759 834h8v1h-8zM1767 834h5v1h-5zM1773 834h7v1h-7zM1779 840h2v1h-2zM1782 840h2v1h-2zM1785 840h4v1h-4zM1753 848h6v1h-6zM1760 848h4v1h-4zM1765 848h2v1h-2zM1768 848h3v1h-3zM1771 848h7v1h-7zM1779 848h3v1h-3zM1783 848h3v1h-3zM1787 848h2v1h-2zM1790 848h4v1h-4zM1795 848h3v1h-3zM1799 848h8v1h-8zM1808 848h4v1h-4zM1813 848h8v1h-8zM1822 848h7v1h-7zM1830 848h5v1h-5zM1836 848h3v1h-3zM1840 848h1v1h-1zM1753 850h4v1h-4zM1758 850h6v1h-6zM1765 850h8v1h-8zM1774 850h4v1h-4zM1779 850h9v1h-9zM1789 850h7v1h-7zM1796 850h2v1h-2zM1799 850h9v1h-9zM1808 850h4v1h-4zM1812 850h7v1h-7zM1820 850h7v1h-7zM1828 850h8v1h-8zM1837 850h2v1h-2zM1839 850h4v1h-4zM1753 852h6v1h-6zM1760 852h2v1h-2zM1762 852h7v1h-7zM1770 852h7v1h-7zM1777 852h6v1h-6zM1783 852h6v1h-6zM1790 852h7v1h-7zM1798 852h6v1h-6zM1805 852h5v1h-5zM1811 852h8v1h-8zM1820 852h5v1h-5zM1825 852h2v1h-2zM1827 852h4v1h-4zM1832 852h5v1h-5zM1753 854h7v1h-7zM1761 854h6v1h-6zM1768 854h7v1h-7zM1776 854h2v1h-2zM1779 854h4v1h-4zM1783 854h4v1h-4zM1787 854h2v1h-2zM1790 854h9v1h-9zM1799 854h9v1h-9zM1809 854h5v1h-5zM1815 854h7v1h-7zM1823 854h3v1h-3zM1827 854h2v1h-2zM1829 854h2v1h-2zM1832 854h3v1h-3zM1836 854h9v1h-9zM1753 856h5v1h-5zM1758 856h8v1h-8zM1767 856h9v1h-9zM1776 856h6v1h-6zM1783 856h9v1h-9zM1793 856h7v1h-7zM1801 856h6v1h-6zM1808 856h7v1h-7zM1816 856h3v1h-3zM1820 856h3v1h-3zM1824 856h8v1h-8zM1833 856h5v1h-5zM1753 858h7v1h-7zM1760 858h3v1h-3zM1764 858h2v1h-2zM1767 858h8v1h-8zM1776 858h4v1h-4zM1781 858h3v1h-3zM1785 858h6v1h-6zM1791 858h7v1h-7zM1799 858h2v1h-2zM1802 858h8v1h-8zM1811 858h3v1h-3zM1814 858h5v1h-5zM1820 858h7v1h-7zM1828 858h4v1h-4zM1833 858h2v1h-2zM1836 858h4v1h-4zM1841 858h2v1h-2zM1753 860h4v1h-4zM1758 860h3v1h-3zM1761 860h7v1h-7zM1769 860h2v1h-2zM1772 860h2v1h-2zM1774 860h5v1h-5zM1780 860h4v1h-4zM1785 860h4v1h-4zM1790 860h9v1h-9zM1799 860h8v1h-8zM1808 860h6v1h-6zM1815 860h5v1h-5zM1821 860h9v1h-9zM1831 860h2v1h-2zM1833 860h4v1h-4zM1838 860h3v1h-3zM1753 862h5v1h-5zM1759 862h4v1h-4zM1764 862h4v1h-4zM1768 862h5v1h-5zM1773 862h3v1h-3zM1777 862h5v1h-5zM1783 862h8v1h-8zM1791 862h2v1h-2zM1794 862h2v1h-2zM1797 862h3v1h-3zM1800 862h8v1h-8zM1809 862h8v1h-8zM1753 864h5v1h-5zM1758 864h7v1h-7zM1766 864h5v1h-5zM1771 864h5v1h-5zM1777 864h8v1h-8zM1786 864h8v1h-8zM1795 864h4v1h-4zM1800 864h9v1h-9zM1810 864h5v1h-5zM1816 864h3v1h-3zM1820 864h4v1h-4zM1825 864h3v1h-3zM1768 872h4v1h-4zM1770 892h2v1h-2zM1773 892h2v1h-2zM1775 892h7v1h-7zM1783 892h5v1h-5zM1761 912h6v1h-6zM1768 912h6v1h-6zM1775 912h7v1h-7zM1783 912h4v1h-4zM1759 930h5v1h-5zM1764 930h3v1h-3zM1772 930h4v1h-4zM1776 930h1v1h-1zM1759 936h8v1h-8zM1775 936h5v1h-5zM1780 936h7v1h-7zM1788 936h5v1h-5zM1794 936h4v1h-4zM1799 936h5v1h-5zM1747 942h5v1h-5zM1753 942h1v1h-1zM1779 942h5v1h-5zM1746 960h2v1h-2zM1749 960h7v1h-7zM1757 960h3v1h-3zM1760 960h8v1h-8zM1769 960h9v1h-9zM1779 960h3v1h-3zM1780 966h4v1h-4zM1785 966h5v1h-5zM1750 984h3v1h-3zM1753 988h1v1h-1zM1753 990h7v1h-7zM1761 990h3v1h-3zM1753 992h5v1h-5zM1759 992h8v1h-8zM1753 994h3v1h-3zM1757 994h7v1h-7zM1753 996h8v1h-8zM1762 996h3v1h-3zM1753 998h2v1h-2zM1756 998h6v1h-6zM1763 998h2v1h-2zM1753 1000h2v1h-2zM1756 1000h8v1h-8zM1765 1000h2v1h-2zM1753 1002h9v1h-9zM1763 1002h5v1h-5zM1750 1008h3v1h-3zM1753 1012h1v1h-1zM1753 1014h8v1h-8zM1762 1014h3v1h-3zM1753 1016h6v1h-6zM1760 1016h3v1h-3zM1764 1016h3v1h-3zM1753 1018h7v1h-7zM1761 1018h3v1h-3zM1753 1020h8v1h-8zM1762 1020h3v1h-3zM1753 1022h2v1h-2zM1756 1022h5v1h-5zM1762 1022h3v1h-3zM1753 1024h6v1h-6zM1760 1024h7v1h-7zM1753 1026h7v1h-7zM1760 1026h2v1h-2zM1763 1026h5v1h-5zM1753 1028h7v1h-7zM1761 1028h2v1h-2zM1764 1028h7v1h-7zM1781 262h5v1h-5zM1791 264h5v1h-5zM1767 286h16v1h-16zM1800 286h15v1h-15zM1789 290h7v1h-7zM1797 290h7v1h-7zM1805 290h2v1h-2zM1808 290h5v1h-5zM1814 290h10v1h-10zM1782 296h11v1h-11zM1801 296h1v1h-1zM1789 300h7v1h-7zM1797 300h7v1h-7zM1805 300h7v1h-7zM1813 300h6v1h-6z" fill="#ce9178" fill-opacity="0.56"/><path d="M1749 99h5v1h-5zM1755 99h6v1h-6zM1762 99h7v1h-7zM1770 99h6v1h-6zM1777 99h3v1h-3zM1781 99h8v1h-8zM1790 99h5v1h-5zM1810 107h2v1h-2zM1813 107h7v1h-7zM1821 107h7v1h-7zM1828 107h2v1h-2zM1831 107h8v1h-8zM1840 107h5v1h-5zM1775 119h5v1h-5zM1775 127h2v1h-2zM1778 127h2v1h-2zM1773 353h6v1h-6zM1780 353h6v1h-6zM1786 353h9v1h-9zM1796 353h7v1h-7zM1753 357h3v1h-3zM1757 357h2v1h-2zM1790 359h2v1h-2zM1793 359h2v1h-2zM1796 359h6v1h-6zM1803 359h5v1h-5zM1747 367h2v1h-2zM1750 367h7v1h-7zM1767 385h2v1h-2zM1769 385h8v1h-8zM1777 385h2v1h-2zM1782 417h5v1h-5zM1787 417h3v1h-3zM1810 425h8v1h-8zM1819 425h6v1h-6zM1826 425h4v1h-4zM1831 425h9v1h-9zM1841 425h4v1h-4zM1768 435h2v1h-2zM1753 469h4v1h-4zM1758 469h8v1h-8zM1767 469h3v1h-3zM1771 469h5v1h-5zM1776 469h2v1h-2zM1779 469h2v1h-2zM1782 469h1v1h-1zM1788 471h2v1h-2zM1791 471h2v1h-2zM1794 471h3v1h-3zM1798 471h6v1h-6zM1805 471h4v1h-4zM1809 471h9v1h-9zM1753 475h3v1h-3zM1757 475h4v1h-4zM1762 475h8v1h-8zM1771 475h9v1h-9zM1780 475h3v1h-3zM1776 477h6v1h-6zM1783 477h7v1h-7zM1791 477h8v1h-8zM1800 477h1v1h-1zM1753 481h9v1h-9zM1763 481h5v1h-5zM1769 481h5v1h-5zM1775 481h2v1h-2zM1778 481h5v1h-5zM1775 483h7v1h-7zM1783 483h5v1h-5zM1789 483h5v1h-5zM1795 483h6v1h-6zM1753 487h3v1h-3zM1757 487h9v1h-9zM1767 487h4v1h-4zM1772 487h2v1h-2zM1775 487h2v1h-2zM1778 487h5v1h-5zM1778 489h7v1h-7zM1785 489h9v1h-9zM1795 489h3v1h-3zM1798 489h6v1h-6zM1759 503h5v1h-5zM1764 503h2v1h-2zM1767 503h5v1h-5zM1764 505h3v1h-3zM1767 505h8v1h-8zM1775 505h3v1h-3zM1779 505h3v1h-3zM1763 507h4v1h-4zM1768 507h3v1h-3zM1758 509h2v1h-2zM1761 509h6v1h-6zM1768 509h4v1h-4zM1758 519h3v1h-3zM1762 519h8v1h-8zM1770 519h2v1h-2zM1806 561h9v1h-9zM1815 561h3v1h-3zM1819 561h8v1h-8zM1828 561h5v1h-5zM1834 561h8v1h-8zM1842 561h3v1h-3zM1745 573h4v1h-4zM1749 573h6v1h-6zM1756 573h9v1h-9zM1766 573h7v1h-7zM1774 573h8v1h-8zM1783 573h5v1h-5zM1789 573h2v1h-2zM1800 585h7v1h-7zM1808 585h3v1h-3zM1812 585h8v1h-8zM1820 585h5v1h-5zM1826 585h3v1h-3zM1830 585h8v1h-8zM1839 585h6v1h-6zM1783 719h5v1h-5zM1794 721h5v1h-5zM1798 733h2v1h-2zM1801 733h4v1h-4zM1806 733h6v1h-6zM1813 733h3v1h-3zM1816 733h2v1h-2zM1757 737h5v1h-5zM1786 739h7v1h-7zM1794 739h4v1h-4zM1799 739h1v1h-1zM1749 749h8v1h-8zM1797 757h4v1h-4zM1802 757h9v1h-9zM1812 757h3v1h-3zM1787 767h5v1h-5zM1792 767h8v1h-8zM1800 767h3v1h-3zM1804 767h5v1h-5zM1810 767h2v1h-2zM1813 767h2v1h-2zM1794 825h4v1h-4zM1798 825h6v1h-6zM1805 825h1v1h-1zM1745 835h5v1h-5zM1750 835h3v1h-3zM1753 835h5v1h-5zM1759 835h8v1h-8zM1767 835h5v1h-5zM1773 835h7v1h-7zM1779 841h2v1h-2zM1782 841h2v1h-2zM1785 841h4v1h-4zM1753 849h6v1h-6zM1760 849h4v1h-4zM1765 849h2v1h-2zM1768 849h3v1h-3zM1771 849h7v1h-7zM1779 849h3v1h-3zM1783 849h3v1h-3zM1787 849h2v1h-2zM1790 849h4v1h-4zM1795 849h3v1h-3zM1799 849h8v1h-8zM1808 849h4v1h-4zM1813 849h8v1h-8zM1822 849h7v1h-7zM1830 849h5v1h-5zM1836 849h3v1h-3zM1840 849h1v1h-1zM1753 851h4v1h-4zM1758 851h6v1h-6zM1765 851h8v1h-8zM1774 851h4v1h-4zM1779 851h9v1h-9zM1789 851h7v1h-7zM1796 851h2v1h-2zM1799 851h9v1h-9zM1808 851h4v1h-4zM1812 851h7v1h-7zM1820 851h7v1h-7zM1828 851h8v1h-8zM1837 851h2v1h-2zM1839 851h4v1h-4zM1753 853h6v1h-6zM1760 853h2v1h-2zM1762 853h7v1h-7zM1770 853h7v1h-7zM1777 853h6v1h-6zM1783 853h6v1h-6zM1790 853h7v1h-7zM1798 853h6v1h-6zM1805 853h5v1h-5zM1811 853h8v1h-8zM1820 853h5v1h-5zM1825 853h2v1h-2zM1827 853h4v1h-4zM1832 853h5v1h-5zM1753 855h7v1h-7zM1761 855h6v1h-6zM1768 855h7v1h-7zM1776 855h2v1h-2zM1779 855h4v1h-4zM1783 855h4v1h-4zM1787 855h2v1h-2zM1790 855h9v1h-9zM1799 855h9v1h-9zM1809 855h5v1h-5zM1815 855h7v1h-7zM1823 855h3v1h-3zM1827 855h2v1h-2zM1829 855h2v1h-2zM1832 855h3v1h-3zM1836 855h9v1h-9zM1753 857h5v1h-5zM1758 857h8v1h-8zM1767 857h9v1h-9zM1776 857h6v1h-6zM1783 857h9v1h-9zM1793 857h7v1h-7zM1801 857h6v1h-6zM1808 857h7v1h-7zM1816 857h3v1h-3zM1820 857h3v1h-3zM1824 857h8v1h-8zM1833 857h5v1h-5zM1753 859h7v1h-7zM1760 859h3v1h-3zM1764 859h2v1h-2zM1767 859h8v1h-8zM1776 859h4v1h-4zM1781 859h3v1h-3zM1785 859h6v1h-6zM1791 859h7v1h-7zM1799 859h2v1h-2zM1802 859h8v1h-8zM1811 859h3v1h-3zM1814 859h5v1h-5zM1820 859h7v1h-7zM1828 859h4v1h-4zM1833 859h2v1h-2zM1836 859h4v1h-4zM1841 859h2v1h-2zM1753 861h4v1h-4zM1758 861h3v1h-3zM1761 861h7v1h-7zM1769 861h2v1h-2zM1772 861h2v1h-2zM1774 861h5v1h-5zM1780 861h4v1h-4zM1785 861h4v1h-4zM1790 861h9v1h-9zM1799 861h8v1h-8zM1808 861h6v1h-6zM1815 861h5v1h-5zM1821 861h9v1h-9zM1831 861h2v1h-2zM1833 861h4v1h-4zM1838 861h3v1h-3zM1753 863h5v1h-5zM1759 863h4v1h-4zM1764 863h4v1h-4zM1768 863h5v1h-5zM1773 863h3v1h-3zM1777 863h5v1h-5zM1783 863h8v1h-8zM1791 863h2v1h-2zM1794 863h2v1h-2zM1797 863h3v1h-3zM1800 863h8v1h-8zM1809 863h8v1h-8zM1753 865h5v1h-5zM1758 865h7v1h-7zM1766 865h5v1h-5zM1771 865h5v1h-5zM1777 865h8v1h-8zM1786 865h8v1h-8zM1795 865h4v1h-4zM1800 865h9v1h-9zM1810 865h5v1h-5zM1816 865h3v1h-3zM1820 865h4v1h-4zM1825 865h3v1h-3zM1768 873h4v1h-4zM1770 893h2v1h-2zM1773 893h2v1h-2zM1775 893h7v1h-7zM1783 893h5v1h-5zM1761 913h6v1h-6zM1768 913h6v1h-6zM1775 913h7v1h-7zM1783 913h4v1h-4zM1759 931h5v1h-5zM1764 931h3v1h-3zM1772 931h4v1h-4zM1776 931h1v1h-1zM1759 937h8v1h-8zM1775 937h5v1h-5zM1780 937h7v1h-7zM1788 937h5v1h-5zM1794 937h4v1h-4zM1799 937h5v1h-5zM1747 943h5v1h-5zM1753 943h1v1h-1zM1779 943h5v1h-5zM1746 961h2v1h-2zM1749 961h7v1h-7zM1757 961h3v1h-3zM1760 961h8v1h-8zM1769 961h9v1h-9zM1779 961h3v1h-3zM1780 967h4v1h-4zM1785 967h5v1h-5zM1750 985h3v1h-3zM1753 989h1v1h-1zM1753 991h7v1h-7zM1761 991h3v1h-3zM1753 993h5v1h-5zM1759 993h8v1h-8zM1753 995h3v1h-3zM1757 995h7v1h-7zM1753 997h8v1h-8zM1762 997h3v1h-3zM1753 999h2v1h-2zM1756 999h6v1h-6zM1763 999h2v1h-2zM1753 1001h2v1h-2zM1756 1001h8v1h-8zM1765 1001h2v1h-2zM1753 1003h9v1h-9zM1763 1003h5v1h-5zM1750 1009h3v1h-3zM1753 1013h1v1h-1zM1753 1015h8v1h-8zM1762 1015h3v1h-3zM1753 1017h6v1h-6zM1760 1017h3v1h-3zM1764 1017h3v1h-3zM1753 1019h7v1h-7zM1761 1019h3v1h-3zM1753 1021h8v1h-8zM1762 1021h3v1h-3zM1753 1023h2v1h-2zM1756 1023h5v1h-5zM1762 1023h3v1h-3zM1753 1025h6v1h-6zM1760 1025h7v1h-7zM1753 1027h7v1h-7zM1760 1027h2v1h-2zM1763 1027h5v1h-5zM1753 1029h7v1h-7zM1761 1029h2v1h-2zM1764 1029h7v1h-7zM1781 263h5v1h-5zM1791 265h5v1h-5zM1767 287h16v1h-16zM1800 287h15v1h-15zM1789 291h7v1h-7zM1797 291h7v1h-7zM1805 291h2v1h-2zM1808 291h5v1h-5zM1814 291h10v1h-10zM1782 297h11v1h-11zM1801 297h1v1h-1zM1789 301h7v1h-7zM1797 301h7v1h-7zM1805 301h7v1h-7zM1813 301h6v1h-6z" fill="#ce9178" fill-opacity="0.3"/><path d="M1747 104h1v1h-1zM1772 104h1v1h-1zM1745 108h1v1h-1zM1741 110h1v1h-1zM1743 118h1v1h-1zM1781 118h2v1h-2zM1741 122h1v1h-1zM1743 126h1v1h-1zM1781 126h2v1h-2zM1741 130h1v1h-1zM1737 354h1v1h-1zM1752 356h1v1h-1zM1780 356h2v1h-2zM1737 362h1v1h-1zM1733 364h1v1h-1zM1746 366h1v1h-1zM1741 370h2v1h-2zM1744 378h1v1h-1zM1753 378h1v1h-1zM1756 384h1v1h-1zM1779 384h2v1h-2zM1748 390h1v1h-1zM1776 390h1v1h-1zM1745 394h1v1h-1zM1766 400h1v1h-1zM1741 412h1v1h-1zM1743 416h1v1h-1zM1790 416h1v1h-1zM1741 428h1v1h-1zM1753 432h1v1h-1zM1747 434h1v1h-1zM1770 434h1v1h-1zM1743 440h1v1h-1zM1789 462h2v1h-2zM1787 470h1v1h-1zM1775 476h1v1h-1zM1774 482h1v1h-1zM1776 488h1v1h-1zM1743 526h1v1h-1zM1744 556h1v1h-1zM1747 558h1v1h-1zM1737 568h1v1h-1zM1785 568h2v1h-2zM1798 570h2v1h-2zM1741 576h1v1h-1zM1741 582h1v1h-1zM1763 582h1v1h-1zM1741 586h1v1h-1zM1737 588h1v1h-1zM1768 592h1v1h-1zM1795 730h1v1h-1zM1837 730h2v1h-2zM1739 734h1v1h-1zM1745 734h1v1h-1zM1752 734h1v1h-1zM1754 734h1v1h-1zM1755 736h1v1h-1zM1782 736h2v1h-2zM1739 742h1v1h-1zM1734 744h1v1h-1zM1747 748h1v1h-1zM1745 750h1v1h-1zM1747 754h1v1h-1zM1766 754h2v1h-2zM1745 758h1v1h-1zM1753 766h1v1h-1zM1741 822h1v1h-1zM1741 826h1v1h-1zM1737 828h1v1h-1zM1744 834h1v1h-1zM1767 840h1v1h-1zM1790 840h1v1h-1zM1740 842h1v1h-1zM1761 844h1v1h-1zM1751 846h1v1h-1zM1761 846h1v1h-1zM1751 866h1v1h-1zM1766 872h1v1h-1zM1773 872h2v1h-2zM1749 882h1v1h-1zM1792 882h3v1h-3zM1752 900h1v1h-1zM1760 908h1v1h-1zM1753 914h1v1h-1zM1749 918h1v1h-1zM1745 920h1v1h-1zM1747 922h1v1h-1zM1781 922h2v1h-2zM1745 926h1v1h-1zM1747 928h1v1h-1zM1755 928h2v1h-2zM1757 930h1v1h-1zM1745 934h1v1h-1zM1752 934h1v1h-1zM1757 936h1v1h-1zM1745 940h1v1h-1zM1741 942h2v1h-2zM1746 942h1v1h-1zM1737 946h1v1h-1zM1745 946h1v1h-1zM1748 946h2v1h-2zM1752 948h1v1h-1zM1755 948h2v1h-2zM1737 950h1v1h-1zM1745 960h1v1h-1zM1768 966h1v1h-1zM1790 966h1v1h-1zM1740 970h1v1h-1zM1775 974h3v1h-3zM1762 976h1v1h-1zM1771 976h1v1h-1zM1777 976h1v1h-1zM1778 978h1v1h-1zM1782 978h2v1h-2zM1760 980h3v1h-3zM1750 982h1v1h-1zM1779 982h2v1h-2zM1766 986h1v1h-1zM1765 1010h1v1h-1zM1742 270h1v1h-1zM1744 274h1v1h-1zM1741 278h1v1h-1zM1747 278h1v1h-1zM1753 278h2v1h-2zM1741 282h1v1h-1zM1766 286h1v1h-1zM1783 286h1v1h-1zM1799 286h1v1h-1zM1815 286h1v1h-1zM1744 288h1v1h-1zM1751 288h1v1h-1zM1753 288h1v1h-1zM1741 292h1v1h-1zM1781 296h1v1h-1zM1802 296h1v1h-1zM1744 298h1v1h-1zM1755 298h1v1h-1zM1757 298h1v1h-1zM1741 302h1v1h-1zM1769 306h1v1h-1zM1791 306h1v1h-1zM1784 138h1v1h-1z" fill="#b0a070" fill-opacity="0.56"/><path d="M1747 105h1v1h-1zM1772 105h1v1h-1zM1745 109h1v1h-1zM1741 111h1v1h-1zM1743 119h1v1h-1zM1781 119h2v1h-2zM1741 123h1v1h-1zM1743 127h1v1h-1zM1781 127h2v1h-2zM1741 131h1v1h-1zM1737 355h1v1h-1zM1752 357h1v1h-1zM1780 357h2v1h-2zM1737 363h1v1h-1zM1733 365h1v1h-1zM1746 367h1v1h-1zM1741 371h2v1h-2zM1744 379h1v1h-1zM1753 379h1v1h-1zM1756 385h1v1h-1zM1779 385h2v1h-2zM1748 391h1v1h-1zM1776 391h1v1h-1zM1745 395h1v1h-1zM1766 401h1v1h-1zM1741 413h1v1h-1zM1743 417h1v1h-1zM1790 417h1v1h-1zM1741 429h1v1h-1zM1753 433h1v1h-1zM1747 435h1v1h-1zM1770 435h1v1h-1zM1743 441h1v1h-1zM1789 463h2v1h-2zM1787 471h1v1h-1zM1775 477h1v1h-1zM1774 483h1v1h-1zM1776 489h1v1h-1zM1743 527h1v1h-1zM1744 557h1v1h-1zM1747 559h1v1h-1zM1737 569h1v1h-1zM1785 569h2v1h-2zM1798 571h2v1h-2zM1741 577h1v1h-1zM1741 583h1v1h-1zM1763 583h1v1h-1zM1741 587h1v1h-1zM1737 589h1v1h-1zM1768 593h1v1h-1zM1795 731h1v1h-1zM1837 731h2v1h-2zM1739 735h1v1h-1zM1745 735h1v1h-1zM1752 735h1v1h-1zM1754 735h1v1h-1zM1755 737h1v1h-1zM1782 737h2v1h-2zM1739 743h1v1h-1zM1734 745h1v1h-1zM1747 749h1v1h-1zM1745 751h1v1h-1zM1747 755h1v1h-1zM1766 755h2v1h-2zM1745 759h1v1h-1zM1753 767h1v1h-1zM1741 823h1v1h-1zM1741 827h1v1h-1zM1737 829h1v1h-1zM1744 835h1v1h-1zM1767 841h1v1h-1zM1790 841h1v1h-1zM1740 843h1v1h-1zM1761 845h1v1h-1zM1751 847h1v1h-1zM1761 847h1v1h-1zM1751 867h1v1h-1zM1766 873h1v1h-1zM1773 873h2v1h-2zM1749 883h1v1h-1zM1792 883h3v1h-3zM1752 901h1v1h-1zM1760 909h1v1h-1zM1753 915h1v1h-1zM1749 919h1v1h-1zM1745 921h1v1h-1zM1747 923h1v1h-1zM1781 923h2v1h-2zM1745 927h1v1h-1zM1747 929h1v1h-1zM1755 929h2v1h-2zM1757 931h1v1h-1zM1745 935h1v1h-1zM1752 935h1v1h-1zM1757 937h1v1h-1zM1745 941h1v1h-1zM1741 943h2v1h-2zM1746 943h1v1h-1zM1737 947h1v1h-1zM1745 947h1v1h-1zM1748 947h2v1h-2zM1752 949h1v1h-1zM1755 949h2v1h-2zM1737 951h1v1h-1zM1745 961h1v1h-1zM1768 967h1v1h-1zM1790 967h1v1h-1zM1740 971h1v1h-1zM1775 975h3v1h-3zM1762 977h1v1h-1zM1771 977h1v1h-1zM1777 977h1v1h-1zM1778 979h1v1h-1zM1782 979h2v1h-2zM1760 981h3v1h-3zM1750 983h1v1h-1zM1779 983h2v1h-2zM1766 987h1v1h-1zM1765 1011h1v1h-1zM1742 271h1v1h-1zM1744 275h1v1h-1zM1741 279h1v1h-1zM1747 279h1v1h-1zM1753 279h2v1h-2zM1741 283h1v1h-1zM1766 287h1v1h-1zM1783 287h1v1h-1zM1799 287h1v1h-1zM1815 287h1v1h-1zM1744 289h1v1h-1zM1751 289h1v1h-1zM1753 289h1v1h-1zM1741 293h1v1h-1zM1781 297h1v1h-1zM1802 297h1v1h-1zM1744 299h1v1h-1zM1755 299h1v1h-1zM1757 299h1v1h-1zM1741 303h1v1h-1zM1769 307h1v1h-1zM1791 307h1v1h-1zM1784 139h1v1h-1z" fill="#b0a070" fill-opacity="0.3"/><path d="M1777 106h3v1h-3zM1756 358h3v1h-3zM1777 424h3v1h-3zM1776 560h2v1h-2zM1771 584h3v1h-3zM1771 732h2v1h-2zM1773 732h1v1h-1zM1757 738h3v1h-3zM1773 756h3v1h-3zM1755 824h3v1h-3zM1780 890h2v1h-2zM1780 978h1v1h-1zM1761 290h3v1h-3zM1779 290h1v1h-1zM1761 300h3v1h-3zM1779 300h1v1h-1z" fill="#b5cea8" fill-opacity="0.56"/><path d="M1777 107h3v1h-3zM1756 359h3v1h-3zM1777 425h3v1h-3zM1776 561h2v1h-2zM1771 585h3v1h-3zM1771 733h2v1h-2zM1773 733h1v1h-1zM1757 739h3v1h-3zM1773 757h3v1h-3zM1755 825h3v1h-3zM1780 891h2v1h-2zM1780 979h1v1h-1zM1761 291h3v1h-3zM1779 291h1v1h-1zM1761 301h3v1h-3zM1779 301h1v1h-1z" fill="#b5cea8" fill-opacity="0.3"/><path d="M1788 106h1v1h-1zM1764 144h1v1h-1zM1745 188h1v1h-1zM1762 190h1v1h-1zM1745 204h1v1h-1zM1764 206h1v1h-1zM1745 212h1v1h-1zM1791 424h1v1h-1zM1758 466h1v1h-1zM1786 468h1v1h-1zM1753 472h1v1h-1zM1786 474h1v1h-1zM1753 478h1v1h-1zM1785 480h1v1h-1zM1753 484h1v1h-1zM1785 486h1v1h-1zM1753 490h1v1h-1zM1749 494h1v1h-1zM1760 500h1v1h-1zM1749 510h1v1h-1zM1757 516h1v1h-1zM1749 522h1v1h-1zM1745 524h1v1h-1zM1788 560h1v1h-1zM1782 584h1v1h-1zM1764 596h1v1h-1zM1745 642h1v1h-1zM1762 644h1v1h-1zM1745 658h1v1h-1zM1763 660h1v1h-1zM1745 666h1v1h-1zM1771 668h1v1h-1zM1745 682h1v1h-1zM1767 686h1v1h-1zM1745 694h1v1h-1zM1766 696h1v1h-1zM1745 716h1v1h-1zM1786 732h1v1h-1zM1818 732h1v1h-1zM1785 756h1v1h-1zM1745 228h1v1h-1zM1765 232h1v1h-1zM1745 240h1v1h-1zM1764 242h1v1h-1zM1745 260h1v1h-1zM1771 290h1v1h-1zM1824 290h1v1h-1zM1771 300h1v1h-1zM1819 300h1v1h-1zM1770 214h1v1h-1z" fill="#5a9ad0" fill-opacity="0.56"/><path d="M1788 107h1v1h-1zM1764 145h1v1h-1zM1745 189h1v1h-1zM1762 191h1v1h-1zM1745 205h1v1h-1zM1764 207h1v1h-1zM1745 213h1v1h-1zM1791 425h1v1h-1zM1758 467h1v1h-1zM1786 469h1v1h-1zM1753 473h1v1h-1zM1786 475h1v1h-1zM1753 479h1v1h-1zM1785 481h1v1h-1zM1753 485h1v1h-1zM1785 487h1v1h-1zM1753 491h1v1h-1zM1749 495h1v1h-1zM1760 501h1v1h-1zM1749 511h1v1h-1zM1757 517h1v1h-1zM1749 523h1v1h-1zM1745 525h1v1h-1zM1788 561h1v1h-1zM1782 585h1v1h-1zM1764 597h1v1h-1zM1745 643h1v1h-1zM1762 645h1v1h-1zM1745 659h1v1h-1zM1763 661h1v1h-1zM1745 667h1v1h-1zM1771 669h1v1h-1zM1745 683h1v1h-1zM1767 687h1v1h-1zM1745 695h1v1h-1zM1766 697h1v1h-1zM1745 717h1v1h-1zM1786 733h1v1h-1zM1818 733h1v1h-1zM1785 757h1v1h-1zM1745 229h1v1h-1zM1765 233h1v1h-1zM1745 241h1v1h-1zM1764 243h1v1h-1zM1745 261h1v1h-1zM1771 291h1v1h-1zM1824 291h1v1h-1zM1771 301h1v1h-1zM1819 301h1v1h-1zM1770 215h1v1h-1z" fill="#5a9ad0" fill-opacity="0.3"/><path d="M1749 146h2v1h-2zM1751 146h7v1h-7zM1758 146h8v1h-8zM1766 146h4v1h-4zM1771 146h2v1h-2zM1773 146h4v1h-4zM1778 146h4v1h-4zM1749 154h5v1h-5zM1755 154h5v1h-5zM1761 154h3v1h-3zM1764 154h4v1h-4zM1768 154h7v1h-7zM1776 154h4v1h-4zM1780 154h5v1h-5zM1786 154h3v1h-3zM1790 154h9v1h-9zM1800 154h5v1h-5zM1806 154h8v1h-8zM1814 154h7v1h-7zM1786 158h6v1h-6zM1793 158h9v1h-9zM1803 158h3v1h-3zM1807 158h4v1h-4zM1812 158h3v1h-3zM1816 158h2v1h-2zM1819 158h6v1h-6zM1749 162h5v1h-5zM1755 162h4v1h-4zM1760 162h2v1h-2zM1762 162h2v1h-2zM1765 162h5v1h-5zM1771 162h5v1h-5zM1776 162h3v1h-3zM1780 162h8v1h-8zM1789 162h8v1h-8zM1797 162h6v1h-6zM1804 162h5v1h-5zM1810 162h4v1h-4zM1815 162h7v1h-7zM1822 162h4v1h-4zM1827 162h6v1h-6zM1834 162h2v1h-2zM1808 164h8v1h-8zM1817 164h6v1h-6zM1824 164h5v1h-5zM1830 164h2v1h-2zM1833 164h3v1h-3zM1837 164h2v1h-2zM1840 164h5v1h-5zM1749 166h8v1h-8zM1758 166h9v1h-9zM1768 166h4v1h-4zM1773 166h8v1h-8zM1782 166h4v1h-4zM1786 166h2v1h-2zM1788 166h5v1h-5zM1794 166h2v1h-2zM1797 166h7v1h-7zM1804 166h8v1h-8zM1812 166h2v1h-2zM1815 166h5v1h-5zM1821 166h2v1h-2zM1824 166h3v1h-3zM1828 166h3v1h-3zM1832 166h3v1h-3zM1836 166h9v1h-9zM1807 168h2v1h-2zM1810 168h3v1h-3zM1814 168h9v1h-9zM1824 168h6v1h-6zM1831 168h9v1h-9zM1841 168h4v1h-4zM1797 172h3v1h-3zM1800 172h5v1h-5zM1806 172h6v1h-6zM1813 172h3v1h-3zM1817 172h3v1h-3zM1821 172h8v1h-8zM1830 172h2v1h-2zM1833 172h2v1h-2zM1749 176h8v1h-8zM1757 176h8v1h-8zM1765 176h5v1h-5zM1771 176h2v1h-2zM1773 176h8v1h-8zM1782 176h4v1h-4zM1787 176h5v1h-5zM1749 194h3v1h-3zM1753 194h5v1h-5zM1759 194h5v1h-5zM1765 194h2v1h-2zM1768 194h6v1h-6zM1774 194h5v1h-5zM1749 200h6v1h-6zM1756 200h3v1h-3zM1760 200h5v1h-5zM1766 200h5v1h-5zM1772 200h3v1h-3zM1749 202h6v1h-6zM1756 202h9v1h-9zM1766 202h5v1h-5zM1772 202h2v1h-2zM1774 202h4v1h-4zM1778 202h2v1h-2zM1781 202h3v1h-3zM1794 208h6v1h-6zM1800 208h8v1h-8zM1809 208h9v1h-9zM1819 208h9v1h-9zM1829 208h7v1h-7zM1837 208h8v1h-8zM1817 210h8v1h-8zM1826 210h8v1h-8zM1834 210h4v1h-4zM1838 210h4v1h-4zM1843 210h2v1h-2zM1743 310h9v1h-9zM1753 310h3v1h-3zM1757 310h8v1h-8zM1766 310h5v1h-5zM1772 310h2v1h-2zM1775 310h7v1h-7zM1783 310h8v1h-8zM1791 310h1v1h-1zM1741 314h3v1h-3zM1745 314h8v1h-8zM1754 314h7v1h-7zM1741 316h4v1h-4zM1746 316h5v1h-5zM1752 316h3v1h-3zM1756 316h6v1h-6zM1763 316h6v1h-6zM1770 316h6v1h-6zM1777 316h5v1h-5zM1783 316h5v1h-5zM1789 316h5v1h-5zM1795 316h8v1h-8zM1804 316h5v1h-5zM1810 316h5v1h-5zM1816 316h3v1h-3zM1820 316h2v1h-2zM1823 316h8v1h-8zM1741 318h5v1h-5zM1746 318h7v1h-7zM1754 318h6v1h-6zM1761 318h2v1h-2zM1764 318h5v1h-5zM1769 318h7v1h-7zM1777 318h4v1h-4zM1782 318h6v1h-6zM1789 318h2v1h-2zM1792 318h7v1h-7zM1800 318h7v1h-7zM1808 318h2v1h-2zM1811 318h6v1h-6zM1818 318h5v1h-5zM1823 318h7v1h-7zM1831 318h6v1h-6zM1741 320h6v1h-6zM1748 320h2v1h-2zM1751 320h9v1h-9zM1761 320h3v1h-3zM1741 326h4v1h-4zM1746 326h3v1h-3zM1750 326h8v1h-8zM1759 326h8v1h-8zM1741 330h6v1h-6zM1748 330h2v1h-2zM1751 330h7v1h-7zM1759 330h2v1h-2zM1761 330h7v1h-7zM1769 330h3v1h-3zM1741 332h5v1h-5zM1746 332h8v1h-8zM1754 332h8v1h-8zM1741 334h3v1h-3zM1745 334h7v1h-7zM1753 334h4v1h-4zM1758 334h2v1h-2zM1761 334h8v1h-8zM1770 334h7v1h-7zM1778 334h4v1h-4zM1783 334h6v1h-6zM1741 336h3v1h-3zM1745 336h9v1h-9zM1755 336h5v1h-5zM1761 336h2v1h-2zM1763 336h3v1h-3zM1741 338h8v1h-8zM1750 338h4v1h-4zM1755 338h5v1h-5zM1761 338h5v1h-5zM1766 338h3v1h-3zM1741 340h2v1h-2zM1744 340h4v1h-4zM1749 340h3v1h-3zM1753 340h5v1h-5zM1759 340h2v1h-2zM1762 340h3v1h-3zM1741 342h9v1h-9zM1751 342h6v1h-6zM1758 342h6v1h-6zM1765 342h8v1h-8zM1774 342h7v1h-7zM1782 342h4v1h-4zM1741 344h2v1h-2zM1744 344h1v1h-1zM1741 348h9v1h-9zM1751 348h9v1h-9zM1760 348h9v1h-9zM1770 348h3v1h-3zM1774 348h8v1h-8zM1783 348h9v1h-9zM1793 348h2v1h-2zM1796 348h4v1h-4zM1801 348h7v1h-7zM1809 348h3v1h-3zM1813 348h3v1h-3zM1745 388h8v1h-8zM1754 388h3v1h-3zM1758 388h4v1h-4zM1763 388h2v1h-2zM1766 388h4v1h-4zM1771 388h4v1h-4zM1776 388h2v1h-2zM1779 388h2v1h-2zM1745 398h3v1h-3zM1749 398h6v1h-6zM1756 398h2v1h-2zM1759 398h6v1h-6zM1745 408h4v1h-4zM1749 408h9v1h-9zM1759 408h7v1h-7zM1767 408h9v1h-9zM1777 408h6v1h-6zM1784 408h4v1h-4zM1789 408h5v1h-5zM1795 408h2v1h-2zM1741 444h6v1h-6zM1748 444h4v1h-4zM1753 444h2v1h-2zM1756 444h4v1h-4zM1761 444h5v1h-5zM1767 444h2v1h-2zM1770 444h7v1h-7zM1778 444h9v1h-9zM1788 444h9v1h-9zM1798 444h3v1h-3zM1741 450h3v1h-3zM1745 450h7v1h-7zM1753 450h2v1h-2zM1756 450h2v1h-2zM1759 450h7v1h-7zM1766 450h3v1h-3zM1770 450h9v1h-9zM1780 450h4v1h-4zM1785 450h8v1h-8zM1794 450h2v1h-2zM1741 452h7v1h-7zM1749 452h4v1h-4zM1741 454h7v1h-7zM1749 454h2v1h-2zM1751 454h6v1h-6zM1758 454h9v1h-9zM1768 454h6v1h-6zM1774 454h7v1h-7zM1781 454h9v1h-9zM1791 454h7v1h-7zM1799 454h6v1h-6zM1806 454h3v1h-3zM1810 454h2v1h-2zM1813 454h8v1h-8zM1822 454h2v1h-2zM1825 454h3v1h-3zM1829 454h5v1h-5zM1834 454h7v1h-7zM1741 456h2v1h-2zM1744 456h1v1h-1zM1778 520h8v1h-8zM1787 520h8v1h-8zM1796 520h4v1h-4zM1801 520h4v1h-4zM1806 520h5v1h-5zM1812 520h5v1h-5zM1818 520h3v1h-3zM1821 520h7v1h-7zM1741 534h2v1h-2zM1744 534h3v1h-3zM1747 534h9v1h-9zM1757 534h2v1h-2zM1760 534h4v1h-4zM1765 534h3v1h-3zM1769 534h4v1h-4zM1774 534h6v1h-6zM1781 534h2v1h-2zM1784 534h5v1h-5zM1790 534h9v1h-9zM1800 534h9v1h-9zM1810 534h3v1h-3zM1814 534h2v1h-2zM1817 534h9v1h-9zM1827 534h6v1h-6zM1741 540h4v1h-4zM1746 540h5v1h-5zM1751 540h4v1h-4zM1756 540h9v1h-9zM1766 540h4v1h-4zM1770 540h2v1h-2zM1772 540h8v1h-8zM1781 540h2v1h-2zM1784 540h2v1h-2zM1787 540h7v1h-7zM1795 540h6v1h-6zM1741 542h7v1h-7zM1748 542h2v1h-2zM1751 542h4v1h-4zM1755 542h7v1h-7zM1763 542h8v1h-8zM1772 542h2v1h-2zM1775 542h4v1h-4zM1780 542h8v1h-8zM1789 542h2v1h-2zM1792 542h8v1h-8zM1800 542h9v1h-9zM1810 542h2v1h-2zM1813 542h6v1h-6zM1819 542h6v1h-6zM1826 542h2v1h-2zM1829 542h6v1h-6zM1836 542h2v1h-2zM1839 542h2v1h-2zM1741 544h6v1h-6zM1748 544h4v1h-4zM1753 544h6v1h-6zM1760 544h4v1h-4zM1765 544h4v1h-4zM1769 544h8v1h-8zM1778 544h6v1h-6zM1785 544h3v1h-3zM1789 544h6v1h-6zM1795 544h5v1h-5zM1801 544h5v1h-5zM1807 544h7v1h-7zM1815 544h6v1h-6zM1822 544h9v1h-9zM1831 544h2v1h-2zM1834 544h5v1h-5zM1741 546h8v1h-8zM1749 546h8v1h-8zM1758 546h7v1h-7zM1766 546h5v1h-5zM1772 546h7v1h-7zM1780 546h6v1h-6zM1786 546h5v1h-5zM1792 546h2v1h-2zM1795 546h3v1h-3zM1799 546h7v1h-7zM1807 546h2v1h-2zM1810 546h9v1h-9zM1820 546h3v1h-3zM1824 546h4v1h-4zM1829 546h7v1h-7zM1837 546h3v1h-3zM1741 548h6v1h-6zM1747 548h3v1h-3zM1751 548h9v1h-9zM1761 548h4v1h-4zM1766 548h3v1h-3zM1770 548h3v1h-3zM1774 548h4v1h-4zM1779 548h6v1h-6zM1785 548h3v1h-3zM1789 548h9v1h-9zM1799 548h6v1h-6zM1806 548h6v1h-6zM1813 548h8v1h-8zM1822 548h2v1h-2zM1825 548h9v1h-9zM1835 548h4v1h-4zM1741 550h6v1h-6zM1747 550h8v1h-8zM1756 550h5v1h-5zM1762 550h7v1h-7zM1770 550h5v1h-5zM1775 550h4v1h-4zM1741 552h2v1h-2zM1744 552h2v1h-2zM1745 594h6v1h-6zM1752 594h9v1h-9zM1762 594h5v1h-5zM1768 594h2v1h-2zM1771 594h9v1h-9zM1781 594h6v1h-6zM1749 600h6v1h-6zM1756 600h3v1h-3zM1760 600h9v1h-9zM1769 600h4v1h-4zM1774 600h2v1h-2zM1749 606h3v1h-3zM1753 606h6v1h-6zM1760 606h3v1h-3zM1764 606h2v1h-2zM1767 606h8v1h-8zM1775 606h6v1h-6zM1782 606h4v1h-4zM1787 606h6v1h-6zM1794 606h7v1h-7zM1802 606h7v1h-7zM1810 606h7v1h-7zM1818 606h3v1h-3zM1798 610h8v1h-8zM1807 610h3v1h-3zM1811 610h8v1h-8zM1819 610h3v1h-3zM1823 610h3v1h-3zM1749 614h6v1h-6zM1756 614h8v1h-8zM1764 614h9v1h-9zM1774 614h4v1h-4zM1779 614h7v1h-7zM1787 614h2v1h-2zM1789 614h5v1h-5zM1795 614h9v1h-9zM1805 614h4v1h-4zM1810 614h7v1h-7zM1818 614h8v1h-8zM1827 614h5v1h-5zM1833 614h2v1h-2zM1805 616h3v1h-3zM1809 616h3v1h-3zM1813 616h8v1h-8zM1822 616h5v1h-5zM1828 616h3v1h-3zM1832 616h2v1h-2zM1835 616h2v1h-2zM1838 616h2v1h-2zM1841 616h4v1h-4zM1749 618h3v1h-3zM1753 618h5v1h-5zM1759 618h7v1h-7zM1767 618h7v1h-7zM1774 618h2v1h-2zM1776 618h3v1h-3zM1780 618h7v1h-7zM1788 618h2v1h-2zM1790 618h7v1h-7zM1798 618h7v1h-7zM1805 618h3v1h-3zM1809 618h5v1h-5zM1815 618h5v1h-5zM1821 618h2v1h-2zM1823 618h9v1h-9zM1833 618h2v1h-2zM1836 618h3v1h-3zM1839 618h4v1h-4zM1844 618h1v1h-1zM1807 620h5v1h-5zM1813 620h4v1h-4zM1818 620h2v1h-2zM1821 620h7v1h-7zM1829 620h7v1h-7zM1837 620h8v1h-8zM1801 624h5v1h-5zM1806 624h7v1h-7zM1814 624h5v1h-5zM1820 624h9v1h-9zM1830 624h3v1h-3zM1749 628h6v1h-6zM1756 628h9v1h-9zM1766 628h8v1h-8zM1775 628h3v1h-3zM1778 628h7v1h-7zM1785 628h6v1h-6zM1791 628h1v1h-1zM1749 638h9v1h-9zM1759 638h6v1h-6zM1766 638h9v1h-9zM1776 638h7v1h-7zM1784 638h6v1h-6zM1749 648h5v1h-5zM1755 648h2v1h-2zM1758 648h8v1h-8zM1767 648h7v1h-7zM1775 648h8v1h-8zM1784 648h2v1h-2zM1749 654h3v1h-3zM1753 654h2v1h-2zM1756 654h6v1h-6zM1763 654h7v1h-7zM1771 654h4v1h-4zM1776 654h5v1h-5zM1749 656h7v1h-7zM1757 656h8v1h-8zM1765 656h2v1h-2zM1768 656h5v1h-5zM1774 656h2v1h-2zM1777 656h5v1h-5zM1783 656h3v1h-3zM1787 656h2v1h-2zM1789 656h1v1h-1zM1803 662h7v1h-7zM1811 662h7v1h-7zM1819 662h9v1h-9zM1829 662h7v1h-7zM1837 662h6v1h-6zM1844 662h1v1h-1zM1831 664h9v1h-9zM1841 664h4v1h-4zM1800 670h4v1h-4zM1805 670h8v1h-8zM1814 670h6v1h-6zM1801 672h6v1h-6zM1808 672h5v1h-5zM1814 672h6v1h-6zM1821 672h4v1h-4zM1826 672h6v1h-6zM1832 672h6v1h-6zM1799 674h6v1h-6zM1806 674h8v1h-8zM1814 674h4v1h-4zM1818 674h5v1h-5zM1823 674h7v1h-7zM1831 674h3v1h-3zM1817 676h6v1h-6zM1824 676h8v1h-8zM1833 676h3v1h-3zM1837 676h3v1h-3zM1841 676h2v1h-2zM1844 676h1v1h-1zM1804 678h6v1h-6zM1811 678h8v1h-8zM1819 678h6v1h-6zM1826 678h4v1h-4zM1831 678h7v1h-7zM1838 678h2v1h-2zM1793 688h4v1h-4zM1797 688h4v1h-4zM1802 688h9v1h-9zM1812 688h1v1h-1zM1799 690h8v1h-8zM1808 690h7v1h-7zM1816 690h5v1h-5zM1821 690h3v1h-3zM1825 690h7v1h-7zM1833 690h2v1h-2zM1785 698h9v1h-9zM1795 698h6v1h-6zM1802 698h3v1h-3zM1803 700h2v1h-2zM1806 700h5v1h-5zM1812 700h5v1h-5zM1818 700h4v1h-4zM1823 700h6v1h-6zM1829 700h8v1h-8zM1838 700h1v1h-1zM1806 702h7v1h-7zM1814 702h5v1h-5zM1820 702h5v1h-5zM1826 702h3v1h-3zM1829 702h9v1h-9zM1839 702h3v1h-3zM1805 704h6v1h-6zM1812 704h3v1h-3zM1816 704h6v1h-6zM1823 704h5v1h-5zM1829 704h9v1h-9zM1839 704h2v1h-2zM1806 706h6v1h-6zM1813 706h7v1h-7zM1821 706h3v1h-3zM1825 706h1v1h-1zM1816 708h5v1h-5zM1821 708h4v1h-4zM1826 708h2v1h-2zM1829 708h4v1h-4zM1834 708h5v1h-5zM1840 708h5v1h-5zM1790 710h3v1h-3zM1794 710h9v1h-9zM1804 710h4v1h-4zM1809 710h9v1h-9zM1819 710h7v1h-7zM1772 760h6v1h-6zM1779 760h2v1h-2zM1782 760h5v1h-5zM1788 760h6v1h-6zM1745 770h4v1h-4zM1750 770h6v1h-6zM1757 770h5v1h-5zM1763 770h2v1h-2zM1766 770h5v1h-5zM1772 770h4v1h-4zM1777 770h3v1h-3zM1781 770h6v1h-6zM1788 770h3v1h-3zM1745 772h3v1h-3zM1749 772h4v1h-4zM1745 774h9v1h-9zM1755 774h6v1h-6zM1761 774h4v1h-4zM1745 776h3v1h-3zM1749 776h8v1h-8zM1758 776h4v1h-4zM1763 776h3v1h-3zM1766 776h9v1h-9zM1745 778h2v1h-2zM1748 778h5v1h-5zM1754 778h5v1h-5zM1759 778h7v1h-7zM1767 778h2v1h-2zM1769 778h3v1h-3zM1772 778h4v1h-4zM1777 778h6v1h-6zM1784 778h2v1h-2zM1745 780h9v1h-9zM1755 780h2v1h-2zM1758 780h3v1h-3zM1762 780h5v1h-5zM1768 780h6v1h-6zM1775 780h2v1h-2zM1745 782h7v1h-7zM1753 782h4v1h-4zM1758 782h6v1h-6zM1765 782h4v1h-4zM1770 782h3v1h-3zM1745 784h4v1h-4zM1750 784h8v1h-8zM1745 786h2v1h-2zM1748 786h5v1h-5zM1753 786h1v1h-1zM1745 788h5v1h-5zM1751 788h9v1h-9zM1761 788h2v1h-2zM1764 788h8v1h-8zM1772 788h3v1h-3zM1745 790h9v1h-9zM1755 790h3v1h-3zM1759 790h9v1h-9zM1769 790h3v1h-3zM1773 790h4v1h-4zM1777 790h8v1h-8zM1786 790h3v1h-3zM1790 790h6v1h-6zM1797 790h4v1h-4zM1745 792h6v1h-6zM1745 796h3v1h-3zM1749 796h9v1h-9zM1759 796h8v1h-8zM1768 796h8v1h-8zM1777 796h5v1h-5zM1783 796h7v1h-7zM1791 796h3v1h-3zM1795 796h4v1h-4zM1745 798h9v1h-9zM1755 798h4v1h-4zM1760 798h9v1h-9zM1770 798h3v1h-3zM1774 798h4v1h-4zM1745 800h9v1h-9zM1755 800h4v1h-4zM1760 800h2v1h-2zM1763 800h2v1h-2zM1766 800h5v1h-5zM1772 800h4v1h-4zM1777 800h4v1h-4zM1745 802h7v1h-7zM1753 802h7v1h-7zM1761 802h4v1h-4zM1766 802h2v1h-2zM1769 802h3v1h-3zM1773 802h2v1h-2zM1745 804h4v1h-4zM1749 804h6v1h-6zM1756 804h5v1h-5zM1761 804h8v1h-8zM1770 804h4v1h-4zM1775 804h9v1h-9zM1785 804h5v1h-5zM1745 806h9v1h-9zM1745 808h4v1h-4zM1745 812h9v1h-9zM1755 812h9v1h-9zM1765 812h7v1h-7zM1773 812h4v1h-4zM1778 812h2v1h-2zM1781 812h4v1h-4zM1786 812h2v1h-2zM1789 812h6v1h-6zM1796 812h5v1h-5zM1745 814h8v1h-8zM1754 814h5v1h-5zM1760 814h6v1h-6zM1766 814h4v1h-4zM1770 814h4v1h-4zM1775 814h2v1h-2zM1778 814h8v1h-8zM1787 814h9v1h-9zM1797 814h4v1h-4zM1737 836h3v1h-3zM1740 836h6v1h-6zM1746 836h5v1h-5zM1752 836h5v1h-5zM1758 836h6v1h-6zM1765 836h4v1h-4zM1769 836h9v1h-9zM1778 836h2v1h-2zM1781 836h2v1h-2zM1784 836h5v1h-5zM1745 878h6v1h-6zM1752 878h2v1h-2zM1754 878h4v1h-4zM1759 878h8v1h-8zM1768 878h5v1h-5zM1774 878h4v1h-4zM1779 878h8v1h-8zM1788 878h6v1h-6zM1795 878h2v1h-2zM1798 878h9v1h-9zM1808 878h6v1h-6zM1737 962h8v1h-8zM1745 962h2v1h-2zM1748 962h4v1h-4zM1752 962h2v1h-2zM1755 962h2v1h-2zM1758 962h3v1h-3zM1762 962h5v1h-5zM1768 962h4v1h-4zM1773 962h5v1h-5zM1779 962h9v1h-9zM1805 216h2v1h-2zM1808 216h8v1h-8zM1817 216h5v1h-5zM1809 218h2v1h-2zM1812 218h7v1h-7zM1820 218h2v1h-2zM1823 218h4v1h-4zM1828 218h2v1h-2zM1831 218h3v1h-3zM1835 218h8v1h-8zM1805 220h2v1h-2zM1808 220h7v1h-7zM1816 220h2v1h-2zM1819 220h4v1h-4zM1824 220h2v1h-2zM1827 220h3v1h-3zM1831 220h8v1h-8zM1824 222h2v1h-2zM1827 222h7v1h-7zM1835 222h2v1h-2zM1838 222h4v1h-4zM1843 222h2v1h-2zM1812 224h2v1h-2zM1815 224h7v1h-7zM1823 224h2v1h-2zM1826 224h4v1h-4zM1831 224h2v1h-2zM1834 224h3v1h-3zM1838 224h7v1h-7zM1796 234h2v1h-2zM1799 234h8v1h-8zM1808 234h5v1h-5zM1800 236h2v1h-2zM1803 236h7v1h-7zM1811 236h2v1h-2zM1814 236h4v1h-4zM1819 236h2v1h-2zM1822 236h3v1h-3zM1826 236h8v1h-8zM1786 244h2v1h-2zM1789 244h8v1h-8zM1798 244h5v1h-5zM1807 246h2v1h-2zM1810 246h7v1h-7zM1818 246h2v1h-2zM1821 246h4v1h-4zM1826 246h2v1h-2zM1829 246h3v1h-3zM1833 246h8v1h-8zM1809 248h2v1h-2zM1812 248h7v1h-7zM1820 248h2v1h-2zM1823 248h4v1h-4zM1828 248h2v1h-2zM1831 248h3v1h-3zM1835 248h8v1h-8zM1809 250h2v1h-2zM1812 250h7v1h-7zM1820 250h2v1h-2zM1823 250h4v1h-4zM1828 250h2v1h-2zM1831 250h3v1h-3zM1835 250h8v1h-8zM1809 252h2v1h-2zM1812 252h8v1h-8zM1821 252h5v1h-5zM1820 254h2v1h-2zM1823 254h7v1h-7zM1831 254h2v1h-2zM1834 254h4v1h-4zM1839 254h2v1h-2zM1842 254h3v1h-3z" fill="#6a9955" fill-opacity="0.56"/><path d="M1749 147h2v1h-2zM1751 147h7v1h-7zM1758 147h8v1h-8zM1766 147h4v1h-4zM1771 147h2v1h-2zM1773 147h4v1h-4zM1778 147h4v1h-4zM1749 155h5v1h-5zM1755 155h5v1h-5zM1761 155h3v1h-3zM1764 155h4v1h-4zM1768 155h7v1h-7zM1776 155h4v1h-4zM1780 155h5v1h-5zM1786 155h3v1h-3zM1790 155h9v1h-9zM1800 155h5v1h-5zM1806 155h8v1h-8zM1814 155h7v1h-7zM1786 159h6v1h-6zM1793 159h9v1h-9zM1803 159h3v1h-3zM1807 159h4v1h-4zM1812 159h3v1h-3zM1816 159h2v1h-2zM1819 159h6v1h-6zM1749 163h5v1h-5zM1755 163h4v1h-4zM1760 163h2v1h-2zM1762 163h2v1h-2zM1765 163h5v1h-5zM1771 163h5v1h-5zM1776 163h3v1h-3zM1780 163h8v1h-8zM1789 163h8v1h-8zM1797 163h6v1h-6zM1804 163h5v1h-5zM1810 163h4v1h-4zM1815 163h7v1h-7zM1822 163h4v1h-4zM1827 163h6v1h-6zM1834 163h2v1h-2zM1808 165h8v1h-8zM1817 165h6v1h-6zM1824 165h5v1h-5zM1830 165h2v1h-2zM1833 165h3v1h-3zM1837 165h2v1h-2zM1840 165h5v1h-5zM1749 167h8v1h-8zM1758 167h9v1h-9zM1768 167h4v1h-4zM1773 167h8v1h-8zM1782 167h4v1h-4zM1786 167h2v1h-2zM1788 167h5v1h-5zM1794 167h2v1h-2zM1797 167h7v1h-7zM1804 167h8v1h-8zM1812 167h2v1h-2zM1815 167h5v1h-5zM1821 167h2v1h-2zM1824 167h3v1h-3zM1828 167h3v1h-3zM1832 167h3v1h-3zM1836 167h9v1h-9zM1807 169h2v1h-2zM1810 169h3v1h-3zM1814 169h9v1h-9zM1824 169h6v1h-6zM1831 169h9v1h-9zM1841 169h4v1h-4zM1797 173h3v1h-3zM1800 173h5v1h-5zM1806 173h6v1h-6zM1813 173h3v1h-3zM1817 173h3v1h-3zM1821 173h8v1h-8zM1830 173h2v1h-2zM1833 173h2v1h-2zM1749 177h8v1h-8zM1757 177h8v1h-8zM1765 177h5v1h-5zM1771 177h2v1h-2zM1773 177h8v1h-8zM1782 177h4v1h-4zM1787 177h5v1h-5zM1749 195h3v1h-3zM1753 195h5v1h-5zM1759 195h5v1h-5zM1765 195h2v1h-2zM1768 195h6v1h-6zM1774 195h5v1h-5zM1749 201h6v1h-6zM1756 201h3v1h-3zM1760 201h5v1h-5zM1766 201h5v1h-5zM1772 201h3v1h-3zM1749 203h6v1h-6zM1756 203h9v1h-9zM1766 203h5v1h-5zM1772 203h2v1h-2zM1774 203h4v1h-4zM1778 203h2v1h-2zM1781 203h3v1h-3zM1794 209h6v1h-6zM1800 209h8v1h-8zM1809 209h9v1h-9zM1819 209h9v1h-9zM1829 209h7v1h-7zM1837 209h8v1h-8zM1817 211h8v1h-8zM1826 211h8v1h-8zM1834 211h4v1h-4zM1838 211h4v1h-4zM1843 211h2v1h-2zM1743 311h9v1h-9zM1753 311h3v1h-3zM1757 311h8v1h-8zM1766 311h5v1h-5zM1772 311h2v1h-2zM1775 311h7v1h-7zM1783 311h8v1h-8zM1791 311h1v1h-1zM1741 315h3v1h-3zM1745 315h8v1h-8zM1754 315h7v1h-7zM1741 317h4v1h-4zM1746 317h5v1h-5zM1752 317h3v1h-3zM1756 317h6v1h-6zM1763 317h6v1h-6zM1770 317h6v1h-6zM1777 317h5v1h-5zM1783 317h5v1h-5zM1789 317h5v1h-5zM1795 317h8v1h-8zM1804 317h5v1h-5zM1810 317h5v1h-5zM1816 317h3v1h-3zM1820 317h2v1h-2zM1823 317h8v1h-8zM1741 319h5v1h-5zM1746 319h7v1h-7zM1754 319h6v1h-6zM1761 319h2v1h-2zM1764 319h5v1h-5zM1769 319h7v1h-7zM1777 319h4v1h-4zM1782 319h6v1h-6zM1789 319h2v1h-2zM1792 319h7v1h-7zM1800 319h7v1h-7zM1808 319h2v1h-2zM1811 319h6v1h-6zM1818 319h5v1h-5zM1823 319h7v1h-7zM1831 319h6v1h-6zM1741 321h6v1h-6zM1748 321h2v1h-2zM1751 321h9v1h-9zM1761 321h3v1h-3zM1741 327h4v1h-4zM1746 327h3v1h-3zM1750 327h8v1h-8zM1759 327h8v1h-8zM1741 331h6v1h-6zM1748 331h2v1h-2zM1751 331h7v1h-7zM1759 331h2v1h-2zM1761 331h7v1h-7zM1769 331h3v1h-3zM1741 333h5v1h-5zM1746 333h8v1h-8zM1754 333h8v1h-8zM1741 335h3v1h-3zM1745 335h7v1h-7zM1753 335h4v1h-4zM1758 335h2v1h-2zM1761 335h8v1h-8zM1770 335h7v1h-7zM1778 335h4v1h-4zM1783 335h6v1h-6zM1741 337h3v1h-3zM1745 337h9v1h-9zM1755 337h5v1h-5zM1761 337h2v1h-2zM1763 337h3v1h-3zM1741 339h8v1h-8zM1750 339h4v1h-4zM1755 339h5v1h-5zM1761 339h5v1h-5zM1766 339h3v1h-3zM1741 341h2v1h-2zM1744 341h4v1h-4zM1749 341h3v1h-3zM1753 341h5v1h-5zM1759 341h2v1h-2zM1762 341h3v1h-3zM1741 343h9v1h-9zM1751 343h6v1h-6zM1758 343h6v1h-6zM1765 343h8v1h-8zM1774 343h7v1h-7zM1782 343h4v1h-4zM1741 345h2v1h-2zM1744 345h1v1h-1zM1741 349h9v1h-9zM1751 349h9v1h-9zM1760 349h9v1h-9zM1770 349h3v1h-3zM1774 349h8v1h-8zM1783 349h9v1h-9zM1793 349h2v1h-2zM1796 349h4v1h-4zM1801 349h7v1h-7zM1809 349h3v1h-3zM1813 349h3v1h-3zM1745 389h8v1h-8zM1754 389h3v1h-3zM1758 389h4v1h-4zM1763 389h2v1h-2zM1766 389h4v1h-4zM1771 389h4v1h-4zM1776 389h2v1h-2zM1779 389h2v1h-2zM1745 399h3v1h-3zM1749 399h6v1h-6zM1756 399h2v1h-2zM1759 399h6v1h-6zM1745 409h4v1h-4zM1749 409h9v1h-9zM1759 409h7v1h-7zM1767 409h9v1h-9zM1777 409h6v1h-6zM1784 409h4v1h-4zM1789 409h5v1h-5zM1795 409h2v1h-2zM1741 445h6v1h-6zM1748 445h4v1h-4zM1753 445h2v1h-2zM1756 445h4v1h-4zM1761 445h5v1h-5zM1767 445h2v1h-2zM1770 445h7v1h-7zM1778 445h9v1h-9zM1788 445h9v1h-9zM1798 445h3v1h-3zM1741 451h3v1h-3zM1745 451h7v1h-7zM1753 451h2v1h-2zM1756 451h2v1h-2zM1759 451h7v1h-7zM1766 451h3v1h-3zM1770 451h9v1h-9zM1780 451h4v1h-4zM1785 451h8v1h-8zM1794 451h2v1h-2zM1741 453h7v1h-7zM1749 453h4v1h-4zM1741 455h7v1h-7zM1749 455h2v1h-2zM1751 455h6v1h-6zM1758 455h9v1h-9zM1768 455h6v1h-6zM1774 455h7v1h-7zM1781 455h9v1h-9zM1791 455h7v1h-7zM1799 455h6v1h-6zM1806 455h3v1h-3zM1810 455h2v1h-2zM1813 455h8v1h-8zM1822 455h2v1h-2zM1825 455h3v1h-3zM1829 455h5v1h-5zM1834 455h7v1h-7zM1741 457h2v1h-2zM1744 457h1v1h-1zM1778 521h8v1h-8zM1787 521h8v1h-8zM1796 521h4v1h-4zM1801 521h4v1h-4zM1806 521h5v1h-5zM1812 521h5v1h-5zM1818 521h3v1h-3zM1821 521h7v1h-7zM1741 535h2v1h-2zM1744 535h3v1h-3zM1747 535h9v1h-9zM1757 535h2v1h-2zM1760 535h4v1h-4zM1765 535h3v1h-3zM1769 535h4v1h-4zM1774 535h6v1h-6zM1781 535h2v1h-2zM1784 535h5v1h-5zM1790 535h9v1h-9zM1800 535h9v1h-9zM1810 535h3v1h-3zM1814 535h2v1h-2zM1817 535h9v1h-9zM1827 535h6v1h-6zM1741 541h4v1h-4zM1746 541h5v1h-5zM1751 541h4v1h-4zM1756 541h9v1h-9zM1766 541h4v1h-4zM1770 541h2v1h-2zM1772 541h8v1h-8zM1781 541h2v1h-2zM1784 541h2v1h-2zM1787 541h7v1h-7zM1795 541h6v1h-6zM1741 543h7v1h-7zM1748 543h2v1h-2zM1751 543h4v1h-4zM1755 543h7v1h-7zM1763 543h8v1h-8zM1772 543h2v1h-2zM1775 543h4v1h-4zM1780 543h8v1h-8zM1789 543h2v1h-2zM1792 543h8v1h-8zM1800 543h9v1h-9zM1810 543h2v1h-2zM1813 543h6v1h-6zM1819 543h6v1h-6zM1826 543h2v1h-2zM1829 543h6v1h-6zM1836 543h2v1h-2zM1839 543h2v1h-2zM1741 545h6v1h-6zM1748 545h4v1h-4zM1753 545h6v1h-6zM1760 545h4v1h-4zM1765 545h4v1h-4zM1769 545h8v1h-8zM1778 545h6v1h-6zM1785 545h3v1h-3zM1789 545h6v1h-6zM1795 545h5v1h-5zM1801 545h5v1h-5zM1807 545h7v1h-7zM1815 545h6v1h-6zM1822 545h9v1h-9zM1831 545h2v1h-2zM1834 545h5v1h-5zM1741 547h8v1h-8zM1749 547h8v1h-8zM1758 547h7v1h-7zM1766 547h5v1h-5zM1772 547h7v1h-7zM1780 547h6v1h-6zM1786 547h5v1h-5zM1792 547h2v1h-2zM1795 547h3v1h-3zM1799 547h7v1h-7zM1807 547h2v1h-2zM1810 547h9v1h-9zM1820 547h3v1h-3zM1824 547h4v1h-4zM1829 547h7v1h-7zM1837 547h3v1h-3zM1741 549h6v1h-6zM1747 549h3v1h-3zM1751 549h9v1h-9zM1761 549h4v1h-4zM1766 549h3v1h-3zM1770 549h3v1h-3zM1774 549h4v1h-4zM1779 549h6v1h-6zM1785 549h3v1h-3zM1789 549h9v1h-9zM1799 549h6v1h-6zM1806 549h6v1h-6zM1813 549h8v1h-8zM1822 549h2v1h-2zM1825 549h9v1h-9zM1835 549h4v1h-4zM1741 551h6v1h-6zM1747 551h8v1h-8zM1756 551h5v1h-5zM1762 551h7v1h-7zM1770 551h5v1h-5zM1775 551h4v1h-4zM1741 553h2v1h-2zM1744 553h2v1h-2zM1745 595h6v1h-6zM1752 595h9v1h-9zM1762 595h5v1h-5zM1768 595h2v1h-2zM1771 595h9v1h-9zM1781 595h6v1h-6zM1749 601h6v1h-6zM1756 601h3v1h-3zM1760 601h9v1h-9zM1769 601h4v1h-4zM1774 601h2v1h-2zM1749 607h3v1h-3zM1753 607h6v1h-6zM1760 607h3v1h-3zM1764 607h2v1h-2zM1767 607h8v1h-8zM1775 607h6v1h-6zM1782 607h4v1h-4zM1787 607h6v1h-6zM1794 607h7v1h-7zM1802 607h7v1h-7zM1810 607h7v1h-7zM1818 607h3v1h-3zM1798 611h8v1h-8zM1807 611h3v1h-3zM1811 611h8v1h-8zM1819 611h3v1h-3zM1823 611h3v1h-3zM1749 615h6v1h-6zM1756 615h8v1h-8zM1764 615h9v1h-9zM1774 615h4v1h-4zM1779 615h7v1h-7zM1787 615h2v1h-2zM1789 615h5v1h-5zM1795 615h9v1h-9zM1805 615h4v1h-4zM1810 615h7v1h-7zM1818 615h8v1h-8zM1827 615h5v1h-5zM1833 615h2v1h-2zM1805 617h3v1h-3zM1809 617h3v1h-3zM1813 617h8v1h-8zM1822 617h5v1h-5zM1828 617h3v1h-3zM1832 617h2v1h-2zM1835 617h2v1h-2zM1838 617h2v1h-2zM1841 617h4v1h-4zM1749 619h3v1h-3zM1753 619h5v1h-5zM1759 619h7v1h-7zM1767 619h7v1h-7zM1774 619h2v1h-2zM1776 619h3v1h-3zM1780 619h7v1h-7zM1788 619h2v1h-2zM1790 619h7v1h-7zM1798 619h7v1h-7zM1805 619h3v1h-3zM1809 619h5v1h-5zM1815 619h5v1h-5zM1821 619h2v1h-2zM1823 619h9v1h-9zM1833 619h2v1h-2zM1836 619h3v1h-3zM1839 619h4v1h-4zM1844 619h1v1h-1zM1807 621h5v1h-5zM1813 621h4v1h-4zM1818 621h2v1h-2zM1821 621h7v1h-7zM1829 621h7v1h-7zM1837 621h8v1h-8zM1801 625h5v1h-5zM1806 625h7v1h-7zM1814 625h5v1h-5zM1820 625h9v1h-9zM1830 625h3v1h-3zM1749 629h6v1h-6zM1756 629h9v1h-9zM1766 629h8v1h-8zM1775 629h3v1h-3zM1778 629h7v1h-7zM1785 629h6v1h-6zM1791 629h1v1h-1zM1749 639h9v1h-9zM1759 639h6v1h-6zM1766 639h9v1h-9zM1776 639h7v1h-7zM1784 639h6v1h-6zM1749 649h5v1h-5zM1755 649h2v1h-2zM1758 649h8v1h-8zM1767 649h7v1h-7zM1775 649h8v1h-8zM1784 649h2v1h-2zM1749 655h3v1h-3zM1753 655h2v1h-2zM1756 655h6v1h-6zM1763 655h7v1h-7zM1771 655h4v1h-4zM1776 655h5v1h-5zM1749 657h7v1h-7zM1757 657h8v1h-8zM1765 657h2v1h-2zM1768 657h5v1h-5zM1774 657h2v1h-2zM1777 657h5v1h-5zM1783 657h3v1h-3zM1787 657h2v1h-2zM1789 657h1v1h-1zM1803 663h7v1h-7zM1811 663h7v1h-7zM1819 663h9v1h-9zM1829 663h7v1h-7zM1837 663h6v1h-6zM1844 663h1v1h-1zM1831 665h9v1h-9zM1841 665h4v1h-4zM1800 671h4v1h-4zM1805 671h8v1h-8zM1814 671h6v1h-6zM1801 673h6v1h-6zM1808 673h5v1h-5zM1814 673h6v1h-6zM1821 673h4v1h-4zM1826 673h6v1h-6zM1832 673h6v1h-6zM1799 675h6v1h-6zM1806 675h8v1h-8zM1814 675h4v1h-4zM1818 675h5v1h-5zM1823 675h7v1h-7zM1831 675h3v1h-3zM1817 677h6v1h-6zM1824 677h8v1h-8zM1833 677h3v1h-3zM1837 677h3v1h-3zM1841 677h2v1h-2zM1844 677h1v1h-1zM1804 679h6v1h-6zM1811 679h8v1h-8zM1819 679h6v1h-6zM1826 679h4v1h-4zM1831 679h7v1h-7zM1838 679h2v1h-2zM1793 689h4v1h-4zM1797 689h4v1h-4zM1802 689h9v1h-9zM1812 689h1v1h-1zM1799 691h8v1h-8zM1808 691h7v1h-7zM1816 691h5v1h-5zM1821 691h3v1h-3zM1825 691h7v1h-7zM1833 691h2v1h-2zM1785 699h9v1h-9zM1795 699h6v1h-6zM1802 699h3v1h-3zM1803 701h2v1h-2zM1806 701h5v1h-5zM1812 701h5v1h-5zM1818 701h4v1h-4zM1823 701h6v1h-6zM1829 701h8v1h-8zM1838 701h1v1h-1zM1806 703h7v1h-7zM1814 703h5v1h-5zM1820 703h5v1h-5zM1826 703h3v1h-3zM1829 703h9v1h-9zM1839 703h3v1h-3zM1805 705h6v1h-6zM1812 705h3v1h-3zM1816 705h6v1h-6zM1823 705h5v1h-5zM1829 705h9v1h-9zM1839 705h2v1h-2zM1806 707h6v1h-6zM1813 707h7v1h-7zM1821 707h3v1h-3zM1825 707h1v1h-1zM1816 709h5v1h-5zM1821 709h4v1h-4zM1826 709h2v1h-2zM1829 709h4v1h-4zM1834 709h5v1h-5zM1840 709h5v1h-5zM1790 711h3v1h-3zM1794 711h9v1h-9zM1804 711h4v1h-4zM1809 711h9v1h-9zM1819 711h7v1h-7zM1772 761h6v1h-6zM1779 761h2v1h-2zM1782 761h5v1h-5zM1788 761h6v1h-6zM1745 771h4v1h-4zM1750 771h6v1h-6zM1757 771h5v1h-5zM1763 771h2v1h-2zM1766 771h5v1h-5zM1772 771h4v1h-4zM1777 771h3v1h-3zM1781 771h6v1h-6zM1788 771h3v1h-3zM1745 773h3v1h-3zM1749 773h4v1h-4zM1745 775h9v1h-9zM1755 775h6v1h-6zM1761 775h4v1h-4zM1745 777h3v1h-3zM1749 777h8v1h-8zM1758 777h4v1h-4zM1763 777h3v1h-3zM1766 777h9v1h-9zM1745 779h2v1h-2zM1748 779h5v1h-5zM1754 779h5v1h-5zM1759 779h7v1h-7zM1767 779h2v1h-2zM1769 779h3v1h-3zM1772 779h4v1h-4zM1777 779h6v1h-6zM1784 779h2v1h-2zM1745 781h9v1h-9zM1755 781h2v1h-2zM1758 781h3v1h-3zM1762 781h5v1h-5zM1768 781h6v1h-6zM1775 781h2v1h-2zM1745 783h7v1h-7zM1753 783h4v1h-4zM1758 783h6v1h-6zM1765 783h4v1h-4zM1770 783h3v1h-3zM1745 785h4v1h-4zM1750 785h8v1h-8zM1745 787h2v1h-2zM1748 787h5v1h-5zM1753 787h1v1h-1zM1745 789h5v1h-5zM1751 789h9v1h-9zM1761 789h2v1h-2zM1764 789h8v1h-8zM1772 789h3v1h-3zM1745 791h9v1h-9zM1755 791h3v1h-3zM1759 791h9v1h-9zM1769 791h3v1h-3zM1773 791h4v1h-4zM1777 791h8v1h-8zM1786 791h3v1h-3zM1790 791h6v1h-6zM1797 791h4v1h-4zM1745 793h6v1h-6zM1745 797h3v1h-3zM1749 797h9v1h-9zM1759 797h8v1h-8zM1768 797h8v1h-8zM1777 797h5v1h-5zM1783 797h7v1h-7zM1791 797h3v1h-3zM1795 797h4v1h-4zM1745 799h9v1h-9zM1755 799h4v1h-4zM1760 799h9v1h-9zM1770 799h3v1h-3zM1774 799h4v1h-4zM1745 801h9v1h-9zM1755 801h4v1h-4zM1760 801h2v1h-2zM1763 801h2v1h-2zM1766 801h5v1h-5zM1772 801h4v1h-4zM1777 801h4v1h-4zM1745 803h7v1h-7zM1753 803h7v1h-7zM1761 803h4v1h-4zM1766 803h2v1h-2zM1769 803h3v1h-3zM1773 803h2v1h-2zM1745 805h4v1h-4zM1749 805h6v1h-6zM1756 805h5v1h-5zM1761 805h8v1h-8zM1770 805h4v1h-4zM1775 805h9v1h-9zM1785 805h5v1h-5zM1745 807h9v1h-9zM1745 809h4v1h-4zM1745 813h9v1h-9zM1755 813h9v1h-9zM1765 813h7v1h-7zM1773 813h4v1h-4zM1778 813h2v1h-2zM1781 813h4v1h-4zM1786 813h2v1h-2zM1789 813h6v1h-6zM1796 813h5v1h-5zM1745 815h8v1h-8zM1754 815h5v1h-5zM1760 815h6v1h-6zM1766 815h4v1h-4zM1770 815h4v1h-4zM1775 815h2v1h-2zM1778 815h8v1h-8zM1787 815h9v1h-9zM1797 815h4v1h-4zM1737 837h3v1h-3zM1740 837h6v1h-6zM1746 837h5v1h-5zM1752 837h5v1h-5zM1758 837h6v1h-6zM1765 837h4v1h-4zM1769 837h9v1h-9zM1778 837h2v1h-2zM1781 837h2v1h-2zM1784 837h5v1h-5zM1745 879h6v1h-6zM1752 879h2v1h-2zM1754 879h4v1h-4zM1759 879h8v1h-8zM1768 879h5v1h-5zM1774 879h4v1h-4zM1779 879h8v1h-8zM1788 879h6v1h-6zM1795 879h2v1h-2zM1798 879h9v1h-9zM1808 879h6v1h-6zM1737 963h8v1h-8zM1745 963h2v1h-2zM1748 963h4v1h-4zM1752 963h2v1h-2zM1755 963h2v1h-2zM1758 963h3v1h-3zM1762 963h5v1h-5zM1768 963h4v1h-4zM1773 963h5v1h-5zM1779 963h9v1h-9zM1805 217h2v1h-2zM1808 217h8v1h-8zM1817 217h5v1h-5zM1809 219h2v1h-2zM1812 219h7v1h-7zM1820 219h2v1h-2zM1823 219h4v1h-4zM1828 219h2v1h-2zM1831 219h3v1h-3zM1835 219h8v1h-8zM1805 221h2v1h-2zM1808 221h7v1h-7zM1816 221h2v1h-2zM1819 221h4v1h-4zM1824 221h2v1h-2zM1827 221h3v1h-3zM1831 221h8v1h-8zM1824 223h2v1h-2zM1827 223h7v1h-7zM1835 223h2v1h-2zM1838 223h4v1h-4zM1843 223h2v1h-2zM1812 225h2v1h-2zM1815 225h7v1h-7zM1823 225h2v1h-2zM1826 225h4v1h-4zM1831 225h2v1h-2zM1834 225h3v1h-3zM1838 225h7v1h-7zM1796 235h2v1h-2zM1799 235h8v1h-8zM1808 235h5v1h-5zM1800 237h2v1h-2zM1803 237h7v1h-7zM1811 237h2v1h-2zM1814 237h4v1h-4zM1819 237h2v1h-2zM1822 237h3v1h-3zM1826 237h8v1h-8zM1786 245h2v1h-2zM1789 245h8v1h-8zM1798 245h5v1h-5zM1807 247h2v1h-2zM1810 247h7v1h-7zM1818 247h2v1h-2zM1821 247h4v1h-4zM1826 247h2v1h-2zM1829 247h3v1h-3zM1833 247h8v1h-8zM1809 249h2v1h-2zM1812 249h7v1h-7zM1820 249h2v1h-2zM1823 249h4v1h-4zM1828 249h2v1h-2zM1831 249h3v1h-3zM1835 249h8v1h-8zM1809 251h2v1h-2zM1812 251h7v1h-7zM1820 251h2v1h-2zM1823 251h4v1h-4zM1828 251h2v1h-2zM1831 251h3v1h-3zM1835 251h8v1h-8zM1809 253h2v1h-2zM1812 253h8v1h-8zM1821 253h5v1h-5zM1820 255h2v1h-2zM1823 255h7v1h-7zM1831 255h2v1h-2zM1834 255h4v1h-4zM1839 255h2v1h-2zM1842 255h3v1h-3z" fill="#6a9955" fill-opacity="0.3"/><path d="M1774 366h2v1h-2zM1770 404h2v1h-2zM1749 418h2v1h-2zM1801 420h1v1h-1zM1820 420h2v1h-2zM1745 422h1v1h-1zM1753 422h1v1h-1zM1759 422h2v1h-2zM1745 426h1v1h-1zM1773 432h2v1h-2zM1745 438h1v1h-1zM1745 464h1v1h-1zM1745 496h1v1h-1zM1745 498h1v1h-1zM1745 512h1v1h-1zM1745 514h1v1h-1zM1741 526h1v1h-1zM1745 562h1v1h-1zM1743 576h1v1h-1zM1741 726h1v1h-1zM1820 732h2v1h-2zM1733 744h1v1h-1zM1778 748h2v1h-2zM1738 828h1v1h-1zM1812 834h1v1h-1zM1828 834h1v1h-1zM1790 844h1v1h-1zM1802 844h1v1h-1zM1733 956h2v1h-2zM1812 960h1v1h-1zM1828 960h1v1h-1zM1787 976h3v1h-3zM1767 986h1v1h-1zM1749 1004h2v1h-2zM1767 1010h1v1h-1zM1741 270h1v1h-1zM1772 276h2v1h-2zM1756 280h1v1h-1zM1762 280h1v1h-1zM1760 290h1v1h-1zM1764 290h1v1h-1zM1770 290h1v1h-1zM1825 290h1v1h-1zM1793 296h2v1h-2zM1800 296h1v1h-1zM1760 300h1v1h-1zM1764 300h1v1h-1zM1770 300h1v1h-1zM1820 300h1v1h-1zM1785 138h1v1h-1z" fill="#b07ab0" fill-opacity="0.56"/><path d="M1774 367h2v1h-2zM1770 405h2v1h-2zM1749 419h2v1h-2zM1801 421h1v1h-1zM1820 421h2v1h-2zM1745 423h1v1h-1zM1753 423h1v1h-1zM1759 423h2v1h-2zM1745 427h1v1h-1zM1773 433h2v1h-2zM1745 439h1v1h-1zM1745 465h1v1h-1zM1745 497h1v1h-1zM1745 499h1v1h-1zM1745 513h1v1h-1zM1745 515h1v1h-1zM1741 527h1v1h-1zM1745 563h1v1h-1zM1743 577h1v1h-1zM1741 727h1v1h-1zM1820 733h2v1h-2zM1733 745h1v1h-1zM1778 749h2v1h-2zM1738 829h1v1h-1zM1812 835h1v1h-1zM1828 835h1v1h-1zM1790 845h1v1h-1zM1802 845h1v1h-1zM1733 957h2v1h-2zM1812 961h1v1h-1zM1828 961h1v1h-1zM1787 977h3v1h-3zM1767 987h1v1h-1zM1749 1005h2v1h-2zM1767 1011h1v1h-1zM1741 271h1v1h-1zM1772 277h2v1h-2zM1756 281h1v1h-1zM1762 281h1v1h-1zM1760 291h1v1h-1zM1764 291h1v1h-1zM1770 291h1v1h-1zM1825 291h1v1h-1zM1793 297h2v1h-2zM1800 297h1v1h-1zM1760 301h1v1h-1zM1764 301h1v1h-1zM1770 301h1v1h-1zM1820 301h1v1h-1zM1785 139h1v1h-1z" fill="#b07ab0" fill-opacity="0.3"/><path d="M1747 374h5v1h-5zM1747 286h5v1h-5z" fill="#4fc1ff" fill-opacity="0.56"/><path d="M1747 375h5v1h-5zM1747 287h5v1h-5z" fill="#4fc1ff" fill-opacity="0.3"/><path d="M1749 306h7v1h-7z" fill="#4b87b8" fill-opacity="0.56"/><path d="M1749 307h7v1h-7z" fill="#4b87b8" fill-opacity="0.3"/></g></svg>
<div class="a" style="left:1727px;top:272px;width:2px;height:4px;background:#2ea043;"></div>
<div class="a" style="left:1727px;top:278px;width:2px;height:6px;background:#2ea043;"></div>
<div class="a" style="left:1845px;top:92px;width:14px;height:939px;background:#1f1f1f;"></div>
<div class="a" style="left:1845px;top:92px;width:1px;height:939px;background:#111111;"></div>
<div class="a" style="left:1845px;top:92px;width:14px;height:1px;background:#111111;"></div>
<div class="a" style="left:1846px;top:219px;width:13px;height:32px;background:#4a4a4a;"></div>
<div class="a" style="left:1850px;top:108px;width:5px;height:6px;background:#94661f;"></div>
<div class="a" style="left:1850px;top:883px;width:5px;height:6px;background:#94661f;"></div>
<div class="a" style="left:1846px;top:235px;width:4px;height:10px;background:#3a8f45;"></div>
<div class="a" style="left:1850px;top:238px;width:5px;height:6px;background:#b0b0b0;"></div>
<div class="a" style="left:1855px;top:240px;width:4px;height:2px;background:#a0a0a0;"></div>
<div class="a" style="left:0px;top:1032px;width:1859px;height:21px;background:#181818;"></div>
<div class="a" style="left:0px;top:1032px;width:34px;height:21px;background:#0078d4;"></div>
<svg class="a" style="left:11px;top:1035px;color:#ffffff;" width="12" height="14" viewBox="0 0 12 14" fill="none" stroke="currentColor"><path d="M1.5 6.5l3.5 3.5-3.5 3.5M10.5 0.8L7 4.3l3.5 3.5" stroke-width="1.1"/></svg>
<svg class="a" style="left:40px;top:1035px;color:#cccccc;" width="12" height="13" viewBox="0 0 12 13" fill="none" stroke="currentColor"><circle cx="3" cy="2.5" r="1.8" stroke-width="1"/><circle cx="3" cy="10.5" r="1.8" stroke-width="1"/><circle cx="9.5" cy="3.5" r="1.8" stroke-width="1"/><path d="M3 4.3v4.4M9.5 5.3c0 3-6.5 2-6.5 3.4" stroke-width="1"/></svg>
<div class="t" style="left:57px;top:1035.50px;font-size:12px;height:12px;color:#cccccc;font-weight:normal;font-style:normal;font-family:'Liberation Sans', sans-serif;letter-spacing:0.3px">develop*</div>
<svg class="a" style="left:111px;top:1035px;color:#cccccc;" width="15" height="13" viewBox="0 0 15 13" fill="none" stroke="currentColor"><path d="M2 6.5a5.2 5 0 0 1 9.5-2.8M13 6.5a5.2 5 0 0 1-9.5 2.8" stroke-width="1.1"/><path d="M11.8 1v3h-3M3.2 12V9h3" stroke-width="1.1"/></svg>
<svg class="a" style="left:140px;top:1035px;color:#cccccc;" width="14" height="14" viewBox="0 0 14 14" fill="none" stroke="currentColor"><circle cx="3" cy="2.5" r="1.7" stroke-width="1"/><circle cx="3" cy="11" r="1.7" stroke-width="1"/><circle cx="10.5" cy="7" r="1.7" stroke-width="1"/><path d="M3 4.2v5M7 1v13M10.5 5.3V3" stroke-width="1"/></svg>
<svg class="a" style="left:170px;top:1035px;color:#cccccc;" width="14" height="13" viewBox="0 0 14 13" fill="none" stroke="currentColor"><path d="M12.5 1C9 1 6 3 4 6.5L6.5 9C10 7 12.5 4.5 12.5 1z" stroke-width="1"/><path d="M4 6.5H1.5l2-2.5h2.5M6.5 9v2.5l2.5-2V7" stroke-width="1"/><path d="M2.5 10l-1.5 2.5 2.5-1.5" stroke-width="1"/></svg>
<svg class="a" style="left:184px;top:1035px;color:#cccccc;" width="13" height="13" viewBox="0 0 13 13" fill="none" stroke="currentColor"><path d="M9 2l2 2M7.5 3.5l2 2M4 7l2 2" stroke-width="1"/><path d="M6 5L9 2l2.5 2.5-3 3zM2 11l2.5-2.5M5 5l3 3-2.5 2.5-3-3z" stroke-width="1"/></svg>
<div class="t" style="left:201px;top:1035.50px;font-size:12px;height:12px;color:#cccccc;font-weight:normal;font-style:normal;font-family:'Liberation Sans', sans-serif;">Launchpad</div>
<svg class="a" style="left:276px;top:1035px;color:#cccccc;" width="13" height="13" viewBox="0 0 13 13" fill="none" stroke="currentColor"><circle cx="6.5" cy="6.5" r="5.8" stroke-width="1"/><path d="M4.3 4.3l4.4 4.4M8.7 4.3L4.3 8.7" stroke-width="1"/></svg>
<div class="t" style="left:292.5px;top:1035.50px;font-size:12px;height:12px;color:#cccccc;font-weight:normal;font-style:normal;font-family:'Liberation Sans', sans-serif;">0</div>
<svg class="a" style="left:303px;top:1035px;color:#cccccc;" width="13" height="13" viewBox="0 0 13 13" fill="none" stroke="currentColor"><path d="M6.5 1L12.3 12H0.7z" stroke-width="1"/><path d="M6.5 5v3.5" stroke-width="1.1"/><circle cx="6.5" cy="10.2" r="0.6" fill="currentColor"/></svg>
<div class="t" style="left:319.5px;top:1035.50px;font-size:12px;height:12px;color:#cccccc;font-weight:normal;font-style:normal;font-family:'Liberation Sans', sans-serif;">0</div>
<div class="t" style="left:342px;top:1035.50px;font-size:12px;height:12px;color:#cccccc;font-weight:normal;font-style:normal;font-family:'Liberation Sans', sans-serif;">Git Graph</div>
<svg class="a" style="left:1232px;top:1035px;color:#cccccc;" width="10" height="14" viewBox="0 0 10 14" fill="none" stroke="currentColor"><circle cx="5" cy="7.5" r="4" stroke-width="1"/><path d="M3 3.2L3.5 1h3L7 3.2M3 11.8l.5 2.2h3l.5-2.2M5 5.5v2l1.2 1" stroke-width="1"/></svg>
<div class="t" style="left:1247px;top:1035.50px;font-size:12px;height:12px;color:#cccccc;font-weight:normal;font-style:normal;font-family:'Liberation Sans', sans-serif;">Blame Paused</div>
<svg class="a" style="left:1341px;top:1035px;color:#cccccc;" width="10" height="14" viewBox="0 0 10 14" fill="none" stroke="currentColor"><circle cx="5" cy="7" r="2.6" stroke-width="1.1"/><path d="M5 1v3.4M5 9.6V13" stroke-width="1.1"/></svg>
<div class="t" style="left:1356.5px;top:1035.50px;font-size:12px;height:12px;color:#cccccc;font-weight:normal;font-style:normal;font-family:'Liberation Sans', sans-serif;letter-spacing:0.3px">Not Committed Yet</div>
<div class="t" style="left:1478px;top:1035.50px;font-size:12px;height:12px;color:#cccccc;font-weight:normal;font-style:normal;font-family:'Liberation Sans', sans-serif;">Ln 226, Col 30</div>
<div class="t" style="left:1570px;top:1035.50px;font-size:12px;height:12px;color:#cccccc;font-weight:normal;font-style:normal;font-family:'Liberation Sans', sans-serif;">Spaces: 4</div>
<div class="t" style="left:1636px;top:1035.50px;font-size:12px;height:12px;color:#cccccc;font-weight:normal;font-style:normal;font-family:'Liberation Sans', sans-serif;">UTF-8</div>
<div class="t" style="left:1684px;top:1035.50px;font-size:12px;height:12px;color:#cccccc;font-weight:normal;font-style:normal;font-family:'Liberation Sans', sans-serif;">LF</div>
<div class="t" style="left:1711px;top:1036.00px;font-size:11px;height:11px;color:#cccccc;font-weight:normal;font-style:normal;font-family:'Liberation Sans', sans-serif;">{ }</div>
<div class="t" style="left:1730.5px;top:1035.50px;font-size:12px;height:12px;color:#cccccc;font-weight:normal;font-style:normal;font-family:'Liberation Sans', sans-serif;">JavaScript</div>
<svg class="a" style="left:1789px;top:1025px;color:#cccccc;" width="50" height="35" viewBox="0 0 50 35" fill="none" stroke="currentColor"><circle cx="15" cy="13.3" r="3" stroke-width="1.5"/><circle cx="21.3" cy="13.3" r="3" stroke-width="1.5"/><path d="M11.6 16.5C10.6 17.5 10.3 19.5 10.6 21C11.2 23.3 14.5 24 18.2 24S25.2 23.3 25.8 21C26.1 19.5 25.8 17.5 24.8 16.5" stroke-width="1.5"/><path d="M16.6 18.2v2.6M19.8 18.2v2.6" stroke-width="1.3"/></svg>
<svg class="a" style="left:1831px;top:1034px;color:#cccccc;" width="15" height="15" viewBox="0 0 15 15" fill="none" stroke="currentColor"><path d="M7 2.5a4 4 0 0 0-4 4v3.5L1.5 12h11L11 10V6.5" stroke-width="1.1"/><path d="M5.5 13.5a1.6 1.6 0 0 0 3 0" stroke-width="1.1"/><circle cx="11.5" cy="3.5" r="2.5" fill="currentColor" stroke="none"/></svg>
</body></html>
